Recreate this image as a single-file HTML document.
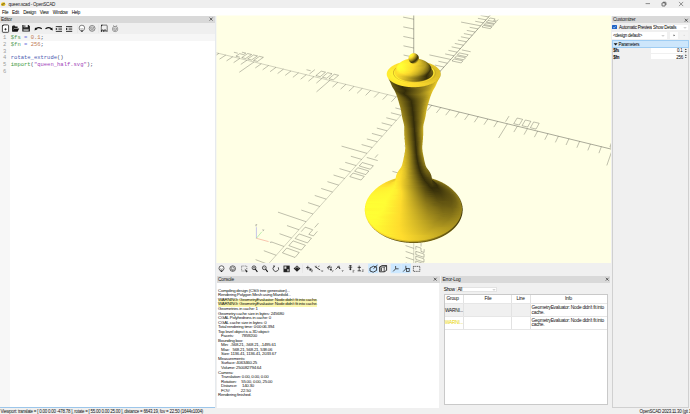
<!DOCTYPE html>
<html><head><meta charset="utf-8">
<style>
*{margin:0;padding:0;box-sizing:border-box}
html,body{width:690px;height:414px;overflow:hidden;background:#f0f0f0;font-family:"Liberation Sans",sans-serif;color:#000}
.a{position:absolute}
.t{position:absolute;white-space:nowrap}
.hdr{position:absolute;background:#d9d9d9}
</style></head><body>
<div class="a" style="left:0;top:0;width:690px;height:8px;background:#efefef"></div>
<div class="a" style="left:0;top:8px;width:690px;height:7.5px;background:#fff"></div>
<div class="t" style="left:8.5px;top:2.03px;font-size:4.59px;letter-spacing:-0.246px;line-height:5.74px;color:#222;">queen.scad - OpenSCAD</div>
<div class="t" style="left:2px;top:9.83px;font-size:4.59px;letter-spacing:-0.246px;line-height:5.74px;color:#000;">File</div><div class="t" style="left:12px;top:9.83px;font-size:4.59px;letter-spacing:-0.246px;line-height:5.74px;color:#000;">Edit</div><div class="t" style="left:23.2px;top:9.83px;font-size:4.59px;letter-spacing:-0.246px;line-height:5.74px;color:#000;">Design</div><div class="t" style="left:39.8px;top:9.83px;font-size:4.59px;letter-spacing:-0.246px;line-height:5.74px;color:#000;">View</div><div class="t" style="left:52.8px;top:9.83px;font-size:4.59px;letter-spacing:-0.246px;line-height:5.74px;color:#000;">Window</div><div class="t" style="left:71.7px;top:9.83px;font-size:4.59px;letter-spacing:-0.246px;line-height:5.74px;color:#000;">Help</div>

<div class="hdr" style="left:0;top:15.5px;width:215px;height:7px"></div>
<div class="t" style="left:1px;top:16.86px;font-size:4.70px;letter-spacing:-0.252px;line-height:5.88px;color:#222;">Editor</div>
<div class="a" style="left:0;top:22.5px;width:215px;height:11.6px;background:#efefef"></div>
<div class="a" style="left:0;top:34.1px;width:215px;height:373.4px;background:#fff"></div>
<div class="a" style="left:0;top:34.1px;width:10.4px;height:373.4px;background:#f7f7f7"></div>
<div class="a" style="left:0;top:34.1px;width:215px;height:6.8px;background:#f6f6f6"></div>
<div class="a" style="left:215px;top:15.5px;width:1.4px;height:392px;background:#e6eaee"></div>
<div class="t" style="left:3.0px;top:35.16px;font-size:5.5px;line-height:6.88px;color:#9a9a9a;font-family:'Liberation Mono'">1</div><div class="t" style="left:10.8px;top:35.16px;font-size:5.5px;line-height:6.88px;color:#000;font-family:'Liberation Mono'"><span style="color:#4e9a4e">$fs</span> <span style="color:#7070dd">=</span> <span style="color:#c07a55">0.1</span><span style="color:#333355">;</span></div><div class="t" style="left:3.0px;top:41.88px;font-size:5.5px;line-height:6.88px;color:#9a9a9a;font-family:'Liberation Mono'">2</div><div class="t" style="left:10.8px;top:41.88px;font-size:5.5px;line-height:6.88px;color:#000;font-family:'Liberation Mono'"><span style="color:#4e9a4e">$fn</span> <span style="color:#7070dd">=</span> <span style="color:#c07a55">256</span><span style="color:#333355">;</span></div><div class="t" style="left:3.0px;top:48.60px;font-size:5.5px;line-height:6.88px;color:#9a9a9a;font-family:'Liberation Mono'">3</div><div class="t" style="left:3.0px;top:55.32px;font-size:5.5px;line-height:6.88px;color:#9a9a9a;font-family:'Liberation Mono'">4</div><div class="t" style="left:10.8px;top:55.32px;font-size:5.5px;line-height:6.88px;color:#000;font-family:'Liberation Mono'"><span style="color:#4a58b0">rotate_extrude</span><span style="color:#404060">()</span></div><div class="t" style="left:3.0px;top:62.04px;font-size:5.5px;line-height:6.88px;color:#9a9a9a;font-family:'Liberation Mono'">5</div><div class="t" style="left:10.8px;top:62.04px;font-size:5.5px;line-height:6.88px;color:#000;font-family:'Liberation Mono'"><span style="color:#3d9a3d">import</span><span style="color:#404060">(</span><span style="color:#a040b8">"queen_half.svg"</span><span style="color:#404060">);</span></div><div class="t" style="left:3.0px;top:68.76px;font-size:5.5px;line-height:6.88px;color:#9a9a9a;font-family:'Liberation Mono'">6</div>

<svg class="a" style="left:0;top:0" width="690" height="414">
 <defs><clipPath id="vc"><rect x="216.5" y="15.5" width="394.5" height="247.5"/></clipPath></defs>
 <rect x="216.5" y="15.5" width="394.5" height="247.5" fill="#ffffe5"/>
 <g clip-path="url(#vc)" fill="none">
  <path d="M413.75 100.94L-18.36 -4.47M413.75 100.94L-802.04 1464.88M413.75 100.94L413.75 447.88" stroke="#000" stroke-width="0.4" stroke-opacity="0.45"/>
  <path d="M413.75 100.94L1334.35 325.51M413.75 100.94L568.31 -72.46M413.75 100.94L413.75 -1279.53" stroke="#000" stroke-width="0.42" stroke-opacity="0.8"/>
  <path d="M422.65 103.11L418.11 108.36M417.83 96.36L408.17 94.04M413.75 92.51L403.92 90.17M404.94 98.79L400.22 103.93M409.57 105.62L399.74 103.19M413.75 109.21L404.09 106.81M431.65 105.30L427.21 110.62M421.82 91.89L412.25 89.62M413.75 83.94L403.83 81.62M396.23 96.66L391.43 101.75M405.30 110.42L395.37 107.93M413.75 117.34L404.18 114.90M440.75 107.52L436.40 112.89M425.72 87.51L416.23 85.29M413.75 75.20L403.74 72.92M387.62 94.56L382.72 99.59M400.92 115.34L390.90 112.78M413.75 125.32L404.26 122.86M449.95 109.77L445.70 115.20M429.53 83.24L420.13 81.07M413.75 66.30L403.64 64.05M379.09 92.48L374.12 97.46M396.43 120.37L386.32 117.76M413.75 133.17L404.34 130.68M459.25 112.04L455.10 117.53M433.26 79.06L423.93 76.93M413.75 57.23L403.55 55.02M370.65 90.42L365.60 95.35M391.83 125.53L381.63 122.85M413.75 140.87L404.42 138.37M468.66 114.33L464.62 119.89M436.90 74.96L427.66 72.89M413.75 47.99L403.45 45.82M362.31 88.39L357.17 93.26M387.12 130.82L376.82 128.07M413.75 148.45L404.50 145.93M478.18 116.65L474.24 122.27M440.47 70.96L431.31 68.93M413.75 38.58L403.35 36.44M354.05 86.37L348.84 91.19M382.28 136.24L371.88 133.42M413.75 155.90L404.58 153.36M487.80 119.00L483.97 124.68M443.96 67.05L434.88 65.06M413.75 28.97L403.25 26.88M345.87 84.38L340.59 89.15M377.33 141.80L366.83 138.91M413.75 163.23L404.66 160.66M497.53 121.37L493.81 127.12M447.38 63.21L438.37 61.26M413.75 19.19L403.15 17.13M337.78 82.41L332.43 87.13M372.24 147.51L361.64 144.54M413.75 170.43L404.73 167.84M507.37 123.78L498.55 138.01M450.72 59.46L429.45 54.91M413.75 9.20L388.30 4.43M329.78 80.45L316.52 91.86M367.02 153.36L341.57 146.13M413.75 177.51L392.45 171.32M517.33 126.21L513.84 132.09M454.00 55.78L445.15 53.91M413.75 -0.98L402.94 -2.94M321.86 78.52L316.36 83.14M361.66 159.38L350.85 156.25M413.75 184.48L404.88 181.86M527.41 128.66L524.04 134.61M457.21 52.18L448.43 50.35M413.75 -11.37L402.83 -13.28M314.01 76.61L308.45 81.18M356.15 165.56L345.23 162.35M413.75 191.33L404.95 188.70M537.60 131.15L534.35 137.17M460.36 48.65L451.65 46.86M413.75 -21.97L402.72 -23.82M306.25 74.71L300.62 79.24M350.49 171.90L339.47 168.60M413.75 198.08L405.02 195.43M547.91 133.66L544.79 139.76M463.44 45.19L454.80 43.43M413.75 -32.78L402.61 -34.59M298.57 72.84L292.87 77.32M344.68 178.43L333.54 175.03M413.75 204.71L405.09 202.05M558.34 136.21L555.36 142.38M466.46 41.80L457.89 40.08M413.75 -43.83L402.49 -45.57M290.96 70.98L285.20 75.42M338.70 185.13L327.45 181.65M413.75 211.24L405.16 208.57M568.90 138.78L566.05 145.02M469.42 38.48L460.92 36.79M413.75 -55.10L402.38 -56.79M283.43 69.15L277.61 73.54M332.55 192.03L321.18 188.45M413.75 217.67L405.23 214.98M579.59 141.39L576.87 147.71M472.33 35.22L463.89 33.57M413.75 -66.62L402.26 -68.24M275.97 67.33L270.09 71.68M326.22 199.13L314.74 195.44M413.75 224.00L405.29 221.30M590.40 144.03L587.82 150.42M475.17 32.03L466.81 30.40M413.75 -78.38L402.13 -79.94M268.59 65.53L262.65 69.83M319.70 206.44L308.10 202.64M413.75 230.23L405.36 227.51M601.34 146.70L598.91 153.17M477.97 28.89L469.67 27.30M413.75 -90.40L402.01 -91.89M261.28 63.74L255.28 68.01M312.99 213.97L301.27 210.06M413.75 236.36L405.42 233.64M612.42 149.40L606.82 165.45M480.71 25.82L461.08 22.09M413.75 -102.68L385.55 -106.04M254.04 61.98L239.27 72.28M306.08 221.73L277.96 212.15M413.75 242.40L394.06 235.89M623.63 152.14L621.50 158.77M483.40 22.80L475.23 21.27M413.75 -115.24L401.75 -116.57M246.88 60.23L240.77 64.41M298.95 229.73L286.98 225.57M413.75 248.35L405.55 245.60M634.99 154.91L633.01 161.62M486.04 19.84L477.93 18.33M413.75 -128.08L401.62 -129.33M239.78 58.50L233.62 62.64M291.60 237.98L279.50 233.69M413.75 254.21L405.61 251.45M646.48 157.71L644.66 164.51M488.63 16.93L480.58 15.45M413.75 -141.21L401.48 -142.38M232.75 56.78L226.54 60.88M284.01 246.49L271.78 242.06M413.75 259.98L405.67 257.22M658.12 160.55L656.46 167.43M491.17 14.08L483.19 12.63M413.75 -154.64L401.34 -155.72M225.79 55.09L219.53 59.14M276.18 255.27L263.82 250.70M413.75 265.66L405.73 262.90M669.90 163.42L668.41 170.39M493.67 11.28L485.74 9.85M413.75 -168.38L401.20 -169.37M218.89 53.40L212.58 57.42M268.09 264.35L255.60 259.63M413.75 271.27L405.79 268.49M681.83 166.33L680.52 173.39M496.12 8.53L488.26 7.12M413.75 -182.45L401.05 -183.34M212.06 51.74L205.71 55.72M259.73 273.73L247.10 268.85M413.75 276.79L405.85 274.01M693.92 169.28L692.78 176.43M498.53 5.82L490.73 4.45M413.75 -196.85L400.90 -197.64M205.30 50.09L198.89 54.03M251.08 283.43L238.32 278.38M413.75 282.23L405.90 279.44M706.15 172.27L705.20 179.51M500.90 3.17L493.15 1.81M413.75 -211.60L400.75 -212.28M198.60 48.45L192.15 52.36M242.14 293.46L229.23 288.24M413.75 287.59L405.96 284.80M718.55 175.29L717.78 182.63M503.23 0.56L495.53 -0.77M413.75 -226.71L400.59 -227.27M191.96 46.83L185.47 50.70M232.88 303.85L219.83 298.44M413.75 292.87L406.01 290.08M731.11 178.35L729.70 196.60M505.51 -2.01L487.30 -5.12M413.75 -242.19L382.14 -243.24M185.38 45.23L169.45 54.58M223.29 314.61L192.03 301.33M413.75 298.09L395.44 291.40M743.83 181.46L743.45 188.99M507.76 -4.53L500.18 -5.81M413.75 -258.06L400.26 -258.37M178.87 43.64L172.29 47.44M213.35 325.76L200.01 319.95M413.75 303.22L406.12 300.41M756.72 184.60L756.55 192.24M509.97 -7.01L502.44 -8.27M413.75 -274.32L400.09 -274.51M172.42 42.07L165.80 45.83M203.04 337.33L189.55 331.30M413.75 308.29L406.18 305.48M769.78 187.79L769.81 195.52M512.14 -9.44L504.67 -10.68M413.75 -291.01L399.92 -291.06M166.02 40.51L159.36 44.23M192.33 349.34L178.70 343.08M413.75 313.28L406.23 310.47M783.02 191.02L783.26 198.86M514.28 -11.84L506.85 -13.06M413.75 -308.13L399.74 -308.03M159.69 38.96L152.99 42.65M181.22 361.80L167.44 355.31M413.75 318.21L406.28 315.39M796.43 194.29L796.89 202.24M516.38 -14.19L509.01 -15.39M413.75 -325.70L399.56 -325.44M153.41 37.43L146.67 41.09M169.67 374.77L155.73 368.01M413.75 323.07L406.33 320.25M810.03 197.60L810.71 205.66M518.44 -16.51L511.12 -17.69M413.75 -343.74L399.37 -343.32M147.19 35.91L140.41 39.54M157.65 388.25L143.56 381.22M413.75 327.86L406.38 325.04M823.80 200.97L824.72 209.13M520.47 -18.79L513.21 -19.95M413.75 -362.26L399.18 -361.67M141.02 34.41L134.21 38.00M145.14 402.28L130.90 394.96M413.75 332.59L406.43 329.76M837.77 204.37L838.93 212.65M522.47 -21.03L515.25 -22.18M413.75 -381.30L398.98 -380.53M134.91 32.92L128.07 36.48M132.11 416.90L117.71 409.28M413.75 337.25L406.48 334.42M851.93 207.83L853.33 216.22M524.44 -23.24L517.27 -24.36M413.75 -400.86L398.78 -399.90M128.86 31.44L121.98 34.97M118.52 432.15L103.96 424.20M413.75 341.86L406.53 339.03M866.29 211.33L870.34 232.25M526.37 -25.41L509.39 -28.05M413.75 -420.97L377.79 -418.22M122.86 29.98L106.02 38.50M104.33 448.06L69.57 428.44M413.75 346.40L396.64 339.64M880.85 214.88L882.76 223.52M528.28 -27.55L521.21 -28.64M413.75 -441.66L398.36 -440.28M116.91 28.53L109.97 31.99M89.51 464.68L74.65 456.01M413.75 350.88L406.62 348.05M895.61 218.48L897.78 227.24M530.15 -29.65L523.13 -30.72M413.75 -462.94L398.13 -461.34M111.02 27.09L104.04 30.52M74.02 482.07L59.00 472.99M413.75 355.30L406.67 352.47M910.58 222.13L913.03 231.02M532.00 -31.72L525.02 -32.78M413.75 -484.85L397.91 -483.02M105.18 25.66L98.17 29.07M57.80 500.26L42.63 490.76M413.75 359.67L406.71 356.83M925.77 225.84L928.49 234.85M533.82 -33.76L526.89 -34.80M413.75 -507.42L397.67 -505.33M99.38 24.25L92.35 27.63M40.81 519.33L25.48 509.37M413.75 363.98L406.76 361.14M941.18 229.60L944.19 238.74M535.61 -35.77L528.72 -36.79M413.75 -530.67L397.43 -528.32M93.64 22.85L86.58 26.20M22.98 539.33L7.50 528.88M413.75 368.23L406.80 365.40M956.80 233.41L960.11 242.69M537.37 -37.75L530.53 -38.76M413.75 -554.63L397.18 -552.00M87.95 21.46L80.86 24.78M4.25 560.33L-11.37 549.36M413.75 372.43L406.85 369.60M972.66 237.28L976.27 246.69M539.11 -39.69L532.31 -40.69M413.75 -579.34L396.93 -576.42M82.31 20.09L75.19 23.37M-15.44 582.42L-31.20 570.88M413.75 376.58L406.89 373.74M988.75 241.20L992.68 250.76M540.82 -41.61L534.07 -42.59M413.75 -604.84L396.66 -601.60M76.72 18.72L69.57 21.98M-36.17 605.68L-52.06 593.52M413.75 380.67L406.93 377.84M1005.08 245.19L1009.33 254.88M542.50 -43.50L535.79 -44.47M413.75 -631.16L396.39 -627.59M71.17 17.37L64.00 20.60M-58.03 630.21L-74.04 617.38M413.75 384.72L406.98 381.88M1021.65 249.23L1032.92 273.47M544.16 -45.37L528.25 -47.64M413.75 -658.34L372.05 -649.07M65.68 16.03L48.15 23.83M-81.11 656.10L-119.06 624.22M413.75 388.71L397.69 381.95M1038.47 253.33L1043.39 263.33M545.80 -47.20L539.18 -48.14M413.75 -686.42L395.82 -682.13M60.23 14.70L53.00 17.87M-105.52 683.48L-121.75 669.15M413.75 392.65L407.06 389.82M1055.55 257.50L1060.82 267.65M547.41 -49.01L540.83 -49.93M413.75 -715.46L395.52 -710.77M54.82 13.38L47.57 16.53M-131.37 712.49L-147.68 697.30M413.75 396.55L407.10 393.72M1072.89 261.73L1078.52 272.03M549.00 -50.79L542.46 -51.70M413.75 -745.50L395.21 -740.39M49.46 12.07L42.19 15.20M-158.80 743.26L-175.18 727.14M413.75 400.40L407.14 397.57M1090.49 266.02L1096.49 276.49M550.56 -52.55L544.07 -53.45M413.75 -776.59L394.89 -771.03M44.15 10.78L36.86 13.87M-187.96 775.97L-204.38 758.83M413.75 404.20L407.18 401.37M1108.37 270.38L1114.75 281.01M552.11 -54.28L545.65 -55.16M413.75 -808.79L394.55 -802.75M38.88 9.49L31.56 12.56M-219.01 810.81L-235.44 792.54M413.75 407.95L407.22 405.13M1126.52 274.81L1133.30 285.61M553.63 -55.99L547.21 -56.86M413.75 -842.16L394.21 -835.62M33.66 8.22L26.32 11.26M-252.15 847.98L-268.56 828.48M413.75 411.66L407.26 408.84M1144.97 279.31L1152.15 290.28M555.13 -57.67L548.75 -58.53M413.75 -876.77L393.85 -869.68M28.47 6.95L21.12 9.97M-287.59 887.74L-303.93 866.87M413.75 415.33L407.30 412.51M1163.70 283.88L1171.31 295.03M556.61 -59.33L550.27 -60.18M413.75 -912.68L393.48 -905.01M23.34 5.70L15.96 8.69M-325.58 930.36L-341.81 907.98M413.75 418.95L407.34 416.14M1182.74 288.52L1190.77 299.85M558.07 -60.97L551.77 -61.81M413.75 -949.98L393.10 -941.69M18.24 4.46L10.84 7.43M-366.41 976.16L-382.46 952.10M413.75 422.53L407.37 419.72M1202.08 293.24L1223.00 321.65M559.51 -62.58L544.55 -64.55M413.75 -988.73L364.12 -967.63M13.18 3.22L-4.87 10.39M-410.40 1025.52L-447.29 964.90M413.75 426.07L398.62 419.36M1221.74 298.04L1230.67 309.74M560.93 -64.18L554.70 -64.99M413.75 -1029.03L392.28 -1019.38M8.17 2.00L0.73 4.92M-457.95 1078.86L-473.39 1050.79M413.75 429.57L407.45 426.76M1241.71 302.91L1251.12 314.81M562.33 -65.75L556.14 -66.55M413.75 -1070.98L391.85 -1060.57M3.20 0.79L-4.26 3.68M-509.49 1136.68L-524.48 1106.23M413.75 433.03L407.48 430.22M1262.02 307.87L1271.92 319.96M563.71 -67.30L557.56 -68.09M413.75 -1114.67L391.40 -1103.45M-1.74 -0.42L-9.21 2.46M-565.56 1199.58L-579.95 1166.43M413.75 436.44L407.52 433.64M1282.67 312.90L1293.07 325.20M565.07 -68.83L558.96 -69.61M413.75 -1160.23L390.93 -1148.12M-6.63 -1.61L-14.12 1.24M-626.77 1268.25L-640.39 1232.03M413.75 439.82L407.56 437.02M1303.67 318.02L1314.58 330.54M566.42 -70.34L560.34 -71.11M413.75 -1207.76L390.44 -1194.72M-11.48 -2.79L-18.99 0.03M-693.88 1343.54L-706.51 1303.79M413.75 443.16L407.59 440.37M1325.02 323.23L1336.46 335.96M567.75 -71.83L561.70 -72.59M413.75 -1257.40L389.93 -1243.35M-16.30 -3.97L-23.82 -1.16M-767.77 1426.43L-779.14 1382.61M413.75 446.46L407.63 443.67" stroke="#000" stroke-width="0.36" stroke-opacity="0.7"/>
  <path d="M509.05 116.08L505.53 121.68M517.16 118.02L522.62 119.33L519.26 125.02L513.74 123.68ZM525.36 119.99L530.86 121.30L527.60 127.05L522.03 125.69ZM533.63 121.96L539.19 123.29L536.03 129.09L530.40 127.73ZM462.91 60.83L461.13 62.92L452.06 60.97L453.88 58.91ZM465.54 57.75L463.79 59.80L454.78 57.89L456.58 55.86ZM468.13 54.72L466.41 56.73L457.46 54.86L459.22 52.86ZM470.67 51.74L461.83 49.92M427.37 8.94L427.29 14.55L416.44 12.50L416.46 6.91ZM427.48 0.40L427.40 6.11L416.46 4.09L416.48 -1.59ZM427.60 -8.28L427.52 -2.48L416.49 -4.45L416.50 -10.23ZM427.71 -17.11L416.52 -19.02M334.20 74.25L338.57 75.30L333.32 79.84L328.92 78.77ZM327.71 72.70L332.03 73.73L326.73 78.24L322.37 77.18ZM321.27 71.16L325.56 72.18L320.20 76.65L315.87 75.60ZM314.88 69.63L309.43 74.03M306.50 69.74L310.73 70.76M377.94 154.41L375.06 157.73M377.73 160.59L366.78 157.45M373.34 165.74L370.35 169.23L359.25 165.97L362.30 162.53ZM368.84 171.00L365.79 174.58L354.59 171.24L357.71 167.72ZM364.25 176.38L361.12 180.04L349.83 176.63L353.02 173.02ZM421.68 177.86L421.64 181.76M425.02 184.69L415.99 182.04M424.94 190.45L424.89 194.24L415.97 191.57L415.98 187.79ZM424.86 196.13L424.81 199.87L415.95 197.19L415.96 193.45ZM424.79 201.73L424.74 205.42L415.94 202.73L415.95 199.04ZM612.15 140.75L618.22 142.20L617.42 144.56L611.32 143.09L609.91 147.05L616.06 148.54M621.27 142.93L627.40 144.40L625.36 150.80L619.15 149.29ZM630.48 145.14L636.68 146.62L634.76 153.09L628.48 151.56ZM639.79 147.36L646.04 148.86L644.25 155.39L637.91 153.85ZM491.84 26.95L490.39 28.65L482.03 27.06L483.52 25.37ZM494.00 24.42L492.57 26.10L484.27 24.53L485.74 22.87ZM496.13 21.93L494.71 23.59L486.47 22.04L487.91 20.40ZM498.22 19.48L496.83 21.11L493.74 20.54L495.15 18.92L490.06 17.98L488.63 19.59M428.88 -104.36L428.79 -97.44L416.74 -98.90L416.75 -105.78ZM429.02 -114.92L428.93 -107.86L416.76 -109.26L416.78 -116.27ZM429.16 -125.67L429.07 -118.48L416.79 -119.81L416.81 -126.95ZM429.31 -136.62L429.21 -129.30L424.54 -129.77L424.61 -137.08L416.84 -137.83L416.82 -130.56M259.44 56.37L263.39 57.31L257.53 61.42L253.55 60.46ZM253.56 54.96L257.47 55.90L251.56 59.97L247.62 59.01ZM247.72 53.56L251.60 54.49L245.65 58.54L241.74 57.59ZM241.92 52.18L245.78 53.10L243.55 54.59L239.68 53.66L235.90 56.17L239.79 57.11M233.92 52.28L237.76 53.20M318.50 223.11L314.67 227.53M317.32 231.35L313.42 235.91L308.81 234.31L312.74 229.77L305.17 227.16L301.20 231.65M311.45 238.22L307.45 242.91L295.11 238.54L299.19 233.93ZM305.42 245.28L301.32 250.09L288.87 245.60L293.05 240.87ZM299.24 252.52L295.02 257.46L282.46 252.85L286.75 248.00ZM421.07 243.15L421.04 246.47M424.16 249.17L424.11 252.45L420.99 251.40L421.02 248.12L415.82 246.39L415.81 249.67M424.09 254.08L424.05 257.32L415.80 254.54L415.81 251.30ZM424.02 258.93L423.98 262.13L415.79 259.34L415.79 256.14ZM423.96 263.72L423.92 266.89L415.77 264.09L415.78 260.93ZM728.38 168.56L735.25 170.20L734.74 177.38L727.77 175.69M728.15 171.20L735.06 172.87M738.70 171.02L745.64 172.69L745.29 179.94L738.25 178.23ZM749.13 173.52L756.14 175.20L755.96 182.53L748.84 180.80ZM759.67 176.04L766.76 177.74L766.74 185.15L759.54 183.40ZM515.76 -1.07L514.55 0.36L506.81 -0.97L508.05 -2.38ZM517.56 -3.18L516.37 -1.77L508.67 -3.08L509.90 -4.47ZM519.34 -5.26L518.16 -3.87L510.51 -5.16L511.72 -6.53ZM521.09 -7.31L519.93 -5.94L512.33 -7.22L513.52 -8.57M518.24 -7.78L517.07 -6.42M430.77 -246.02L430.66 -237.26L417.10 -237.74L417.13 -246.44ZM430.95 -259.39L430.83 -250.45L417.14 -250.83L417.16 -259.70ZM431.13 -273.05L431.01 -263.91L417.17 -264.19L417.20 -273.25ZM431.32 -287.00L431.20 -277.67L417.21 -277.83L417.23 -287.08M426.01 -287.03L425.92 -277.73M191.56 40.13L195.15 40.99L188.81 44.72L185.19 43.85ZM186.20 38.85L189.77 39.70L183.39 43.41L179.80 42.54ZM180.89 37.57L184.43 38.42L178.01 42.10L174.45 41.24ZM175.61 36.31L179.12 37.15L172.67 40.80L169.14 39.95M173.20 37.67L176.72 38.51M167.95 36.40L171.45 37.24M237.68 316.53L232.35 322.69M234.77 328.03L229.31 334.43L215.64 328.46L221.18 322.18M229.64 325.82L224.15 332.18M226.53 337.68L220.90 344.27L207.10 338.12L212.82 331.64ZM218.04 347.62L212.23 354.43L198.29 348.08L204.19 341.40ZM209.27 357.89L203.27 364.92L189.21 358.36L195.30 351.47ZM420.54 299.12L420.52 301.99M423.42 304.48L423.38 307.32L415.67 304.48L415.67 301.64M420.50 303.42L420.48 306.25M423.36 308.73L423.32 311.53L415.66 308.68L415.66 305.88ZM423.30 312.92L423.27 315.69L415.64 312.84L415.65 310.07ZM423.25 317.06L423.21 319.80L415.63 316.95L415.64 314.21ZM860.39 200.14L860.96 203.16L868.84 205.06M868.23 202.01L869.88 210.22M872.17 202.96L880.09 204.85L881.95 213.15L873.89 211.19ZM884.07 205.80L892.09 207.72L894.16 216.11L886.00 214.13ZM896.12 208.69L904.23 210.63L906.51 219.12L898.26 217.11ZM535.87 -24.61L534.84 -23.41L527.63 -24.53L528.69 -25.73ZM537.39 -26.40L536.38 -25.21L529.21 -26.32L530.26 -27.50ZM538.90 -28.17L537.90 -26.99L530.77 -28.09L531.80 -29.25ZM540.39 -29.91L537.73 -30.31L536.73 -29.15M539.40 -28.75L532.31 -29.83M433.21 -428.19L433.06 -416.76L417.57 -415.63L417.60 -426.95ZM433.44 -445.69L433.29 -433.98L417.62 -432.67L417.65 -444.26ZM433.68 -463.62L433.52 -451.62L417.67 -450.13L417.70 -462.00ZM433.93 -481.98L427.82 -481.30L427.71 -469.05M433.76 -469.69L417.71 -468.00M129.65 25.32L132.94 26.10L126.22 29.52L122.91 28.71ZM124.76 24.15L128.02 24.93L121.27 28.31L117.99 27.52ZM119.90 22.98L123.13 23.76L116.36 27.12L113.10 26.33ZM115.07 21.83L112.53 23.07L115.75 23.84M118.29 22.60L111.48 25.94M107.73 21.91L110.93 22.68M121.43 450.92L113.48 460.10M115.19 468.08L109.44 464.77L101.20 474.30M106.98 477.69L91.66 468.72M102.80 482.59L94.28 492.57L78.82 483.25L87.43 473.50ZM89.93 497.66L81.08 508.03L65.47 498.35L74.43 488.22ZM76.56 513.32L67.35 524.11L51.60 514.04L60.91 503.51ZM420.09 347.64L420.07 350.14M422.77 352.46L420.06 351.38L420.03 353.85M422.74 354.93L415.54 352.07M422.73 356.16L422.69 358.60L415.53 355.74L415.54 353.30ZM422.68 359.82L422.64 362.24L415.52 359.37L415.53 356.95ZM422.63 363.44L422.60 365.83L415.51 362.97L415.52 360.57ZM1020.67 238.48L1011.65 236.33L1013.24 239.81L1022.33 241.99L1025.14 247.94L1015.94 245.71M1025.21 239.57L1034.34 241.75L1039.08 251.33L1029.77 249.07ZM1038.93 242.85L1048.18 245.06L1053.19 254.76L1043.76 252.47ZM1052.83 246.18L1062.18 248.42L1067.48 258.23L1057.94 255.91ZM553.00 -44.68L552.12 -43.65L545.38 -44.61L546.29 -45.64ZM554.31 -46.22L553.44 -45.20L546.74 -46.15L547.63 -47.16ZM555.61 -47.73L554.75 -46.72L548.08 -47.66L548.96 -48.66ZM556.03 -48.23L556.88 -49.23L554.40 -49.58L553.54 -48.58L549.40 -49.16L550.28 -50.15M436.46 -671.17L436.25 -655.62L418.20 -651.69L418.24 -667.04ZM436.77 -695.05L436.56 -679.06L418.26 -674.82L418.30 -690.59ZM437.10 -719.60L436.88 -703.15L418.32 -698.58L418.37 -714.80ZM437.21 -727.94L437.44 -744.87L430.26 -742.92L430.10 -726.09L418.39 -723.03L418.43 -739.71M72.97 11.76L75.98 12.48L68.97 15.61L65.94 14.87ZM68.48 10.68L71.47 11.40L64.43 14.50L61.43 13.77ZM64.01 9.61L66.99 10.32L59.93 13.41L56.95 12.68ZM62.53 9.26L59.58 8.55L56.94 9.69L59.90 10.40L55.46 12.32L52.50 11.60M52.54 8.63L55.47 9.34M-60.13 660.78L-73.20 675.90M-87.23 705.15L-73.54 689.12L-79.90 683.64L-93.61 699.49L-104.08 690.19L-90.33 674.63M-94.24 713.37L-108.62 730.20L-125.56 714.48L-111.13 698.15ZM-115.99 738.83L-131.11 756.54L-148.12 740.01L-132.96 722.85ZM-138.86 765.62L-154.78 784.26L-171.85 766.86L-155.90 748.81ZM419.70 390.11L419.68 392.30M422.18 396.64L422.21 394.47L419.67 393.39L419.64 395.57L415.43 393.78L415.44 391.61M422.17 397.72L422.14 399.87L415.42 397.02L415.43 394.86ZM422.13 400.94L422.10 403.07L415.41 400.22L415.42 398.09ZM422.08 404.13L422.06 406.24L415.40 403.39L415.41 401.28ZM1197.19 280.71L1186.69 278.20L1194.65 289.13L1205.39 291.74L1200.23 284.80L1189.64 282.25M1202.47 281.98L1213.11 284.52L1221.67 295.70L1210.79 293.05ZM1218.46 285.80L1229.24 288.38L1238.17 299.70L1227.14 297.03ZM1234.66 289.68L1245.58 292.29L1254.90 303.77L1243.72 301.05ZM567.78 -61.99L567.02 -61.10L560.69 -61.93L561.47 -62.82ZM568.92 -63.32L568.16 -62.44L561.86 -63.26L562.64 -64.14ZM570.04 -64.64L569.29 -63.76L563.03 -64.58L563.80 -65.45ZM570.41 -65.07L571.15 -65.94L564.94 -66.74L564.18 -65.88L568.07 -65.38L568.82 -66.24M441.00 -1011.50L440.70 -989.13L419.07 -980.08L419.13 -1002.05ZM441.46 -1045.99L441.16 -1022.87L419.16 -1013.22L419.22 -1035.92ZM441.94 -1081.67L441.62 -1057.75L419.25 -1047.47L419.31 -1070.95ZM442.10 -1093.84L442.44 -1118.61L419.41 -1107.18L419.34 -1082.89L433.49 -1089.70L433.72 -1114.28M20.87 -0.71L23.64 -0.05L16.41 2.83L13.62 2.16ZM16.73 -1.70L19.49 -1.04L12.24 1.82L9.47 1.15ZM12.62 -2.68L15.36 -2.03L8.09 0.81L5.35 0.15ZM11.26 -3.01L8.54 -3.66L1.25 -0.85L3.98 -0.19L8.54 -1.96L5.82 -2.61M1.76 -3.59L4.47 -2.94M-383.47 1034.55L-408.91 1063.96M-443.08 1121.92L-415.81 1089.99L-432.25 1061.47L-459.32 1092.09L-449.25 1110.59L-422.06 1079.15M-457.20 1138.45L-486.43 1172.69L-502.29 1140.71L-473.32 1107.93ZM-501.57 1190.43L-532.99 1227.22L-548.38 1192.85L-517.29 1157.68ZM-549.29 1246.31L-583.14 1285.96L-597.93 1248.92L-564.49 1211.08ZM419.35 427.58L419.33 429.52M421.69 433.48L421.72 431.56L415.34 428.72L415.33 430.65L419.30 432.42L419.32 430.49M421.68 434.44L421.65 436.35L415.32 433.52L415.33 431.61ZM421.64 437.30L421.62 439.19L415.32 436.36L415.32 434.47ZM421.60 440.13L421.58 442.00L415.31 439.17L415.31 437.30Z" stroke="#000" stroke-width="0.36" stroke-opacity="0.7"/>
 </g>
 <g clip-path="url(#vc)"><defs><linearGradient id="g0" gradientUnits="userSpaceOnUse" x1="411" x2="417" y1="0" y2="0"><stop offset="0.0833" stop-color="#fff232" stop-opacity="0.25"/><stop offset="0.2500" stop-color="#ffe930" stop-opacity="0.69"/><stop offset="0.4167" stop-color="#fada2d" stop-opacity="0.75"/><stop offset="0.5833" stop-color="#ddbf27" stop-opacity="0.75"/><stop offset="0.7500" stop-color="#b9a021" stop-opacity="0.50"/><stop offset="0.9167" stop-color="#96811a" stop-opacity="0.06"/></linearGradient><linearGradient id="g1" gradientUnits="userSpaceOnUse" x1="410" x2="418" y1="0" y2="0"><stop offset="0.0625" stop-color="#fffc34" stop-opacity="0.62"/><stop offset="0.1875" stop-color="#fffd34"/><stop offset="0.4375" stop-color="#fddf2e"/><stop offset="0.5625" stop-color="#e5c628"/><stop offset="0.6875" stop-color="#c0a622"/><stop offset="0.8125" stop-color="#907c19" stop-opacity="0.94"/><stop offset="0.9375" stop-color="#655712" stop-opacity="0.19"/></linearGradient><linearGradient id="g2" gradientUnits="userSpaceOnUse" x1="409" x2="419" y1="0" y2="0"><stop offset="0.0500" stop-color="#fff632" stop-opacity="0.56"/><stop offset="0.1500" stop-color="#fffe34"/><stop offset="0.2500" stop-color="#fff933"/><stop offset="0.4500" stop-color="#f7d62c"/><stop offset="0.6500" stop-color="#b9a021"/><stop offset="0.7500" stop-color="#8f7b19"/><stop offset="0.8500" stop-color="#574b0f" stop-opacity="0.94"/><stop offset="0.9500" stop-color="#443b0c" stop-opacity="0.12"/></linearGradient><linearGradient id="g3" gradientUnits="userSpaceOnUse" x1="408" x2="419" y1="0" y2="0"><stop offset="0.0455" stop-color="#fcda2d" stop-opacity="0.12"/><stop offset="0.1364" stop-color="#fff031"/><stop offset="0.2273" stop-color="#fff432"/><stop offset="0.4091" stop-color="#fbdb2d"/><stop offset="0.5000" stop-color="#e6c729"/><stop offset="0.6818" stop-color="#a8911e"/><stop offset="0.8636" stop-color="#4f440e"/><stop offset="0.9545" stop-color="#53480f" stop-opacity="0.62"/></linearGradient><linearGradient id="g4" gradientUnits="userSpaceOnUse" x1="408" x2="419" y1="0" y2="0"><stop offset="0.0455" stop-color="#f2d12b" stop-opacity="0.38"/><stop offset="0.1364" stop-color="#ffe22e"/><stop offset="0.3182" stop-color="#f8d72c"/><stop offset="0.4091" stop-color="#e6c729"/><stop offset="0.5909" stop-color="#b2991f"/><stop offset="0.8636" stop-color="#433a0c"/><stop offset="0.9545" stop-color="#6a5b13" stop-opacity="0.88"/></linearGradient><linearGradient id="g5" gradientUnits="userSpaceOnUse" x1="408" x2="419" y1="0" y2="0"><stop offset="0.0455" stop-color="#dabc26" stop-opacity="0.50"/><stop offset="0.1364" stop-color="#ebcb2a"/><stop offset="0.2273" stop-color="#e9c929"/><stop offset="0.4091" stop-color="#caae24"/><stop offset="0.5909" stop-color="#95811a"/><stop offset="0.7727" stop-color="#4d430e"/><stop offset="0.8636" stop-color="#493f0d"/><stop offset="0.9545" stop-color="#877518"/></linearGradient><linearGradient id="g6" gradientUnits="userSpaceOnUse" x1="405" x2="423" y1="0" y2="0"><stop offset="0.0278" stop-color="#ffe02e" stop-opacity="0.31"/><stop offset="0.1389" stop-color="#fedf2e" stop-opacity="0.88"/><stop offset="0.1944" stop-color="#e9cb2a"/><stop offset="0.2500" stop-color="#c8ac23"/><stop offset="0.3056" stop-color="#c7ac23"/><stop offset="0.4167" stop-color="#a8911e"/><stop offset="0.5833" stop-color="#53480f"/><stop offset="0.6389" stop-color="#41380c"/><stop offset="0.6944" stop-color="#685a12"/><stop offset="0.7500" stop-color="#ac941e"/><stop offset="0.8056" stop-color="#c7ac23"/><stop offset="0.8611" stop-color="#bea422" stop-opacity="0.75"/><stop offset="0.9722" stop-color="#a7901d" stop-opacity="0.12"/></linearGradient><linearGradient id="g7" gradientUnits="userSpaceOnUse" x1="402" x2="425" y1="0" y2="0"><stop offset="0.0217" stop-color="#ffe52f" stop-opacity="0.06"/><stop offset="0.1087" stop-color="#ffe930" stop-opacity="0.88"/><stop offset="0.1522" stop-color="#ffea30"/><stop offset="0.2826" stop-color="#f8de2d"/><stop offset="0.3261" stop-color="#a18c1d"/><stop offset="0.4130" stop-color="#94801a"/><stop offset="0.4565" stop-color="#827117"/><stop offset="0.5435" stop-color="#4f440e"/><stop offset="0.5870" stop-color="#41380b"/><stop offset="0.6304" stop-color="#605311"/><stop offset="0.6739" stop-color="#927e1a"/><stop offset="0.7174" stop-color="#d2b525"/><stop offset="0.7609" stop-color="#d7b926"/><stop offset="0.8913" stop-color="#b59c20"/><stop offset="0.9348" stop-color="#a8911e" stop-opacity="0.69"/><stop offset="0.9783" stop-color="#95811a" stop-opacity="0.25"/></linearGradient><linearGradient id="g8" gradientUnits="userSpaceOnUse" x1="401" x2="427" y1="0" y2="0"><stop offset="0.0192" stop-color="#ffed31" stop-opacity="0.38"/><stop offset="0.0577" stop-color="#ffef31" stop-opacity="0.94"/><stop offset="0.0962" stop-color="#fff131"/><stop offset="0.2885" stop-color="#ffe72f"/><stop offset="0.3269" stop-color="#bda923"/><stop offset="0.3654" stop-color="#6c5d13"/><stop offset="0.4038" stop-color="#665812"/><stop offset="0.4808" stop-color="#443a0c"/><stop offset="0.5192" stop-color="#453c0c"/><stop offset="0.5577" stop-color="#655712"/><stop offset="0.5962" stop-color="#907c19"/><stop offset="0.6346" stop-color="#c9ae24"/><stop offset="0.6731" stop-color="#e2c428"/><stop offset="0.7500" stop-color="#d5b826"/><stop offset="0.9038" stop-color="#a7901e"/><stop offset="0.9423" stop-color="#927e1a" stop-opacity="0.69"/><stop offset="0.9808" stop-color="#776715" stop-opacity="0.12"/></linearGradient><linearGradient id="g9" gradientUnits="userSpaceOnUse" x1="399" x2="428" y1="0" y2="0"><stop offset="0.0172" stop-color="#ffe52f" stop-opacity="0.12"/><stop offset="0.0517" stop-color="#fff332" stop-opacity="0.69"/><stop offset="0.0862" stop-color="#fff632"/><stop offset="0.3621" stop-color="#ffe82f"/><stop offset="0.4310" stop-color="#463c0c"/><stop offset="0.4655" stop-color="#483f0d"/><stop offset="0.5000" stop-color="#5a4e10"/><stop offset="0.5690" stop-color="#9e881c"/><stop offset="0.6034" stop-color="#cfb325"/><stop offset="0.6379" stop-color="#e9c929"/><stop offset="0.7414" stop-color="#d9bc26"/><stop offset="0.9138" stop-color="#a48d1d"/><stop offset="0.9483" stop-color="#8b7819" stop-opacity="0.94"/><stop offset="0.9828" stop-color="#827017" stop-opacity="0.38"/></linearGradient><linearGradient id="g10" gradientUnits="userSpaceOnUse" x1="396" x2="431" y1="0" y2="0"><stop offset="0.0143" stop-color="#ffe12e" stop-opacity="0.12"/><stop offset="0.0714" stop-color="#ffdf2e" stop-opacity="0.81"/><stop offset="0.1000" stop-color="#fff231"/><stop offset="0.1286" stop-color="#fffb33"/><stop offset="0.1857" stop-color="#fffa33"/><stop offset="0.4143" stop-color="#ffe62f"/><stop offset="0.4429" stop-color="#edd32b"/><stop offset="0.4714" stop-color="#c6ad23"/><stop offset="0.5000" stop-color="#c6ab23"/><stop offset="0.5571" stop-color="#e9c929"/><stop offset="0.5857" stop-color="#efce2a"/><stop offset="0.6429" stop-color="#e7c729"/><stop offset="0.8429" stop-color="#ab941e"/><stop offset="0.8714" stop-color="#9a851b"/><stop offset="0.9000" stop-color="#7f6e16"/><stop offset="0.9286" stop-color="#b2991f" stop-opacity="0.94"/><stop offset="0.9571" stop-color="#e3c428" stop-opacity="0.62"/><stop offset="0.9857" stop-color="#d7ba26" stop-opacity="0.31"/></linearGradient><linearGradient id="g11" gradientUnits="userSpaceOnUse" x1="394" x2="434" y1="0" y2="0"><stop offset="0.0125" stop-color="#ffe22e" stop-opacity="0.19"/><stop offset="0.0625" stop-color="#ffe02e"/><stop offset="0.0875" stop-color="#ffe12e"/><stop offset="0.1375" stop-color="#fffd34"/><stop offset="0.1625" stop-color="#fffe34"/><stop offset="0.2875" stop-color="#fff632"/><stop offset="0.4625" stop-color="#ffdf2e"/><stop offset="0.5625" stop-color="#f1d02b"/><stop offset="0.6375" stop-color="#e0c228"/><stop offset="0.7875" stop-color="#ae961f"/><stop offset="0.8375" stop-color="#8b7819"/><stop offset="0.8625" stop-color="#6f6014"/><stop offset="0.9125" stop-color="#e3c428"/><stop offset="0.9375" stop-color="#e1c228" stop-opacity="0.88"/><stop offset="0.9625" stop-color="#dfc127" stop-opacity="0.38"/><stop offset="0.9875" stop-color="#9c871c" stop-opacity="0.06"/></linearGradient><linearGradient id="g12" gradientUnits="userSpaceOnUse" x1="392" x2="435" y1="0" y2="0"><stop offset="0.0116" stop-color="#ffe72f" stop-opacity="0.12"/><stop offset="0.0349" stop-color="#ffe32e" stop-opacity="0.62"/><stop offset="0.0581" stop-color="#ffe22e"/><stop offset="0.1047" stop-color="#ffe22e"/><stop offset="0.1512" stop-color="#fffd34"/><stop offset="0.2209" stop-color="#ffff34"/><stop offset="0.4767" stop-color="#ffdf2e"/><stop offset="0.5465" stop-color="#f5d42b"/><stop offset="0.7791" stop-color="#ae971f"/><stop offset="0.8256" stop-color="#8e7b19"/><stop offset="0.8488" stop-color="#786715"/><stop offset="0.8721" stop-color="#574b0f"/><stop offset="0.8953" stop-color="#c2a722"/><stop offset="0.9186" stop-color="#e1c228"/><stop offset="0.9419" stop-color="#e2c328"/><stop offset="0.9651" stop-color="#e0c228" stop-opacity="0.88"/><stop offset="0.9884" stop-color="#d6b926" stop-opacity="0.38"/></linearGradient><linearGradient id="g13" gradientUnits="userSpaceOnUse" x1="391" x2="437" y1="0" y2="0"><stop offset="0.0109" stop-color="#ffe72f" stop-opacity="0.44"/><stop offset="0.0326" stop-color="#ffe42f" stop-opacity="0.94"/><stop offset="0.0543" stop-color="#ffe42f"/><stop offset="0.1196" stop-color="#ffe82f"/><stop offset="0.1413" stop-color="#fffa33"/><stop offset="0.1630" stop-color="#ffff34"/><stop offset="0.2283" stop-color="#ffff34"/><stop offset="0.4891" stop-color="#fddb2d"/><stop offset="0.7283" stop-color="#b89f20"/><stop offset="0.7935" stop-color="#8d7a19"/><stop offset="0.8370" stop-color="#605311"/><stop offset="0.8587" stop-color="#675912"/><stop offset="0.8804" stop-color="#d8ba26"/><stop offset="0.9457" stop-color="#e1c228"/><stop offset="0.9674" stop-color="#dcbe27" stop-opacity="0.75"/><stop offset="0.9891" stop-color="#c6ab23" stop-opacity="0.12"/></linearGradient><linearGradient id="g14" gradientUnits="userSpaceOnUse" x1="390" x2="438" y1="0" y2="0"><stop offset="0.0104" stop-color="#ffe72f" stop-opacity="0.62"/><stop offset="0.0312" stop-color="#ffe52f"/><stop offset="0.1146" stop-color="#fde52f"/><stop offset="0.1354" stop-color="#fde930"/><stop offset="0.1562" stop-color="#fffd34"/><stop offset="0.2396" stop-color="#ffff34"/><stop offset="0.4896" stop-color="#fcd92c"/><stop offset="0.6354" stop-color="#d5b826"/><stop offset="0.7188" stop-color="#b49c20"/><stop offset="0.8021" stop-color="#776715"/><stop offset="0.8438" stop-color="#433a0c"/><stop offset="0.8646" stop-color="#c1a922"/><stop offset="0.9062" stop-color="#dcbe27"/><stop offset="0.9479" stop-color="#e0c128"/><stop offset="0.9688" stop-color="#ddbf27" stop-opacity="0.94"/><stop offset="0.9896" stop-color="#d6b926" stop-opacity="0.19"/></linearGradient><linearGradient id="g15" gradientUnits="userSpaceOnUse" x1="389" x2="439" y1="0" y2="0"><stop offset="0.0100" stop-color="#ffe830" stop-opacity="0.62"/><stop offset="0.0300" stop-color="#ffe62f"/><stop offset="0.1100" stop-color="#fce62f"/><stop offset="0.1300" stop-color="#ddbf27"/><stop offset="0.1500" stop-color="#ffed30"/><stop offset="0.1700" stop-color="#fffc34"/><stop offset="0.1900" stop-color="#ffff34"/><stop offset="0.2900" stop-color="#fffa33"/><stop offset="0.4900" stop-color="#fad82c"/><stop offset="0.6100" stop-color="#d9bb26"/><stop offset="0.6900" stop-color="#b9a021"/><stop offset="0.7700" stop-color="#857317"/><stop offset="0.8300" stop-color="#42390c"/><stop offset="0.8500" stop-color="#9c8f1d"/><stop offset="0.8700" stop-color="#edd62c"/><stop offset="0.8900" stop-color="#d0b325"/><stop offset="0.9100" stop-color="#dbbd27"/><stop offset="0.9500" stop-color="#dfc027"/><stop offset="0.9700" stop-color="#dfc027" stop-opacity="0.94"/><stop offset="0.9900" stop-color="#d6b826" stop-opacity="0.19"/></linearGradient><linearGradient id="g16" gradientUnits="userSpaceOnUse" x1="388" x2="440" y1="0" y2="0"><stop offset="0.0096" stop-color="#ffec30" stop-opacity="0.56"/><stop offset="0.0288" stop-color="#ffe72f"/><stop offset="0.1058" stop-color="#ffed30"/><stop offset="0.1250" stop-color="#dcc027"/><stop offset="0.1442" stop-color="#f7d82c"/><stop offset="0.1827" stop-color="#fff933"/><stop offset="0.2019" stop-color="#fffd34"/><stop offset="0.2981" stop-color="#fff833"/><stop offset="0.4712" stop-color="#fdda2d"/><stop offset="0.6058" stop-color="#d5b826"/><stop offset="0.6827" stop-color="#b29a1f"/><stop offset="0.7596" stop-color="#7e6d16"/><stop offset="0.8173" stop-color="#41380b"/><stop offset="0.8365" stop-color="#675912"/><stop offset="0.8558" stop-color="#eddb2d"/><stop offset="0.8750" stop-color="#e5ca29"/><stop offset="0.8942" stop-color="#d0b425"/><stop offset="0.9135" stop-color="#dcbe27"/><stop offset="0.9519" stop-color="#dfc127"/><stop offset="0.9712" stop-color="#dcbe27" stop-opacity="0.94"/><stop offset="0.9904" stop-color="#c6ab23" stop-opacity="0.12"/></linearGradient><linearGradient id="g17" gradientUnits="userSpaceOnUse" x1="387" x2="440" y1="0" y2="0"><stop offset="0.0094" stop-color="#fff131" stop-opacity="0.25"/><stop offset="0.0283" stop-color="#ffe930"/><stop offset="0.1038" stop-color="#ffef31"/><stop offset="0.1226" stop-color="#f0d72c"/><stop offset="0.1415" stop-color="#e5cd2a"/><stop offset="0.1604" stop-color="#fedf2e"/><stop offset="0.1981" stop-color="#fff232"/><stop offset="0.2358" stop-color="#fffb33"/><stop offset="0.3302" stop-color="#fff332"/><stop offset="0.4623" stop-color="#fedb2d"/><stop offset="0.5755" stop-color="#ddbf27"/><stop offset="0.6698" stop-color="#b49c20"/><stop offset="0.7453" stop-color="#857317"/><stop offset="0.7830" stop-color="#625511"/><stop offset="0.8019" stop-color="#473d0d"/><stop offset="0.8208" stop-color="#453c0c"/><stop offset="0.8396" stop-color="#695b13"/><stop offset="0.8585" stop-color="#99851b"/><stop offset="0.8774" stop-color="#fceb30"/><stop offset="0.8962" stop-color="#d1b425"/><stop offset="0.9717" stop-color="#e0c128"/><stop offset="0.9906" stop-color="#d4b725" stop-opacity="0.75"/></linearGradient><linearGradient id="g18" gradientUnits="userSpaceOnUse" x1="387" x2="441" y1="0" y2="0"><stop offset="0.0093" stop-color="#ffee31" stop-opacity="0.75"/><stop offset="0.0278" stop-color="#ffe830"/><stop offset="0.1019" stop-color="#fff131"/><stop offset="0.1204" stop-color="#dabe27"/><stop offset="0.1389" stop-color="#fce62f"/><stop offset="0.1574" stop-color="#ffde2d"/><stop offset="0.1759" stop-color="#ffe12e"/><stop offset="0.2315" stop-color="#fff532"/><stop offset="0.3241" stop-color="#ffef31"/><stop offset="0.4537" stop-color="#f9d72c"/><stop offset="0.5648" stop-color="#d6b926"/><stop offset="0.6574" stop-color="#ac951e"/><stop offset="0.7315" stop-color="#7b6a16"/><stop offset="0.7870" stop-color="#3d350b"/><stop offset="0.8241" stop-color="#6a5b13"/><stop offset="0.8426" stop-color="#6e5f13"/><stop offset="0.8611" stop-color="#efdd2d"/><stop offset="0.8981" stop-color="#d0b425"/><stop offset="0.9167" stop-color="#dcbe27"/><stop offset="0.9722" stop-color="#dec027"/><stop offset="0.9907" stop-color="#b89f20" stop-opacity="0.25"/></linearGradient><linearGradient id="g19" gradientUnits="userSpaceOnUse" x1="386" x2="441" y1="0" y2="0"><stop offset="0.0091" stop-color="#fffc34" stop-opacity="0.06"/><stop offset="0.0273" stop-color="#ffec30"/><stop offset="0.1182" stop-color="#fff031"/><stop offset="0.1364" stop-color="#d9bc26"/><stop offset="0.1545" stop-color="#feec30"/><stop offset="0.1727" stop-color="#fede2d"/><stop offset="0.1909" stop-color="#ffdd2d"/><stop offset="0.2636" stop-color="#ffef31"/><stop offset="0.3000" stop-color="#ffef31"/><stop offset="0.4091" stop-color="#ffde2d"/><stop offset="0.4455" stop-color="#f8d62c"/><stop offset="0.5727" stop-color="#ceb224"/><stop offset="0.6636" stop-color="#a28c1d"/><stop offset="0.7182" stop-color="#7d6c16"/><stop offset="0.7727" stop-color="#3e350b"/><stop offset="0.7909" stop-color="#453b0c"/><stop offset="0.8091" stop-color="#5b4f10"/><stop offset="0.8273" stop-color="#665812"/><stop offset="0.8455" stop-color="#685a12"/><stop offset="0.8636" stop-color="#d9c428"/><stop offset="0.8818" stop-color="#ebd12b"/><stop offset="0.9000" stop-color="#cdb124"/><stop offset="0.9182" stop-color="#dbbd27"/><stop offset="0.9727" stop-color="#e1c228"/><stop offset="0.9909" stop-color="#ccb024" stop-opacity="0.56"/></linearGradient><linearGradient id="g20" gradientUnits="userSpaceOnUse" x1="386" x2="441" y1="0" y2="0"><stop offset="0.0091" stop-color="#fff733" stop-opacity="0.25"/><stop offset="0.0273" stop-color="#ffeb30"/><stop offset="0.1182" stop-color="#fff231"/><stop offset="0.1364" stop-color="#dbbd27"/><stop offset="0.1545" stop-color="#fff131"/><stop offset="0.1727" stop-color="#fedc2d"/><stop offset="0.3182" stop-color="#ffe62f"/><stop offset="0.4273" stop-color="#f5d42b"/><stop offset="0.5364" stop-color="#d4b725"/><stop offset="0.6273" stop-color="#ac941e"/><stop offset="0.7000" stop-color="#7c6b16"/><stop offset="0.7545" stop-color="#3f360b"/><stop offset="0.7727" stop-color="#3d350b"/><stop offset="0.8091" stop-color="#5c4f10"/><stop offset="0.8455" stop-color="#625511"/><stop offset="0.8636" stop-color="#e0ca29"/><stop offset="0.8818" stop-color="#e9ce2a"/><stop offset="0.9000" stop-color="#ceb224"/><stop offset="0.9182" stop-color="#dcbe27"/><stop offset="0.9727" stop-color="#e1c228"/><stop offset="0.9909" stop-color="#d1b525" stop-opacity="0.75"/></linearGradient><linearGradient id="g21" gradientUnits="userSpaceOnUse" x1="386" x2="441" y1="0" y2="0"><stop offset="0.0091" stop-color="#fff833" stop-opacity="0.25"/><stop offset="0.0273" stop-color="#ffeb30"/><stop offset="0.1182" stop-color="#fff432"/><stop offset="0.1364" stop-color="#e1c729"/><stop offset="0.1545" stop-color="#f9ea30"/><stop offset="0.1909" stop-color="#fedd2d"/><stop offset="0.2273" stop-color="#f9d72c"/><stop offset="0.3545" stop-color="#fad82c"/><stop offset="0.4455" stop-color="#e7c829"/><stop offset="0.5545" stop-color="#c2a822"/><stop offset="0.6273" stop-color="#9e891c"/><stop offset="0.6818" stop-color="#756515"/><stop offset="0.7364" stop-color="#3f360b"/><stop offset="0.7545" stop-color="#38310a"/><stop offset="0.8455" stop-color="#6b5d13"/><stop offset="0.8636" stop-color="#f6e02e"/><stop offset="0.8818" stop-color="#ddbf27"/><stop offset="0.9000" stop-color="#d2b525"/><stop offset="0.9182" stop-color="#ddbf27"/><stop offset="0.9727" stop-color="#e2c328"/><stop offset="0.9909" stop-color="#d2b525" stop-opacity="0.75"/></linearGradient><linearGradient id="g22" gradientUnits="userSpaceOnUse" x1="386" x2="441" y1="0" y2="0"><stop offset="0.0091" stop-color="#f2e12e" stop-opacity="0.12"/><stop offset="0.0273" stop-color="#ffee31"/><stop offset="0.0818" stop-color="#ffeb30"/><stop offset="0.1182" stop-color="#fff332"/><stop offset="0.1364" stop-color="#fbe830"/><stop offset="0.1545" stop-color="#e1c829"/><stop offset="0.1727" stop-color="#fff232"/><stop offset="0.1909" stop-color="#fbd92c"/><stop offset="0.3909" stop-color="#e5c528"/><stop offset="0.4636" stop-color="#d5b826"/><stop offset="0.5909" stop-color="#9f8a1c"/><stop offset="0.7364" stop-color="#362e09"/><stop offset="0.7909" stop-color="#4a400d"/><stop offset="0.8091" stop-color="#5a4d10"/><stop offset="0.8273" stop-color="#564b0f"/><stop offset="0.8455" stop-color="#b69f21"/><stop offset="0.8636" stop-color="#f6dd2d"/><stop offset="0.8818" stop-color="#d1b425"/><stop offset="0.9182" stop-color="#dfc127"/><stop offset="0.9727" stop-color="#e2c328"/><stop offset="0.9909" stop-color="#c9ad23" stop-opacity="0.62"/></linearGradient><linearGradient id="g23" gradientUnits="userSpaceOnUse" x1="387" x2="441" y1="0" y2="0"><stop offset="0.0093" stop-color="#fff031" stop-opacity="0.81"/><stop offset="0.0278" stop-color="#ffea30"/><stop offset="0.1204" stop-color="#fff332"/><stop offset="0.1389" stop-color="#eed62c"/><stop offset="0.1574" stop-color="#f0dc2d"/><stop offset="0.1759" stop-color="#feec30"/><stop offset="0.1944" stop-color="#f7d62c"/><stop offset="0.4352" stop-color="#c5aa23"/><stop offset="0.5463" stop-color="#9b861b"/><stop offset="0.6944" stop-color="#433a0c"/><stop offset="0.7315" stop-color="#352e09"/><stop offset="0.7685" stop-color="#41380b"/><stop offset="0.7870" stop-color="#50450e"/><stop offset="0.8056" stop-color="#50450e"/><stop offset="0.8241" stop-color="#917d1a"/><stop offset="0.8426" stop-color="#f7de2e"/><stop offset="0.8611" stop-color="#dbbd27"/><stop offset="0.8796" stop-color="#d5b826"/><stop offset="0.8981" stop-color="#dfc127"/><stop offset="0.9722" stop-color="#e0c128"/><stop offset="0.9907" stop-color="#b79e20" stop-opacity="0.31"/></linearGradient><linearGradient id="g24" gradientUnits="userSpaceOnUse" x1="387" x2="440" y1="0" y2="0"><stop offset="0.0094" stop-color="#fff232" stop-opacity="0.31"/><stop offset="0.0283" stop-color="#ffec30"/><stop offset="0.1415" stop-color="#fff232"/><stop offset="0.1604" stop-color="#eed52c"/><stop offset="0.1792" stop-color="#f1dd2d"/><stop offset="0.1981" stop-color="#feed30"/><stop offset="0.2170" stop-color="#f5d52b"/><stop offset="0.2736" stop-color="#e9ca29"/><stop offset="0.5000" stop-color="#a18b1d"/><stop offset="0.7453" stop-color="#372f0a"/><stop offset="0.8019" stop-color="#4a400d"/><stop offset="0.8208" stop-color="#9b871c"/><stop offset="0.8396" stop-color="#f5da2d"/><stop offset="0.8585" stop-color="#dfc228"/><stop offset="0.8774" stop-color="#d6b926"/><stop offset="0.9151" stop-color="#e2c328"/><stop offset="0.9717" stop-color="#e4c528"/><stop offset="0.9906" stop-color="#d1b425" stop-opacity="0.81"/></linearGradient><linearGradient id="g25" gradientUnits="userSpaceOnUse" x1="388" x2="440" y1="0" y2="0"><stop offset="0.0096" stop-color="#f3e42f" stop-opacity="0.75"/><stop offset="0.0288" stop-color="#ffea30"/><stop offset="0.1442" stop-color="#fff231"/><stop offset="0.1827" stop-color="#ecd32b"/><stop offset="0.2019" stop-color="#feed31"/><stop offset="0.2404" stop-color="#e9c929"/><stop offset="0.3365" stop-color="#d1b525"/><stop offset="0.7404" stop-color="#362f0a"/><stop offset="0.7596" stop-color="#40370b"/><stop offset="0.7788" stop-color="#685a12"/><stop offset="0.7981" stop-color="#c9af24"/><stop offset="0.8173" stop-color="#f4d72c"/><stop offset="0.8365" stop-color="#dec027"/><stop offset="0.8558" stop-color="#d9bc26"/><stop offset="0.8942" stop-color="#e4c528"/><stop offset="0.9519" stop-color="#e5c628"/><stop offset="0.9712" stop-color="#d9bc26"/><stop offset="0.9904" stop-color="#ccb024" stop-opacity="0.25"/></linearGradient><linearGradient id="g26" gradientUnits="userSpaceOnUse" x1="388" x2="439" y1="0" y2="0"><stop offset="0.0098" stop-color="#9b911e" stop-opacity="0.19"/><stop offset="0.0294" stop-color="#e3d52c"/><stop offset="0.0490" stop-color="#ffe930"/><stop offset="0.1667" stop-color="#fff031"/><stop offset="0.1863" stop-color="#feec30"/><stop offset="0.2059" stop-color="#efd52c"/><stop offset="0.2451" stop-color="#fee72f"/><stop offset="0.2843" stop-color="#e2c328"/><stop offset="0.3039" stop-color="#d6b926"/><stop offset="0.4412" stop-color="#b1981f"/><stop offset="0.7157" stop-color="#443a0c"/><stop offset="0.7353" stop-color="#4c420d"/><stop offset="0.7549" stop-color="#736314"/><stop offset="0.7745" stop-color="#baa221"/><stop offset="0.7941" stop-color="#f0d12b"/><stop offset="0.8333" stop-color="#dcbe27"/><stop offset="0.8922" stop-color="#e6c629"/><stop offset="0.9706" stop-color="#e0c228"/><stop offset="0.9902" stop-color="#d8ba26" stop-opacity="0.69"/></linearGradient><linearGradient id="g27" gradientUnits="userSpaceOnUse" x1="389" x2="439" y1="0" y2="0"><stop offset="0.0100" stop-color="#756815" stop-opacity="0.62"/><stop offset="0.0300" stop-color="#d7ca29"/><stop offset="0.0500" stop-color="#ffe930"/><stop offset="0.1900" stop-color="#ffee31"/><stop offset="0.2100" stop-color="#feea30"/><stop offset="0.2300" stop-color="#f2d82c"/><stop offset="0.2700" stop-color="#f8de2e"/><stop offset="0.2900" stop-color="#f5d92c"/><stop offset="0.3300" stop-color="#d4b725"/><stop offset="0.3700" stop-color="#bda321"/><stop offset="0.6100" stop-color="#685a12"/><stop offset="0.6500" stop-color="#625411"/><stop offset="0.6700" stop-color="#685a12"/><stop offset="0.6900" stop-color="#7e6d16"/><stop offset="0.7300" stop-color="#d7ba26"/><stop offset="0.7500" stop-color="#f2d12b"/><stop offset="0.7900" stop-color="#e1c228"/><stop offset="0.9300" stop-color="#e8c829"/><stop offset="0.9700" stop-color="#dabc27"/><stop offset="0.9900" stop-color="#f1d02b" stop-opacity="0.12"/></linearGradient><linearGradient id="g28" gradientUnits="userSpaceOnUse" x1="389" x2="438" y1="0" y2="0"><stop offset="0.0102" stop-color="#685a12" stop-opacity="0.12"/><stop offset="0.0306" stop-color="#635612"/><stop offset="0.0714" stop-color="#ffeb30"/><stop offset="0.2551" stop-color="#ffea30"/><stop offset="0.2959" stop-color="#f5d92c"/><stop offset="0.3571" stop-color="#f4d52c"/><stop offset="0.4796" stop-color="#ad951f"/><stop offset="0.5612" stop-color="#98831b"/><stop offset="0.6020" stop-color="#9e891c"/><stop offset="0.6224" stop-color="#aa931e"/><stop offset="0.6837" stop-color="#e6c629"/><stop offset="0.7041" stop-color="#f3d12b"/><stop offset="0.7653" stop-color="#e5c628"/><stop offset="0.9286" stop-color="#e9c929"/><stop offset="0.9694" stop-color="#dbbd27"/><stop offset="0.9898" stop-color="#eece2a" stop-opacity="0.62"/></linearGradient><linearGradient id="g29" gradientUnits="userSpaceOnUse" x1="390" x2="438" y1="0" y2="0"><stop offset="0.0104" stop-color="#695a12" stop-opacity="0.62"/><stop offset="0.0312" stop-color="#5e5111"/><stop offset="0.0521" stop-color="#7c7017"/><stop offset="0.0729" stop-color="#d5c528"/><stop offset="0.0938" stop-color="#ffe830"/><stop offset="0.3021" stop-color="#ffe62f"/><stop offset="0.3646" stop-color="#f7d92c"/><stop offset="0.4271" stop-color="#fcda2d"/><stop offset="0.5104" stop-color="#eecd2a"/><stop offset="0.5729" stop-color="#f6d42b"/><stop offset="0.6979" stop-color="#eccb2a"/><stop offset="0.8854" stop-color="#ebcb2a"/><stop offset="0.9062" stop-color="#e5c628"/><stop offset="0.9271" stop-color="#d1b525"/><stop offset="0.9688" stop-color="#e9c929"/><stop offset="0.9896" stop-color="#f0cf2a" stop-opacity="0.12"/></linearGradient><linearGradient id="g30" gradientUnits="userSpaceOnUse" x1="390" x2="437" y1="0" y2="0"><stop offset="0.0106" stop-color="#6b5c13" stop-opacity="0.19"/><stop offset="0.0319" stop-color="#685a12"/><stop offset="0.0745" stop-color="#594d10"/><stop offset="0.0957" stop-color="#837618"/><stop offset="0.1170" stop-color="#d3c228"/><stop offset="0.1383" stop-color="#ffe72f"/><stop offset="0.4574" stop-color="#ffdd2d"/><stop offset="0.8617" stop-color="#edcd2a"/><stop offset="0.9255" stop-color="#cdb124"/><stop offset="0.9681" stop-color="#e1c228"/><stop offset="0.9894" stop-color="#eccc2a" stop-opacity="0.69"/></linearGradient><linearGradient id="g31" gradientUnits="userSpaceOnUse" x1="391" x2="437" y1="0" y2="0"><stop offset="0.0109" stop-color="#6a5b13" stop-opacity="0.75"/><stop offset="0.0326" stop-color="#665812"/><stop offset="0.0761" stop-color="#52470f"/><stop offset="0.0978" stop-color="#51460e"/><stop offset="0.1196" stop-color="#706314"/><stop offset="0.1413" stop-color="#b6a522"/><stop offset="0.1630" stop-color="#f0d92c"/><stop offset="0.1848" stop-color="#ffe52f"/><stop offset="0.4457" stop-color="#ffdd2d"/><stop offset="0.7935" stop-color="#f0d02a"/><stop offset="0.8152" stop-color="#eccc2a"/><stop offset="0.8370" stop-color="#d0b325"/><stop offset="0.8804" stop-color="#baa021"/><stop offset="0.9674" stop-color="#e5c629"/><stop offset="0.9891" stop-color="#f2d12b" stop-opacity="0.25"/></linearGradient><linearGradient id="g32" gradientUnits="userSpaceOnUse" x1="391" x2="436" y1="0" y2="0"><stop offset="0.0111" stop-color="#665812" stop-opacity="0.31"/><stop offset="0.0333" stop-color="#675912"/><stop offset="0.1222" stop-color="#4a400d"/><stop offset="0.1667" stop-color="#473e0d"/><stop offset="0.1889" stop-color="#736615"/><stop offset="0.2333" stop-color="#d9c228"/><stop offset="0.2556" stop-color="#ffe42f"/><stop offset="0.4556" stop-color="#ffdc2d"/><stop offset="0.7444" stop-color="#f2d12b"/><stop offset="0.8333" stop-color="#a8911e"/><stop offset="0.9667" stop-color="#ddbf27"/><stop offset="0.9889" stop-color="#edcd2a" stop-opacity="0.81"/></linearGradient><linearGradient id="g33" gradientUnits="userSpaceOnUse" x1="392" x2="436" y1="0" y2="0"><stop offset="0.0114" stop-color="#645612" stop-opacity="0.88"/><stop offset="0.0341" stop-color="#645612"/><stop offset="0.1705" stop-color="#3e360b"/><stop offset="0.2386" stop-color="#3c340b"/><stop offset="0.2841" stop-color="#91811a"/><stop offset="0.3295" stop-color="#ceb625"/><stop offset="0.3750" stop-color="#ffdf2e"/><stop offset="0.6023" stop-color="#f7d62c"/><stop offset="0.7386" stop-color="#a18b1c"/><stop offset="0.7614" stop-color="#9b861b"/><stop offset="0.9205" stop-color="#cdb124"/><stop offset="0.9659" stop-color="#e5c629"/><stop offset="0.9886" stop-color="#f4d32b" stop-opacity="0.38"/></linearGradient><linearGradient id="g34" gradientUnits="userSpaceOnUse" x1="392" x2="435" y1="0" y2="0"><stop offset="0.0116" stop-color="#615411" stop-opacity="0.31"/><stop offset="0.0349" stop-color="#615411"/><stop offset="0.1047" stop-color="#584c10"/><stop offset="0.2442" stop-color="#342d09"/><stop offset="0.3605" stop-color="#42390c"/><stop offset="0.4070" stop-color="#53470f"/><stop offset="0.4535" stop-color="#7b6a16"/><stop offset="0.5465" stop-color="#897618"/><stop offset="0.5930" stop-color="#7a6a16"/><stop offset="0.6395" stop-color="#7b6a16"/><stop offset="0.8721" stop-color="#b89f20"/><stop offset="0.9651" stop-color="#dec027"/><stop offset="0.9884" stop-color="#eecd2a" stop-opacity="0.81"/></linearGradient><linearGradient id="g35" gradientUnits="userSpaceOnUse" x1="393" x2="435" y1="0" y2="0"><stop offset="0.0119" stop-color="#5f5211" stop-opacity="0.69"/><stop offset="0.0357" stop-color="#5d5010"/><stop offset="0.2262" stop-color="#39310a"/><stop offset="0.2738" stop-color="#38310a"/><stop offset="0.7976" stop-color="#a58f1d"/><stop offset="0.8929" stop-color="#c3a822"/><stop offset="0.9643" stop-color="#e6c729"/><stop offset="0.9881" stop-color="#f1d02b" stop-opacity="0.19"/></linearGradient><linearGradient id="g36" gradientUnits="userSpaceOnUse" x1="393" x2="434" y1="0" y2="0"><stop offset="0.0122" stop-color="#675912" stop-opacity="0.12"/><stop offset="0.0366" stop-color="#5e5111" stop-opacity="0.94"/><stop offset="0.0610" stop-color="#584c10"/><stop offset="0.2805" stop-color="#342d09"/><stop offset="0.3049" stop-color="#362f0a"/><stop offset="0.7683" stop-color="#9a851b"/><stop offset="0.8902" stop-color="#bfa522"/><stop offset="0.9634" stop-color="#dfc127"/><stop offset="0.9878" stop-color="#eaca29" stop-opacity="0.56"/></linearGradient><linearGradient id="g37" gradientUnits="userSpaceOnUse" x1="394" x2="434" y1="0" y2="0"><stop offset="0.0125" stop-color="#695b13" stop-opacity="0.50"/><stop offset="0.0375" stop-color="#5c4f10"/><stop offset="0.2875" stop-color="#342d09"/><stop offset="0.7125" stop-color="#8f7b19"/><stop offset="0.8375" stop-color="#b39a20"/><stop offset="0.9375" stop-color="#d9bb26"/><stop offset="0.9625" stop-color="#e4c528" stop-opacity="0.94"/><stop offset="0.9875" stop-color="#eccc2a" stop-opacity="0.06"/></linearGradient><linearGradient id="g38" gradientUnits="userSpaceOnUse" x1="394" x2="433" y1="0" y2="0"><stop offset="0.0128" stop-color="#786815" stop-opacity="0.06"/><stop offset="0.0385" stop-color="#6c5e13" stop-opacity="0.94"/><stop offset="0.0641" stop-color="#5b4f10"/><stop offset="0.1154" stop-color="#4b410d"/><stop offset="0.2949" stop-color="#352e09"/><stop offset="0.7051" stop-color="#8b7819"/><stop offset="0.9615" stop-color="#dcbe27"/><stop offset="0.9872" stop-color="#e4c528" stop-opacity="0.50"/></linearGradient><linearGradient id="g39" gradientUnits="userSpaceOnUse" x1="395" x2="433" y1="0" y2="0"><stop offset="0.0132" stop-color="#7c6b16" stop-opacity="0.56"/><stop offset="0.0395" stop-color="#6b5d13"/><stop offset="0.1184" stop-color="#483e0d"/><stop offset="0.2500" stop-color="#342d09"/><stop offset="0.6447" stop-color="#827017"/><stop offset="0.9605" stop-color="#ddbf27"/><stop offset="0.9868" stop-color="#e5c628" stop-opacity="0.06"/></linearGradient><linearGradient id="g40" gradientUnits="userSpaceOnUse" x1="395" x2="432" y1="0" y2="0"><stop offset="0.0135" stop-color="#857318" stop-opacity="0.12"/><stop offset="0.0405" stop-color="#7c6b16"/><stop offset="0.1486" stop-color="#483e0d"/><stop offset="0.2297" stop-color="#342d09"/><stop offset="0.2568" stop-color="#362e09"/><stop offset="0.6081" stop-color="#7a6915"/><stop offset="0.9595" stop-color="#d3b625"/><stop offset="0.9865" stop-color="#ddbf27" stop-opacity="0.62"/></linearGradient><linearGradient id="g41" gradientUnits="userSpaceOnUse" x1="396" x2="432" y1="0" y2="0"><stop offset="0.0139" stop-color="#857318" stop-opacity="0.69"/><stop offset="0.0417" stop-color="#796815"/><stop offset="0.1528" stop-color="#4a400d"/><stop offset="0.2361" stop-color="#352e09"/><stop offset="0.7917" stop-color="#a7901e"/><stop offset="0.9583" stop-color="#d5b826"/><stop offset="0.9861" stop-color="#dfc127" stop-opacity="0.19"/></linearGradient><linearGradient id="g42" gradientUnits="userSpaceOnUse" x1="396" x2="431" y1="0" y2="0"><stop offset="0.0143" stop-color="#8c7919" stop-opacity="0.38"/><stop offset="0.0429" stop-color="#837117"/><stop offset="0.2143" stop-color="#433a0c"/><stop offset="0.2714" stop-color="#362e0a"/><stop offset="0.3000" stop-color="#38300a"/><stop offset="0.8429" stop-color="#aa931e"/><stop offset="0.9571" stop-color="#caaf24"/><stop offset="0.9857" stop-color="#d9bb26" stop-opacity="0.88"/></linearGradient><linearGradient id="g43" gradientUnits="userSpaceOnUse" x1="397" x2="431" y1="0" y2="0"><stop offset="0.0147" stop-color="#8a7718" stop-opacity="0.94"/><stop offset="0.0441" stop-color="#7f6e17"/><stop offset="0.2206" stop-color="#463c0c"/><stop offset="0.3088" stop-color="#372f0a"/><stop offset="0.8088" stop-color="#a08a1c"/><stop offset="0.9559" stop-color="#cdb124"/><stop offset="0.9853" stop-color="#dabc27" stop-opacity="0.44"/></linearGradient><linearGradient id="g44" gradientUnits="userSpaceOnUse" x1="397" x2="431" y1="0" y2="0"><stop offset="0.0147" stop-color="#8d7a19" stop-opacity="0.62"/><stop offset="0.0441" stop-color="#867418"/><stop offset="0.2794" stop-color="#3f370b"/><stop offset="0.3382" stop-color="#362f0a"/><stop offset="0.8088" stop-color="#9d881c"/><stop offset="0.8971" stop-color="#b89f20"/><stop offset="0.9559" stop-color="#d2b525"/><stop offset="0.9853" stop-color="#dfc027" stop-opacity="0.12"/></linearGradient><linearGradient id="g45" gradientUnits="userSpaceOnUse" x1="397" x2="430" y1="0" y2="0"><stop offset="0.0152" stop-color="#8f7c19" stop-opacity="0.31"/><stop offset="0.0455" stop-color="#8a7718"/><stop offset="0.3182" stop-color="#40370b"/><stop offset="0.3788" stop-color="#352e09"/><stop offset="0.7727" stop-color="#8c7919"/><stop offset="0.9545" stop-color="#c6ab23"/><stop offset="0.9848" stop-color="#d7b926" stop-opacity="0.81"/></linearGradient><linearGradient id="g46" gradientUnits="userSpaceOnUse" x1="397" x2="430" y1="0" y2="0"><stop offset="0.0152" stop-color="#917d1a" stop-opacity="0.06"/><stop offset="0.0455" stop-color="#8d7a19"/><stop offset="0.3788" stop-color="#37300a"/><stop offset="0.4091" stop-color="#352e09"/><stop offset="0.7727" stop-color="#8b7819"/><stop offset="0.8939" stop-color="#b0981f"/><stop offset="0.9545" stop-color="#cbaf24"/><stop offset="0.9848" stop-color="#dabc27" stop-opacity="0.50"/></linearGradient><linearGradient id="g47" gradientUnits="userSpaceOnUse" x1="398" x2="430" y1="0" y2="0"><stop offset="0.0156" stop-color="#8f7c19" stop-opacity="0.69"/><stop offset="0.0469" stop-color="#897618"/><stop offset="0.3594" stop-color="#3c330b"/><stop offset="0.4219" stop-color="#37300a"/><stop offset="0.7969" stop-color="#947f1a"/><stop offset="0.9531" stop-color="#d0b325"/><stop offset="0.9844" stop-color="#ddbf27" stop-opacity="0.19"/></linearGradient><linearGradient id="g48" gradientUnits="userSpaceOnUse" x1="398" x2="429" y1="0" y2="0"><stop offset="0.0161" stop-color="#917d1a" stop-opacity="0.38"/><stop offset="0.0484" stop-color="#8c7919"/><stop offset="0.4355" stop-color="#352e09"/><stop offset="0.7903" stop-color="#8b7819"/><stop offset="0.9516" stop-color="#c4a923"/><stop offset="0.9839" stop-color="#d4b725" stop-opacity="0.88"/></linearGradient><linearGradient id="g49" gradientUnits="userSpaceOnUse" x1="398" x2="429" y1="0" y2="0"><stop offset="0.0161" stop-color="#937f1a" stop-opacity="0.12"/><stop offset="0.0484" stop-color="#8f7c19"/><stop offset="0.4355" stop-color="#342d09"/><stop offset="0.7581" stop-color="#837117"/><stop offset="0.9516" stop-color="#c7ac23"/><stop offset="0.9839" stop-color="#d7ba26" stop-opacity="0.62"/></linearGradient><linearGradient id="g50" gradientUnits="userSpaceOnUse" x1="399" x2="429" y1="0" y2="0"><stop offset="0.0167" stop-color="#917e1a" stop-opacity="0.81"/><stop offset="0.0500" stop-color="#8a7718"/><stop offset="0.4167" stop-color="#342d09"/><stop offset="0.7500" stop-color="#847217"/><stop offset="0.9500" stop-color="#ccb024"/><stop offset="0.9833" stop-color="#dabc27" stop-opacity="0.31"/></linearGradient><linearGradient id="g51" gradientUnits="userSpaceOnUse" x1="399" x2="429" y1="0" y2="0"><stop offset="0.0167" stop-color="#947f1a" stop-opacity="0.56"/><stop offset="0.0500" stop-color="#8d7a19"/><stop offset="0.4167" stop-color="#352e09"/><stop offset="0.4500" stop-color="#37300a"/><stop offset="0.7833" stop-color="#8f7c19"/><stop offset="0.8833" stop-color="#b1991f"/><stop offset="0.9500" stop-color="#d1b425"/><stop offset="0.9833" stop-color="#e0c228" stop-opacity="0.06"/></linearGradient><linearGradient id="g52" gradientUnits="userSpaceOnUse" x1="399" x2="428" y1="0" y2="0"><stop offset="0.0172" stop-color="#96811a" stop-opacity="0.25"/><stop offset="0.0517" stop-color="#907d1a"/><stop offset="0.4310" stop-color="#362f0a"/><stop offset="0.4655" stop-color="#362f0a"/><stop offset="0.7759" stop-color="#867418"/><stop offset="0.9483" stop-color="#c3a822"/><stop offset="0.9828" stop-color="#d4b725" stop-opacity="0.75"/></linearGradient><linearGradient id="g53" gradientUnits="userSpaceOnUse" x1="400" x2="428" y1="0" y2="0"><stop offset="0.0179" stop-color="#937f1a" stop-opacity="0.94"/><stop offset="0.0536" stop-color="#8b7819"/><stop offset="0.4107" stop-color="#37300a"/><stop offset="0.4464" stop-color="#362e09"/><stop offset="0.7679" stop-color="#877518"/><stop offset="0.9464" stop-color="#c7ab23"/><stop offset="0.9821" stop-color="#d6b926" stop-opacity="0.44"/></linearGradient><linearGradient id="g54" gradientUnits="userSpaceOnUse" x1="400" x2="428" y1="0" y2="0"><stop offset="0.0179" stop-color="#96811a" stop-opacity="0.69"/><stop offset="0.0536" stop-color="#8e7b19"/><stop offset="0.4464" stop-color="#352e09"/><stop offset="0.7679" stop-color="#887618"/><stop offset="0.9464" stop-color="#cbaf24"/><stop offset="0.9821" stop-color="#dabc26" stop-opacity="0.19"/></linearGradient><linearGradient id="g55" gradientUnits="userSpaceOnUse" x1="400" x2="427" y1="0" y2="0"><stop offset="0.0185" stop-color="#98831b" stop-opacity="0.44"/><stop offset="0.0556" stop-color="#927e1a"/><stop offset="0.4630" stop-color="#342d09"/><stop offset="0.7963" stop-color="#897718"/><stop offset="0.9444" stop-color="#bda321"/><stop offset="0.9815" stop-color="#d0b325" stop-opacity="0.94"/></linearGradient><linearGradient id="g56" gradientUnits="userSpaceOnUse" x1="400" x2="427" y1="0" y2="0"><stop offset="0.0185" stop-color="#9a851b" stop-opacity="0.25"/><stop offset="0.0556" stop-color="#95801a"/><stop offset="0.4630" stop-color="#342d09"/><stop offset="0.7593" stop-color="#7f6e17"/><stop offset="0.9444" stop-color="#c0a622"/><stop offset="0.9815" stop-color="#d3b625" stop-opacity="0.75"/></linearGradient><linearGradient id="g57" gradientUnits="userSpaceOnUse" x1="401" x2="427" y1="0" y2="0"><stop offset="0.0192" stop-color="#98831b"/><stop offset="0.4423" stop-color="#352e09"/><stop offset="0.7500" stop-color="#806f17"/><stop offset="0.9423" stop-color="#c4a923"/><stop offset="0.9808" stop-color="#d4b726" stop-opacity="0.50"/></linearGradient><linearGradient id="g58" gradientUnits="userSpaceOnUse" x1="401" x2="427" y1="0" y2="0"><stop offset="0.0192" stop-color="#9a851b" stop-opacity="0.81"/><stop offset="0.0577" stop-color="#927e1a"/><stop offset="0.4423" stop-color="#362e09"/><stop offset="0.4808" stop-color="#39310a"/><stop offset="0.7115" stop-color="#766615"/><stop offset="0.8654" stop-color="#a7901d"/><stop offset="0.9423" stop-color="#c7ac23"/><stop offset="0.9808" stop-color="#d7ba26" stop-opacity="0.31"/></linearGradient><linearGradient id="g59" gradientUnits="userSpaceOnUse" x1="401" x2="427" y1="0" y2="0"><stop offset="0.0192" stop-color="#9c861b" stop-opacity="0.69"/><stop offset="0.0577" stop-color="#95801a"/><stop offset="0.4423" stop-color="#362f0a"/><stop offset="0.4808" stop-color="#38300a"/><stop offset="0.7885" stop-color="#8e7b19"/><stop offset="0.9423" stop-color="#cbaf24"/><stop offset="0.9808" stop-color="#dcbe27" stop-opacity="0.19"/></linearGradient><linearGradient id="g60" gradientUnits="userSpaceOnUse" x1="401" x2="426" y1="0" y2="0"><stop offset="0.0200" stop-color="#9d881c" stop-opacity="0.50"/><stop offset="0.0600" stop-color="#97831b"/><stop offset="0.4600" stop-color="#37300a"/><stop offset="0.5000" stop-color="#372f0a"/><stop offset="0.8200" stop-color="#8f7c19"/><stop offset="0.9800" stop-color="#ceb224"/></linearGradient><linearGradient id="g61" gradientUnits="userSpaceOnUse" x1="401" x2="426" y1="0" y2="0"><stop offset="0.0200" stop-color="#9f891c" stop-opacity="0.31"/><stop offset="0.0600" stop-color="#9a851b"/><stop offset="0.4600" stop-color="#38310a"/><stop offset="0.5000" stop-color="#362f0a"/><stop offset="0.7800" stop-color="#847217"/><stop offset="0.9400" stop-color="#bda321"/><stop offset="0.9800" stop-color="#cfb325" stop-opacity="0.81"/></linearGradient><linearGradient id="g62" gradientUnits="userSpaceOnUse" x1="401" x2="426" y1="0" y2="0"><stop offset="0.0200" stop-color="#a08a1c" stop-opacity="0.19"/><stop offset="0.0600" stop-color="#9c871c"/><stop offset="0.4600" stop-color="#39310a"/><stop offset="0.5000" stop-color="#362e09"/><stop offset="0.7800" stop-color="#847217"/><stop offset="0.9400" stop-color="#bfa522"/><stop offset="0.9800" stop-color="#d1b525" stop-opacity="0.69"/></linearGradient><linearGradient id="g63" gradientUnits="userSpaceOnUse" x1="402" x2="426" y1="0" y2="0"><stop offset="0.0208" stop-color="#9f891c"/><stop offset="0.4792" stop-color="#352e09"/><stop offset="0.7708" stop-color="#857317"/><stop offset="0.9375" stop-color="#c1a622"/><stop offset="0.9792" stop-color="#d2b525" stop-opacity="0.50"/></linearGradient><linearGradient id="g64" gradientUnits="userSpaceOnUse" x1="402" x2="426" y1="0" y2="0"><stop offset="0.0208" stop-color="#a08a1c" stop-opacity="0.75"/><stop offset="0.0625" stop-color="#98831b"/><stop offset="0.4792" stop-color="#352e09"/><stop offset="0.7708" stop-color="#857318"/><stop offset="0.9375" stop-color="#c3a822"/><stop offset="0.9792" stop-color="#d2b625" stop-opacity="0.25"/></linearGradient><linearGradient id="g65" gradientUnits="userSpaceOnUse" x1="402" x2="426" y1="0" y2="0"><stop offset="0.0208" stop-color="#a28c1d" stop-opacity="0.56"/><stop offset="0.0625" stop-color="#9b861b"/><stop offset="0.4792" stop-color="#352e09"/><stop offset="0.7708" stop-color="#867318"/><stop offset="0.9375" stop-color="#c6ab23"/><stop offset="0.9792" stop-color="#d8bb26" stop-opacity="0.06"/></linearGradient><linearGradient id="g66" gradientUnits="userSpaceOnUse" x1="402" x2="425" y1="0" y2="0"><stop offset="0.0217" stop-color="#a48d1d" stop-opacity="0.31"/><stop offset="0.0652" stop-color="#9e881c"/><stop offset="0.5000" stop-color="#352e09"/><stop offset="0.7174" stop-color="#6c5d13"/><stop offset="0.9348" stop-color="#b49c20"/><stop offset="0.9783" stop-color="#c8ac23" stop-opacity="0.81"/></linearGradient><linearGradient id="g67" gradientUnits="userSpaceOnUse" x1="402" x2="425" y1="0" y2="0"><stop offset="0.0217" stop-color="#a68f1d" stop-opacity="0.06"/><stop offset="0.0652" stop-color="#a18b1c"/><stop offset="0.5000" stop-color="#352e09"/><stop offset="0.7174" stop-color="#6c5d13"/><stop offset="0.9348" stop-color="#b79e20"/><stop offset="0.9783" stop-color="#c9ae24" stop-opacity="0.56"/></linearGradient><linearGradient id="g68" gradientUnits="userSpaceOnUse" x1="403" x2="425" y1="0" y2="0"><stop offset="0.0227" stop-color="#a38d1d" stop-opacity="0.81"/><stop offset="0.0682" stop-color="#9a851b"/><stop offset="0.4773" stop-color="#362f0a"/><stop offset="0.5227" stop-color="#3a320a"/><stop offset="0.7045" stop-color="#6c5d13"/><stop offset="0.9318" stop-color="#baa121"/><stop offset="0.9773" stop-color="#cdb124" stop-opacity="0.31"/></linearGradient><linearGradient id="g69" gradientUnits="userSpaceOnUse" x1="403" x2="425" y1="0" y2="0"><stop offset="0.0227" stop-color="#a68f1d" stop-opacity="0.56"/><stop offset="0.0682" stop-color="#9d881c"/><stop offset="0.4773" stop-color="#372f0a"/><stop offset="0.5227" stop-color="#39320a"/><stop offset="0.7045" stop-color="#6c5d13"/><stop offset="0.8409" stop-color="#98831b"/><stop offset="0.9318" stop-color="#bfa522"/><stop offset="0.9773" stop-color="#d4b725" stop-opacity="0.06"/></linearGradient><linearGradient id="g70" gradientUnits="userSpaceOnUse" x1="403" x2="424" y1="0" y2="0"><stop offset="0.0238" stop-color="#a9921e" stop-opacity="0.31"/><stop offset="0.0714" stop-color="#a18b1d"/><stop offset="0.5000" stop-color="#38300a"/><stop offset="0.5476" stop-color="#38310a"/><stop offset="0.7857" stop-color="#7a6a16"/><stop offset="0.9286" stop-color="#ad951e"/><stop offset="0.9762" stop-color="#c3a822" stop-opacity="0.81"/></linearGradient><linearGradient id="g71" gradientUnits="userSpaceOnUse" x1="403" x2="424" y1="0" y2="0"><stop offset="0.0238" stop-color="#aa931e" stop-opacity="0.06"/><stop offset="0.0714" stop-color="#a58f1d"/><stop offset="0.5000" stop-color="#39310a"/><stop offset="0.5476" stop-color="#38300a"/><stop offset="0.7857" stop-color="#7b6b16"/><stop offset="0.9286" stop-color="#b0981f"/><stop offset="0.9762" stop-color="#c5aa23" stop-opacity="0.56"/></linearGradient><linearGradient id="g72" gradientUnits="userSpaceOnUse" x1="404" x2="424" y1="0" y2="0"><stop offset="0.0250" stop-color="#a9921e" stop-opacity="0.94"/><stop offset="0.0750" stop-color="#9d881c"/><stop offset="0.4750" stop-color="#3a320a"/><stop offset="0.5250" stop-color="#372f0a"/><stop offset="0.7750" stop-color="#7d6c16"/><stop offset="0.9250" stop-color="#b49c20"/><stop offset="0.9750" stop-color="#caae24" stop-opacity="0.44"/></linearGradient><linearGradient id="g73" gradientUnits="userSpaceOnUse" x1="404" x2="424" y1="0" y2="0"><stop offset="0.0250" stop-color="#ab941e" stop-opacity="0.75"/><stop offset="0.0750" stop-color="#a18b1c"/><stop offset="0.4750" stop-color="#3b330a"/><stop offset="0.5250" stop-color="#362f0a"/><stop offset="0.7750" stop-color="#7e6d16"/><stop offset="0.9250" stop-color="#b89f21"/><stop offset="0.9750" stop-color="#caaf24" stop-opacity="0.25"/></linearGradient><linearGradient id="g74" gradientUnits="userSpaceOnUse" x1="404" x2="424" y1="0" y2="0"><stop offset="0.0250" stop-color="#ad961f" stop-opacity="0.75"/><stop offset="0.0750" stop-color="#a48e1d"/><stop offset="0.4750" stop-color="#3d340b"/><stop offset="0.5250" stop-color="#362f0a"/><stop offset="0.7750" stop-color="#7f6e17"/><stop offset="0.9250" stop-color="#bba121"/><stop offset="0.9750" stop-color="#ceb224" stop-opacity="0.25"/></linearGradient><linearGradient id="g75" gradientUnits="userSpaceOnUse" x1="404" x2="424" y1="0" y2="0"><stop offset="0.0250" stop-color="#af971f" stop-opacity="0.75"/><stop offset="0.0750" stop-color="#a7901e"/><stop offset="0.5250" stop-color="#362f0a"/><stop offset="0.7750" stop-color="#806f17"/><stop offset="0.9250" stop-color="#bda321"/><stop offset="0.9750" stop-color="#d0b325" stop-opacity="0.25"/></linearGradient><linearGradient id="g76" gradientUnits="userSpaceOnUse" x1="404" x2="424" y1="0" y2="0"><stop offset="0.0250" stop-color="#b0981f" stop-opacity="0.75"/><stop offset="0.0750" stop-color="#a9921e"/><stop offset="0.5250" stop-color="#362e09"/><stop offset="0.7250" stop-color="#706114"/><stop offset="0.9250" stop-color="#bda321"/><stop offset="0.9750" stop-color="#d0b425" stop-opacity="0.25"/></linearGradient><linearGradient id="g77" gradientUnits="userSpaceOnUse" x1="404" x2="424" y1="0" y2="0"><stop offset="0.0250" stop-color="#b2991f" stop-opacity="0.75"/><stop offset="0.0750" stop-color="#ab941e"/><stop offset="0.5250" stop-color="#362e0a"/><stop offset="0.7250" stop-color="#706114"/><stop offset="0.9250" stop-color="#bda321"/><stop offset="0.9750" stop-color="#cfb325" stop-opacity="0.25"/></linearGradient><linearGradient id="g78" gradientUnits="userSpaceOnUse" x1="404" x2="424" y1="0" y2="0"><stop offset="0.0250" stop-color="#b39b20" stop-opacity="0.75"/><stop offset="0.0750" stop-color="#ad951e"/><stop offset="0.5250" stop-color="#362f0a"/><stop offset="0.7250" stop-color="#706014"/><stop offset="0.9250" stop-color="#bca221"/><stop offset="0.9750" stop-color="#cdb124" stop-opacity="0.25"/></linearGradient><linearGradient id="g79" gradientUnits="userSpaceOnUse" x1="404" x2="424" y1="0" y2="0"><stop offset="0.0250" stop-color="#b59c20" stop-opacity="0.75"/><stop offset="0.0750" stop-color="#ae961f"/><stop offset="0.5250" stop-color="#372f0a"/><stop offset="0.5750" stop-color="#3f360b"/><stop offset="0.6750" stop-color="#5e5111"/><stop offset="0.9250" stop-color="#baa121"/><stop offset="0.9750" stop-color="#ccb024" stop-opacity="0.25"/></linearGradient><linearGradient id="g80" gradientUnits="userSpaceOnUse" x1="404" x2="424" y1="0" y2="0"><stop offset="0.0250" stop-color="#b69d20" stop-opacity="0.75"/><stop offset="0.0750" stop-color="#af971f"/><stop offset="0.5250" stop-color="#372f0a"/><stop offset="0.5750" stop-color="#3d350b"/><stop offset="0.6750" stop-color="#5d5110"/><stop offset="0.9250" stop-color="#b9a021"/><stop offset="0.9750" stop-color="#caae24" stop-opacity="0.25"/></linearGradient><linearGradient id="g81" gradientUnits="userSpaceOnUse" x1="404" x2="424" y1="0" y2="0"><stop offset="0.0250" stop-color="#b79e20" stop-opacity="0.75"/><stop offset="0.0750" stop-color="#b0981f"/><stop offset="0.5250" stop-color="#37300a"/><stop offset="0.5750" stop-color="#3c340b"/><stop offset="0.6250" stop-color="#4c420d"/><stop offset="0.9250" stop-color="#b89f20"/><stop offset="0.9750" stop-color="#c9ae24" stop-opacity="0.25"/></linearGradient><linearGradient id="g82" gradientUnits="userSpaceOnUse" x1="404" x2="424" y1="0" y2="0"><stop offset="0.0250" stop-color="#b89f21" stop-opacity="0.69"/><stop offset="0.0750" stop-color="#b29a1f"/><stop offset="0.5250" stop-color="#38310a"/><stop offset="0.5750" stop-color="#3b330a"/><stop offset="0.6250" stop-color="#4b410d"/><stop offset="0.9250" stop-color="#b69e20"/><stop offset="0.9750" stop-color="#c9ae24" stop-opacity="0.19"/></linearGradient><linearGradient id="g83" gradientUnits="userSpaceOnUse" x1="404" x2="423" y1="0" y2="0"><stop offset="0.0263" stop-color="#baa121" stop-opacity="0.50"/><stop offset="0.0789" stop-color="#b39b20"/><stop offset="0.5526" stop-color="#3a320a"/><stop offset="0.6053" stop-color="#3a320a"/><stop offset="0.6579" stop-color="#493f0d"/><stop offset="0.9737" stop-color="#b69d20"/></linearGradient><linearGradient id="g84" gradientUnits="userSpaceOnUse" x1="404" x2="423" y1="0" y2="0"><stop offset="0.0263" stop-color="#bca221" stop-opacity="0.50"/><stop offset="0.0789" stop-color="#b59c20"/><stop offset="0.5526" stop-color="#3b330a"/><stop offset="0.6053" stop-color="#39310a"/><stop offset="0.8158" stop-color="#7a6916"/><stop offset="0.9737" stop-color="#b59c20"/></linearGradient><linearGradient id="g85" gradientUnits="userSpaceOnUse" x1="404" x2="423" y1="0" y2="0"><stop offset="0.0263" stop-color="#bda321" stop-opacity="0.50"/><stop offset="0.0789" stop-color="#b79e20"/><stop offset="0.5526" stop-color="#3c340b"/><stop offset="0.6053" stop-color="#38300a"/><stop offset="0.8158" stop-color="#796815"/><stop offset="0.9737" stop-color="#b59c20"/></linearGradient><linearGradient id="g86" gradientUnits="userSpaceOnUse" x1="404" x2="423" y1="0" y2="0"><stop offset="0.0263" stop-color="#bfa522" stop-opacity="0.44"/><stop offset="0.0789" stop-color="#b99f21"/><stop offset="0.5526" stop-color="#3d350b"/><stop offset="0.6053" stop-color="#372f0a"/><stop offset="0.8158" stop-color="#786715"/><stop offset="0.9211" stop-color="#9d881c"/><stop offset="0.9737" stop-color="#b49c20" stop-opacity="0.94"/></linearGradient><linearGradient id="g87" gradientUnits="userSpaceOnUse" x1="404" x2="423" y1="0" y2="0"><stop offset="0.0263" stop-color="#c0a622" stop-opacity="0.25"/><stop offset="0.0789" stop-color="#bba121"/><stop offset="0.5526" stop-color="#3f360b"/><stop offset="0.6053" stop-color="#372f0a"/><stop offset="0.9211" stop-color="#9d881c"/><stop offset="0.9737" stop-color="#b2991f" stop-opacity="0.75"/></linearGradient><linearGradient id="g88" gradientUnits="userSpaceOnUse" x1="404" x2="423" y1="0" y2="0"><stop offset="0.0263" stop-color="#c2a822" stop-opacity="0.25"/><stop offset="0.0789" stop-color="#bda321"/><stop offset="0.6053" stop-color="#362f0a"/><stop offset="0.7632" stop-color="#645712"/><stop offset="0.9211" stop-color="#9d871c"/><stop offset="0.9737" stop-color="#b39a20" stop-opacity="0.75"/></linearGradient><linearGradient id="g89" gradientUnits="userSpaceOnUse" x1="404" x2="423" y1="0" y2="0"><stop offset="0.0263" stop-color="#c3a923" stop-opacity="0.12"/><stop offset="0.0789" stop-color="#bfa522"/><stop offset="0.6053" stop-color="#362f0a"/><stop offset="0.7632" stop-color="#645612"/><stop offset="0.9211" stop-color="#9d881c"/><stop offset="0.9737" stop-color="#b29a1f" stop-opacity="0.62"/></linearGradient><linearGradient id="g90" gradientUnits="userSpaceOnUse" x1="405" x2="423" y1="0" y2="0"><stop offset="0.0278" stop-color="#c1a722"/><stop offset="0.5833" stop-color="#362f0a"/><stop offset="0.6944" stop-color="#51460e"/><stop offset="0.9167" stop-color="#9d881c"/><stop offset="0.9722" stop-color="#b1991f" stop-opacity="0.50"/></linearGradient><linearGradient id="g91" gradientUnits="userSpaceOnUse" x1="405" x2="423" y1="0" y2="0"><stop offset="0.0278" stop-color="#c4a923"/><stop offset="0.5833" stop-color="#372f0a"/><stop offset="0.6944" stop-color="#51460e"/><stop offset="0.9167" stop-color="#9e881c"/><stop offset="0.9722" stop-color="#b39a20" stop-opacity="0.50"/></linearGradient><linearGradient id="g92" gradientUnits="userSpaceOnUse" x1="405" x2="423" y1="0" y2="0"><stop offset="0.0278" stop-color="#c5aa23" stop-opacity="0.81"/><stop offset="0.0833" stop-color="#bba121"/><stop offset="0.5833" stop-color="#37300a"/><stop offset="0.6944" stop-color="#50450e"/><stop offset="0.9167" stop-color="#9e891c"/><stop offset="0.9722" stop-color="#b1991f" stop-opacity="0.31"/></linearGradient><linearGradient id="g93" gradientUnits="userSpaceOnUse" x1="405" x2="423" y1="0" y2="0"><stop offset="0.0278" stop-color="#c8ac23" stop-opacity="0.75"/><stop offset="0.0833" stop-color="#bda421"/><stop offset="0.5833" stop-color="#38300a"/><stop offset="0.6389" stop-color="#3e350b"/><stop offset="0.9167" stop-color="#9f891c"/><stop offset="0.9722" stop-color="#b0981f" stop-opacity="0.25"/></linearGradient><linearGradient id="g94" gradientUnits="userSpaceOnUse" x1="405" x2="423" y1="0" y2="0"><stop offset="0.0278" stop-color="#caae24" stop-opacity="0.75"/><stop offset="0.0833" stop-color="#c0a622"/><stop offset="0.5833" stop-color="#38310a"/><stop offset="0.6389" stop-color="#3d340b"/><stop offset="0.9167" stop-color="#9f891c"/><stop offset="0.9722" stop-color="#b1981f" stop-opacity="0.25"/></linearGradient><linearGradient id="g95" gradientUnits="userSpaceOnUse" x1="405" x2="423" y1="0" y2="0"><stop offset="0.0278" stop-color="#cbb024" stop-opacity="0.75"/><stop offset="0.0833" stop-color="#c2a822"/><stop offset="0.5833" stop-color="#3a320a"/><stop offset="0.6389" stop-color="#3c330b"/><stop offset="0.9167" stop-color="#9e891c"/><stop offset="0.9722" stop-color="#b0981f" stop-opacity="0.25"/></linearGradient><linearGradient id="g96" gradientUnits="userSpaceOnUse" x1="405" x2="423" y1="0" y2="0"><stop offset="0.0278" stop-color="#cdb124" stop-opacity="0.88"/><stop offset="0.0833" stop-color="#c4a923"/><stop offset="0.5833" stop-color="#3b330a"/><stop offset="0.6389" stop-color="#3a320a"/><stop offset="0.9167" stop-color="#9d881c"/><stop offset="0.9722" stop-color="#b0981f" stop-opacity="0.38"/></linearGradient><linearGradient id="g97" gradientUnits="userSpaceOnUse" x1="405" x2="423" y1="0" y2="0"><stop offset="0.0278" stop-color="#cfb325"/><stop offset="0.1944" stop-color="#ab941e"/><stop offset="0.5833" stop-color="#3c340b"/><stop offset="0.6389" stop-color="#39320a"/><stop offset="0.9167" stop-color="#9b861b"/><stop offset="0.9722" stop-color="#ae961f" stop-opacity="0.50"/></linearGradient><linearGradient id="g98" gradientUnits="userSpaceOnUse" x1="404" x2="423" y1="0" y2="0"><stop offset="0.0263" stop-color="#d0b425" stop-opacity="0.06"/><stop offset="0.0789" stop-color="#d0b425"/><stop offset="0.2895" stop-color="#9e891c"/><stop offset="0.6053" stop-color="#3d350b"/><stop offset="0.6579" stop-color="#39310a"/><stop offset="0.9211" stop-color="#99841b"/><stop offset="0.9737" stop-color="#ab931e" stop-opacity="0.56"/></linearGradient><linearGradient id="g99" gradientUnits="userSpaceOnUse" x1="404" x2="423" y1="0" y2="0"><stop offset="0.0263" stop-color="#d3b625" stop-opacity="0.25"/><stop offset="0.0789" stop-color="#d1b525"/><stop offset="0.2895" stop-color="#a08a1c"/><stop offset="0.6053" stop-color="#3f360b"/><stop offset="0.6579" stop-color="#38300a"/><stop offset="0.9211" stop-color="#95811a"/><stop offset="0.9737" stop-color="#a8911e" stop-opacity="0.75"/></linearGradient><linearGradient id="g100" gradientUnits="userSpaceOnUse" x1="404" x2="423" y1="0" y2="0"><stop offset="0.0263" stop-color="#d5b826" stop-opacity="0.44"/><stop offset="0.0789" stop-color="#d2b625"/><stop offset="0.2368" stop-color="#af971f"/><stop offset="0.6053" stop-color="#41380b"/><stop offset="0.6579" stop-color="#372f0a"/><stop offset="0.9211" stop-color="#927e1a"/><stop offset="0.9737" stop-color="#a58f1d" stop-opacity="0.94"/></linearGradient><linearGradient id="g101" gradientUnits="userSpaceOnUse" x1="404" x2="424" y1="0" y2="0"><stop offset="0.0250" stop-color="#d7b926" stop-opacity="0.62"/><stop offset="0.0750" stop-color="#d3b625"/><stop offset="0.2750" stop-color="#a28c1d"/><stop offset="0.6250" stop-color="#362f0a"/><stop offset="0.9250" stop-color="#a18b1c"/><stop offset="0.9750" stop-color="#ac941e" stop-opacity="0.12"/></linearGradient><linearGradient id="g102" gradientUnits="userSpaceOnUse" x1="404" x2="424" y1="0" y2="0"><stop offset="0.0250" stop-color="#d9bb26" stop-opacity="0.81"/><stop offset="0.0750" stop-color="#d4b725"/><stop offset="0.2750" stop-color="#a38d1d"/><stop offset="0.6250" stop-color="#372f0a"/><stop offset="0.6750" stop-color="#42390c"/><stop offset="0.9250" stop-color="#9c861b"/><stop offset="0.9750" stop-color="#a8911e" stop-opacity="0.31"/></linearGradient><linearGradient id="g103" gradientUnits="userSpaceOnUse" x1="404" x2="424" y1="0" y2="0"><stop offset="0.0250" stop-color="#dabc27"/><stop offset="0.2250" stop-color="#b2991f"/><stop offset="0.6250" stop-color="#37300a"/><stop offset="0.6750" stop-color="#3f360b"/><stop offset="0.9250" stop-color="#96821b"/><stop offset="0.9750" stop-color="#a48d1d" stop-opacity="0.50"/></linearGradient><linearGradient id="g104" gradientUnits="userSpaceOnUse" x1="403" x2="424" y1="0" y2="0"><stop offset="0.0238" stop-color="#dbbd27" stop-opacity="0.25"/><stop offset="0.0714" stop-color="#dcbe27"/><stop offset="0.3095" stop-color="#a58e1d"/><stop offset="0.6429" stop-color="#38310a"/><stop offset="0.6905" stop-color="#3c340b"/><stop offset="0.9286" stop-color="#917d1a"/><stop offset="0.9762" stop-color="#a08a1c" stop-opacity="0.75"/></linearGradient><linearGradient id="g105" gradientUnits="userSpaceOnUse" x1="403" x2="424" y1="0" y2="0"><stop offset="0.0238" stop-color="#dec027" stop-opacity="0.44"/><stop offset="0.0714" stop-color="#ddbf27"/><stop offset="0.3095" stop-color="#a58f1d"/><stop offset="0.6429" stop-color="#3b330a"/><stop offset="0.6905" stop-color="#3a320a"/><stop offset="0.9286" stop-color="#8c7919"/><stop offset="0.9762" stop-color="#9c871c" stop-opacity="0.94"/></linearGradient><linearGradient id="g106" gradientUnits="userSpaceOnUse" x1="403" x2="425" y1="0" y2="0"><stop offset="0.0227" stop-color="#e1c228" stop-opacity="0.62"/><stop offset="0.0682" stop-color="#dec027"/><stop offset="0.2500" stop-color="#b39b20"/><stop offset="0.6136" stop-color="#3d350b"/><stop offset="0.6591" stop-color="#38300a"/><stop offset="0.9318" stop-color="#97831b"/><stop offset="0.9773" stop-color="#a08a1c" stop-opacity="0.12"/></linearGradient><linearGradient id="g107" gradientUnits="userSpaceOnUse" x1="403" x2="425" y1="0" y2="0"><stop offset="0.0227" stop-color="#e3c428" stop-opacity="0.81"/><stop offset="0.0682" stop-color="#dfc027"/><stop offset="0.2500" stop-color="#b49b20"/><stop offset="0.6591" stop-color="#362f0a"/><stop offset="0.9318" stop-color="#927e1a"/><stop offset="0.9773" stop-color="#9b861b" stop-opacity="0.31"/></linearGradient><linearGradient id="g108" gradientUnits="userSpaceOnUse" x1="402" x2="425" y1="0" y2="0"><stop offset="0.0217" stop-color="#e3c428" stop-opacity="0.06"/><stop offset="0.0652" stop-color="#e5c528"/><stop offset="0.1522" stop-color="#d7b926"/><stop offset="0.2826" stop-color="#b59c20"/><stop offset="0.6739" stop-color="#362f0a"/><stop offset="0.9348" stop-color="#8c7919"/><stop offset="0.9783" stop-color="#97831b" stop-opacity="0.56"/></linearGradient><linearGradient id="g109" gradientUnits="userSpaceOnUse" x1="402" x2="425" y1="0" y2="0"><stop offset="0.0217" stop-color="#e6c729" stop-opacity="0.31"/><stop offset="0.0652" stop-color="#e6c729"/><stop offset="0.2826" stop-color="#b59c20"/><stop offset="0.6739" stop-color="#37300a"/><stop offset="0.7174" stop-color="#3c340b"/><stop offset="0.9348" stop-color="#877518"/><stop offset="0.9783" stop-color="#937f1a" stop-opacity="0.81"/></linearGradient><linearGradient id="g110" gradientUnits="userSpaceOnUse" x1="402" x2="426" y1="0" y2="0"><stop offset="0.0208" stop-color="#e9c929" stop-opacity="0.56"/><stop offset="0.0625" stop-color="#e8c829"/><stop offset="0.2708" stop-color="#b69d20"/><stop offset="0.6458" stop-color="#39320a"/><stop offset="0.6875" stop-color="#39320a"/><stop offset="0.9375" stop-color="#8f7b19"/><stop offset="0.9792" stop-color="#937f1a" stop-opacity="0.06"/></linearGradient><linearGradient id="g111" gradientUnits="userSpaceOnUse" x1="402" x2="426" y1="0" y2="0"><stop offset="0.0208" stop-color="#eccb2a" stop-opacity="0.81"/><stop offset="0.0625" stop-color="#e9c929"/><stop offset="0.2708" stop-color="#b79e20"/><stop offset="0.6458" stop-color="#3d340b"/><stop offset="0.6875" stop-color="#372f0a"/><stop offset="0.9375" stop-color="#897718"/><stop offset="0.9792" stop-color="#907d19" stop-opacity="0.31"/></linearGradient><linearGradient id="g112" gradientUnits="userSpaceOnUse" x1="401" x2="426" y1="0" y2="0"><stop offset="0.0200" stop-color="#edcc2a" stop-opacity="0.12"/><stop offset="0.0600" stop-color="#eecd2a"/><stop offset="0.2600" stop-color="#c3a923"/><stop offset="0.7000" stop-color="#362e09"/><stop offset="0.9400" stop-color="#847217"/><stop offset="0.9800" stop-color="#8c7919" stop-opacity="0.62"/></linearGradient><linearGradient id="g113" gradientUnits="userSpaceOnUse" x1="401" x2="427" y1="0" y2="0"><stop offset="0.0192" stop-color="#efce2a" stop-opacity="0.56"/><stop offset="0.0577" stop-color="#f0cf2a"/><stop offset="0.1346" stop-color="#e2c428"/><stop offset="0.2885" stop-color="#b99f21"/><stop offset="0.6731" stop-color="#372f0a"/><stop offset="0.7115" stop-color="#3c340b"/><stop offset="0.9423" stop-color="#887518"/><stop offset="0.9808" stop-color="#897618" stop-opacity="0.06"/></linearGradient><linearGradient id="g114" gradientUnits="userSpaceOnUse" x1="400" x2="427" y1="0" y2="0"><stop offset="0.0185" stop-color="#eccc2a" stop-opacity="0.12"/><stop offset="0.0556" stop-color="#f2d12b" stop-opacity="0.94"/><stop offset="0.0926" stop-color="#f1d02b"/><stop offset="0.3148" stop-color="#baa021"/><stop offset="0.6852" stop-color="#39310a"/><stop offset="0.7222" stop-color="#39310a"/><stop offset="0.9444" stop-color="#837117"/><stop offset="0.9815" stop-color="#867418" stop-opacity="0.56"/></linearGradient><linearGradient id="g115" gradientUnits="userSpaceOnUse" x1="400" x2="428" y1="0" y2="0"><stop offset="0.0179" stop-color="#f1d02b" stop-opacity="0.75"/><stop offset="0.0536" stop-color="#f5d32b"/><stop offset="0.1250" stop-color="#ebcb2a"/><stop offset="0.2321" stop-color="#d0b425"/><stop offset="0.6607" stop-color="#3c340b"/><stop offset="0.6964" stop-color="#362f0a"/><stop offset="0.8750" stop-color="#736314"/><stop offset="0.9464" stop-color="#827117"/><stop offset="0.9821" stop-color="#7f6e16" stop-opacity="0.25"/></linearGradient><linearGradient id="g116" gradientUnits="userSpaceOnUse" x1="399" x2="429" y1="0" y2="0"><stop offset="0.0167" stop-color="#f0cf2a" stop-opacity="0.50"/><stop offset="0.0500" stop-color="#f6d42b"/><stop offset="0.1167" stop-color="#f2d12b"/><stop offset="0.2500" stop-color="#d1b425"/><stop offset="0.6833" stop-color="#362e09"/><stop offset="0.9167" stop-color="#7e6d16"/><stop offset="0.9500" stop-color="#7e6c16" stop-opacity="0.94"/><stop offset="0.9833" stop-color="#796815" stop-opacity="0.06"/></linearGradient><linearGradient id="g117" gradientUnits="userSpaceOnUse" x1="398" x2="429" y1="0" y2="0"><stop offset="0.0161" stop-color="#f1d02b" stop-opacity="0.25"/><stop offset="0.0484" stop-color="#f6d52c"/><stop offset="0.1129" stop-color="#f8d62c"/><stop offset="0.2419" stop-color="#dbbd27"/><stop offset="0.4032" stop-color="#a68f1d"/><stop offset="0.6935" stop-color="#37300a"/><stop offset="0.7258" stop-color="#39320a"/><stop offset="0.8548" stop-color="#675912"/><stop offset="0.9516" stop-color="#7b6b16"/><stop offset="0.9839" stop-color="#786715" stop-opacity="0.75"/></linearGradient><linearGradient id="g118" gradientUnits="userSpaceOnUse" x1="398" x2="430" y1="0" y2="0"><stop offset="0.0156" stop-color="#f7d62c" stop-opacity="0.88"/><stop offset="0.0469" stop-color="#fbd92c"/><stop offset="0.1094" stop-color="#f8d62c"/><stop offset="0.2031" stop-color="#e4c528"/><stop offset="0.3906" stop-color="#a7901e"/><stop offset="0.6719" stop-color="#3b330a"/><stop offset="0.7031" stop-color="#362f0a"/><stop offset="0.8594" stop-color="#6b5c13"/><stop offset="0.9531" stop-color="#776715"/><stop offset="0.9844" stop-color="#736314" stop-opacity="0.38"/></linearGradient><linearGradient id="g119" gradientUnits="userSpaceOnUse" x1="397" x2="431" y1="0" y2="0"><stop offset="0.0147" stop-color="#f9d72c" stop-opacity="0.50"/><stop offset="0.0441" stop-color="#fdda2d"/><stop offset="0.1324" stop-color="#f8d72c"/><stop offset="0.2500" stop-color="#dcbe27"/><stop offset="0.6912" stop-color="#362e09"/><stop offset="0.8382" stop-color="#645712"/><stop offset="0.9265" stop-color="#746414"/><stop offset="0.9559" stop-color="#726214" stop-opacity="0.94"/><stop offset="0.9853" stop-color="#6d5e13" stop-opacity="0.06"/></linearGradient><linearGradient id="g120" gradientUnits="userSpaceOnUse" x1="396" x2="431" y1="0" y2="0"><stop offset="0.0143" stop-color="#fcda2d" stop-opacity="0.06"/><stop offset="0.0429" stop-color="#fedc2d" stop-opacity="0.94"/><stop offset="0.0714" stop-color="#ffdd2d"/><stop offset="0.1571" stop-color="#f8d72c"/><stop offset="0.2714" stop-color="#dcbe27"/><stop offset="0.7000" stop-color="#38300a"/><stop offset="0.7286" stop-color="#38300a"/><stop offset="0.8714" stop-color="#665812"/><stop offset="0.9571" stop-color="#706114"/><stop offset="0.9857" stop-color="#6d5e13" stop-opacity="0.50"/></linearGradient><linearGradient id="g121" gradientUnits="userSpaceOnUse" x1="396" x2="431" y1="0" y2="0"><stop offset="0.0143" stop-color="#ffdd2d" stop-opacity="0.44"/><stop offset="0.0429" stop-color="#ffdf2e"/><stop offset="0.1286" stop-color="#fdda2d"/><stop offset="0.2714" stop-color="#dcbe27"/><stop offset="0.7286" stop-color="#352e09"/><stop offset="0.8714" stop-color="#5f5211"/><stop offset="0.9571" stop-color="#6c5d13"/><stop offset="0.9857" stop-color="#6b5c13" stop-opacity="0.94"/></linearGradient><linearGradient id="g122" gradientUnits="userSpaceOnUse" x1="396" x2="432" y1="0" y2="0"><stop offset="0.0139" stop-color="#ffe02e" stop-opacity="0.81"/><stop offset="0.0417" stop-color="#ffe12e"/><stop offset="0.1250" stop-color="#fdda2d"/><stop offset="0.2361" stop-color="#e4c528"/><stop offset="0.4028" stop-color="#ad951f"/><stop offset="0.7083" stop-color="#372f0a"/><stop offset="0.7361" stop-color="#38300a"/><stop offset="0.8750" stop-color="#5f5211"/><stop offset="0.9583" stop-color="#685a12"/><stop offset="0.9861" stop-color="#665812" stop-opacity="0.31"/></linearGradient><linearGradient id="g123" gradientUnits="userSpaceOnUse" x1="395" x2="432" y1="0" y2="0"><stop offset="0.0135" stop-color="#ffe22e" stop-opacity="0.06"/><stop offset="0.0405" stop-color="#ffe32e"/><stop offset="0.1486" stop-color="#fcda2d"/><stop offset="0.2568" stop-color="#e4c528"/><stop offset="0.7432" stop-color="#352e09"/><stop offset="0.8784" stop-color="#594d10"/><stop offset="0.9595" stop-color="#645712"/><stop offset="0.9865" stop-color="#645612" stop-opacity="0.56"/></linearGradient><linearGradient id="g124" gradientUnits="userSpaceOnUse" x1="395" x2="432" y1="0" y2="0"><stop offset="0.0135" stop-color="#ffe42f" stop-opacity="0.25"/><stop offset="0.0405" stop-color="#ffe42f"/><stop offset="0.1486" stop-color="#fcda2d"/><stop offset="0.2838" stop-color="#dcbe27"/><stop offset="0.7432" stop-color="#372f0a"/><stop offset="0.7703" stop-color="#372f0a"/><stop offset="0.9595" stop-color="#605311"/><stop offset="0.9865" stop-color="#605311" stop-opacity="0.75"/></linearGradient><linearGradient id="g125" gradientUnits="userSpaceOnUse" x1="394" x2="434" y1="0" y2="0"><stop offset="0.0125" stop-color="#e7c729" stop-opacity="0.19"/><stop offset="0.0375" stop-color="#f5da2d" stop-opacity="0.69"/><stop offset="0.0625" stop-color="#ffe62f"/><stop offset="0.1625" stop-color="#fbd92c"/><stop offset="0.2625" stop-color="#e3c428"/><stop offset="0.7375" stop-color="#352e09"/><stop offset="0.9125" stop-color="#5b4e10"/><stop offset="0.9375" stop-color="#5c5010" stop-opacity="0.94"/><stop offset="0.9625" stop-color="#96811a" stop-opacity="0.38"/><stop offset="0.9875" stop-color="#9d871c" stop-opacity="0.06"/></linearGradient><linearGradient id="g126" gradientUnits="userSpaceOnUse" x1="391" x2="437" y1="0" y2="0"><stop offset="0.0109" stop-color="#eece2a" stop-opacity="0.19"/><stop offset="0.0543" stop-color="#e8c829" stop-opacity="0.88"/><stop offset="0.0761" stop-color="#e4c528"/><stop offset="0.1196" stop-color="#ffe62f"/><stop offset="0.1848" stop-color="#ffdd2d"/><stop offset="0.2283" stop-color="#f6d42b"/><stop offset="0.3587" stop-color="#cbb024"/><stop offset="0.6630" stop-color="#493f0d"/><stop offset="0.7283" stop-color="#352e09"/><stop offset="0.8804" stop-color="#584c10"/><stop offset="0.9022" stop-color="#7e6d16"/><stop offset="0.9239" stop-color="#887618"/><stop offset="0.9891" stop-color="#9d871c" stop-opacity="0.06"/></linearGradient><linearGradient id="g127" gradientUnits="userSpaceOnUse" x1="388" x2="439" y1="0" y2="0"><stop offset="0.0098" stop-color="#f6d42b" stop-opacity="0.06"/><stop offset="0.0294" stop-color="#f2d12b" stop-opacity="0.38"/><stop offset="0.0490" stop-color="#f0cf2a" stop-opacity="0.81"/><stop offset="0.0686" stop-color="#edcc2a"/><stop offset="0.1078" stop-color="#e8c929"/><stop offset="0.1275" stop-color="#f0cf2a"/><stop offset="0.1471" stop-color="#fde12e"/><stop offset="0.1667" stop-color="#ffe72f"/><stop offset="0.2255" stop-color="#ffdd2d"/><stop offset="0.2647" stop-color="#f5d42b"/><stop offset="0.4020" stop-color="#c3a922"/><stop offset="0.7157" stop-color="#362f0a"/><stop offset="0.8529" stop-color="#54480f"/><stop offset="0.8725" stop-color="#40380b"/><stop offset="0.8922" stop-color="#685a12"/><stop offset="0.9118" stop-color="#796815"/><stop offset="0.9314" stop-color="#7f6d16"/><stop offset="0.9510" stop-color="#867418" stop-opacity="0.94"/><stop offset="0.9706" stop-color="#8c7919" stop-opacity="0.62"/><stop offset="0.9902" stop-color="#937f1a" stop-opacity="0.19"/></linearGradient><linearGradient id="g128" gradientUnits="userSpaceOnUse" x1="386" x2="441" y1="0" y2="0"><stop offset="0.0091" stop-color="#fad82c" stop-opacity="0.12"/><stop offset="0.0455" stop-color="#f5d32b" stop-opacity="0.94"/><stop offset="0.0636" stop-color="#f2d12b"/><stop offset="0.1182" stop-color="#f0cf2a"/><stop offset="0.1727" stop-color="#ffe930"/><stop offset="0.2636" stop-color="#fad82c"/><stop offset="0.3909" stop-color="#ccb024"/><stop offset="0.7182" stop-color="#352e09"/><stop offset="0.8273" stop-color="#4f440e"/><stop offset="0.8636" stop-color="#372f0a"/><stop offset="0.9000" stop-color="#6e5f13"/><stop offset="0.9545" stop-color="#816f17"/><stop offset="0.9727" stop-color="#887618" stop-opacity="0.75"/><stop offset="0.9909" stop-color="#907c19" stop-opacity="0.31"/></linearGradient><linearGradient id="g129" gradientUnits="userSpaceOnUse" x1="384" x2="443" y1="0" y2="0"><stop offset="0.0085" stop-color="#fedb2d" stop-opacity="0.06"/><stop offset="0.0254" stop-color="#fcda2d" stop-opacity="0.62"/><stop offset="0.0424" stop-color="#fad82c"/><stop offset="0.1102" stop-color="#f4d32b"/><stop offset="0.1441" stop-color="#fedf2e"/><stop offset="0.1949" stop-color="#ffec30"/><stop offset="0.2797" stop-color="#fad82c"/><stop offset="0.3983" stop-color="#ccb024"/><stop offset="0.6356" stop-color="#574b0f"/><stop offset="0.7203" stop-color="#352d09"/><stop offset="0.8051" stop-color="#4b410d"/><stop offset="0.8559" stop-color="#362e09"/><stop offset="0.8898" stop-color="#635612"/><stop offset="0.9576" stop-color="#7e6d16"/><stop offset="0.9746" stop-color="#887618" stop-opacity="0.88"/><stop offset="0.9915" stop-color="#907c19" stop-opacity="0.38"/></linearGradient><linearGradient id="g130" gradientUnits="userSpaceOnUse" x1="382" x2="445" y1="0" y2="0"><stop offset="0.0079" stop-color="#ffdf2e" stop-opacity="0.06"/><stop offset="0.0397" stop-color="#ffdc2d" stop-opacity="0.94"/><stop offset="0.0556" stop-color="#fdda2d"/><stop offset="0.1190" stop-color="#fad82c"/><stop offset="0.2143" stop-color="#ffee31"/><stop offset="0.2937" stop-color="#fad82c"/><stop offset="0.4206" stop-color="#c5aa23"/><stop offset="0.6587" stop-color="#4c420d"/><stop offset="0.7222" stop-color="#342d09"/><stop offset="0.7857" stop-color="#473d0c"/><stop offset="0.8492" stop-color="#352e09"/><stop offset="0.8651" stop-color="#433a0c"/><stop offset="0.8810" stop-color="#5b4f10"/><stop offset="0.9603" stop-color="#7e6c16"/><stop offset="0.9762" stop-color="#877418" stop-opacity="0.75"/><stop offset="0.9921" stop-color="#8f7c19" stop-opacity="0.25"/></linearGradient><linearGradient id="g131" gradientUnits="userSpaceOnUse" x1="381" x2="447" y1="0" y2="0"><stop offset="0.0076" stop-color="#ffe22e" stop-opacity="0.31"/><stop offset="0.0227" stop-color="#ffe02e" stop-opacity="0.88"/><stop offset="0.0379" stop-color="#ffdf2e"/><stop offset="0.1136" stop-color="#ffdd2d"/><stop offset="0.2197" stop-color="#ffef31"/><stop offset="0.2955" stop-color="#fad82c"/><stop offset="0.4167" stop-color="#c6ab23"/><stop offset="0.6439" stop-color="#51460e"/><stop offset="0.7197" stop-color="#352e09"/><stop offset="0.7803" stop-color="#433a0c"/><stop offset="0.8409" stop-color="#362e09"/><stop offset="0.8864" stop-color="#5f5211"/><stop offset="0.9621" stop-color="#806f17"/><stop offset="0.9773" stop-color="#897718" stop-opacity="0.62"/><stop offset="0.9924" stop-color="#907c19" stop-opacity="0.06"/></linearGradient><linearGradient id="g132" gradientUnits="userSpaceOnUse" x1="379" x2="448" y1="0" y2="0"><stop offset="0.0072" stop-color="#ffe52f" stop-opacity="0.06"/><stop offset="0.0217" stop-color="#ffe42f" stop-opacity="0.69"/><stop offset="0.0362" stop-color="#ffe32e"/><stop offset="0.1232" stop-color="#ffe22e"/><stop offset="0.2246" stop-color="#fff131"/><stop offset="0.3116" stop-color="#fbd92c"/><stop offset="0.7174" stop-color="#352e09"/><stop offset="0.7754" stop-color="#3f370b"/><stop offset="0.8333" stop-color="#332c09"/><stop offset="0.8478" stop-color="#38300a"/><stop offset="0.8913" stop-color="#5b4f10"/><stop offset="0.9638" stop-color="#796915"/><stop offset="0.9783" stop-color="#857317" stop-opacity="0.94"/><stop offset="0.9928" stop-color="#8c7919" stop-opacity="0.31"/></linearGradient><linearGradient id="g133" gradientUnits="userSpaceOnUse" x1="378" x2="450" y1="0" y2="0"><stop offset="0.0069" stop-color="#ffe72f" stop-opacity="0.31"/><stop offset="0.0208" stop-color="#ffe62f" stop-opacity="0.94"/><stop offset="0.0347" stop-color="#ffe52f"/><stop offset="0.1042" stop-color="#ffe42f"/><stop offset="0.2292" stop-color="#fff332"/><stop offset="0.3125" stop-color="#fcda2d"/><stop offset="0.7153" stop-color="#352d09"/><stop offset="0.7569" stop-color="#3b330a"/><stop offset="0.8264" stop-color="#352e09"/><stop offset="0.8819" stop-color="#594d10"/><stop offset="0.9375" stop-color="#6d5e13"/><stop offset="0.9653" stop-color="#7f6e17"/><stop offset="0.9792" stop-color="#8b7819" stop-opacity="0.69"/><stop offset="0.9931" stop-color="#927e1a" stop-opacity="0.06"/></linearGradient><linearGradient id="g134" gradientUnits="userSpaceOnUse" x1="377" x2="451" y1="0" y2="0"><stop offset="0.0068" stop-color="#ffe930" stop-opacity="0.50"/><stop offset="0.0203" stop-color="#ffe930"/><stop offset="0.2365" stop-color="#fff332"/><stop offset="0.3176" stop-color="#fddb2d"/><stop offset="0.6284" stop-color="#5d5010"/><stop offset="0.7230" stop-color="#342d09"/><stop offset="0.8176" stop-color="#342d09"/><stop offset="0.9662" stop-color="#7b6b16"/><stop offset="0.9797" stop-color="#877418" stop-opacity="0.81"/><stop offset="0.9932" stop-color="#907c19" stop-opacity="0.19"/></linearGradient><linearGradient id="g135" gradientUnits="userSpaceOnUse" x1="375" x2="452" y1="0" y2="0"><stop offset="0.0065" stop-color="#ffec30" stop-opacity="0.06"/><stop offset="0.0195" stop-color="#ffeb30" stop-opacity="0.69"/><stop offset="0.0325" stop-color="#ffeb30"/><stop offset="0.2403" stop-color="#fff532"/><stop offset="0.3312" stop-color="#fedc2d"/><stop offset="0.6429" stop-color="#5a4e10"/><stop offset="0.7338" stop-color="#342d09"/><stop offset="0.8247" stop-color="#38300a"/><stop offset="0.9675" stop-color="#796915"/><stop offset="0.9805" stop-color="#857318" stop-opacity="0.94"/><stop offset="0.9935" stop-color="#8f7b19" stop-opacity="0.31"/></linearGradient><linearGradient id="g136" gradientUnits="userSpaceOnUse" x1="374" x2="453" y1="0" y2="0"><stop offset="0.0063" stop-color="#ffee31" stop-opacity="0.06"/><stop offset="0.0190" stop-color="#ffed31" stop-opacity="0.81"/><stop offset="0.0316" stop-color="#ffed31"/><stop offset="0.2342" stop-color="#fff632"/><stop offset="0.2848" stop-color="#fff031"/><stop offset="0.3354" stop-color="#ffde2d"/><stop offset="0.6519" stop-color="#574b0f"/><stop offset="0.7405" stop-color="#362f0a"/><stop offset="0.8291" stop-color="#3c340b"/><stop offset="0.9430" stop-color="#695b13"/><stop offset="0.9810" stop-color="#847217"/><stop offset="0.9937" stop-color="#8d7a19" stop-opacity="0.38"/></linearGradient><linearGradient id="g137" gradientUnits="userSpaceOnUse" x1="373" x2="454" y1="0" y2="0"><stop offset="0.0062" stop-color="#fff031" stop-opacity="0.06"/><stop offset="0.0185" stop-color="#ffef31" stop-opacity="0.81"/><stop offset="0.0309" stop-color="#ffef31"/><stop offset="0.2407" stop-color="#fff732"/><stop offset="0.2901" stop-color="#fff031"/><stop offset="0.3519" stop-color="#fcda2d"/><stop offset="0.6481" stop-color="#5b4f10"/><stop offset="0.6975" stop-color="#453b0c"/><stop offset="0.7469" stop-color="#39310a"/><stop offset="0.8333" stop-color="#40370b"/><stop offset="0.9444" stop-color="#695b13"/><stop offset="0.9815" stop-color="#847217"/><stop offset="0.9938" stop-color="#8d7a19" stop-opacity="0.38"/></linearGradient><linearGradient id="g138" gradientUnits="userSpaceOnUse" x1="372" x2="455" y1="0" y2="0"><stop offset="0.0060" stop-color="#fff131" stop-opacity="0.06"/><stop offset="0.0181" stop-color="#fff131" stop-opacity="0.81"/><stop offset="0.0301" stop-color="#fff131"/><stop offset="0.2349" stop-color="#fff833"/><stop offset="0.2952" stop-color="#ffef31"/><stop offset="0.3554" stop-color="#fddb2d"/><stop offset="0.6446" stop-color="#5f5211"/><stop offset="0.7410" stop-color="#3d350b"/><stop offset="0.7892" stop-color="#3c330b"/><stop offset="0.8373" stop-color="#443b0c"/><stop offset="0.9337" stop-color="#645712"/><stop offset="0.9819" stop-color="#857318"/><stop offset="0.9940" stop-color="#8e7a19" stop-opacity="0.38"/></linearGradient><linearGradient id="g139" gradientUnits="userSpaceOnUse" x1="371" x2="456" y1="0" y2="0"><stop offset="0.0059" stop-color="#ffdd2d" stop-opacity="0.06"/><stop offset="0.0176" stop-color="#fff332" stop-opacity="0.81"/><stop offset="0.0294" stop-color="#fff332"/><stop offset="0.2412" stop-color="#fff833"/><stop offset="0.3000" stop-color="#ffef31"/><stop offset="0.3588" stop-color="#fedc2d"/><stop offset="0.6412" stop-color="#635511"/><stop offset="0.7000" stop-color="#4a400d"/><stop offset="0.7471" stop-color="#40380b"/><stop offset="0.8176" stop-color="#42390c"/><stop offset="0.9118" stop-color="#5d5010"/><stop offset="0.9588" stop-color="#726314"/><stop offset="0.9824" stop-color="#877518"/><stop offset="0.9941" stop-color="#806e17" stop-opacity="0.38"/></linearGradient><linearGradient id="g140" gradientUnits="userSpaceOnUse" x1="371" x2="457" y1="0" y2="0"><stop offset="0.0058" stop-color="#fef031" stop-opacity="0.75"/><stop offset="0.0174" stop-color="#fff532"/><stop offset="0.2267" stop-color="#fff933"/><stop offset="0.2965" stop-color="#ffef31"/><stop offset="0.3547" stop-color="#fedc2d"/><stop offset="0.6337" stop-color="#675912"/><stop offset="0.7384" stop-color="#453b0c"/><stop offset="0.8081" stop-color="#443b0c"/><stop offset="0.9128" stop-color="#5e5111"/><stop offset="0.9826" stop-color="#857318"/><stop offset="0.9942" stop-color="#7a6916" stop-opacity="0.25"/></linearGradient><linearGradient id="g141" gradientUnits="userSpaceOnUse" x1="370" x2="458" y1="0" y2="0"><stop offset="0.0057" stop-color="#fff031" stop-opacity="0.56"/><stop offset="0.0170" stop-color="#fff632"/><stop offset="0.2216" stop-color="#fffa33"/><stop offset="0.2898" stop-color="#fff031"/><stop offset="0.3580" stop-color="#fedc2d"/><stop offset="0.6307" stop-color="#6b5c13"/><stop offset="0.6875" stop-color="#54490f"/><stop offset="0.7443" stop-color="#483e0d"/><stop offset="0.8125" stop-color="#483e0d"/><stop offset="0.9034" stop-color="#5d5010"/><stop offset="0.9489" stop-color="#706014"/><stop offset="0.9716" stop-color="#817017"/><stop offset="0.9830" stop-color="#877518" stop-opacity="0.94"/><stop offset="0.9943" stop-color="#655712" stop-opacity="0.12"/></linearGradient><linearGradient id="g142" gradientUnits="userSpaceOnUse" x1="369" x2="458" y1="0" y2="0"><stop offset="0.0056" stop-color="#ffee31" stop-opacity="0.31"/><stop offset="0.0169" stop-color="#fff733"/><stop offset="0.2303" stop-color="#fffa33"/><stop offset="0.3652" stop-color="#fedc2d"/><stop offset="0.6348" stop-color="#6f6014"/><stop offset="0.7472" stop-color="#4c420d"/><stop offset="0.8146" stop-color="#4b400d"/><stop offset="0.9157" stop-color="#5f5211"/><stop offset="0.9494" stop-color="#6c5e13"/><stop offset="0.9831" stop-color="#867318"/><stop offset="0.9944" stop-color="#827017" stop-opacity="0.81"/></linearGradient><linearGradient id="g143" gradientUnits="userSpaceOnUse" x1="368" x2="459" y1="0" y2="0"><stop offset="0.0055" stop-color="#ffe02e" stop-opacity="0.06"/><stop offset="0.0165" stop-color="#fff432" stop-opacity="0.94"/><stop offset="0.0275" stop-color="#fff933"/><stop offset="0.2253" stop-color="#fffb33"/><stop offset="0.3022" stop-color="#ffef31"/><stop offset="0.3681" stop-color="#fedc2d"/><stop offset="0.6319" stop-color="#736314"/><stop offset="0.6978" stop-color="#5a4e10"/><stop offset="0.7527" stop-color="#4f440e"/><stop offset="0.8077" stop-color="#4d430e"/><stop offset="0.9066" stop-color="#5e5111"/><stop offset="0.9505" stop-color="#706114"/><stop offset="0.9835" stop-color="#8a7718"/><stop offset="0.9945" stop-color="#675912" stop-opacity="0.50"/></linearGradient><linearGradient id="g144" gradientUnits="userSpaceOnUse" x1="368" x2="460" y1="0" y2="0"><stop offset="0.0054" stop-color="#fff131" stop-opacity="0.62"/><stop offset="0.0163" stop-color="#fff933"/><stop offset="0.2120" stop-color="#fffb33"/><stop offset="0.2880" stop-color="#fff131"/><stop offset="0.3641" stop-color="#fedb2d"/><stop offset="0.6250" stop-color="#776715"/><stop offset="0.7446" stop-color="#53470f"/><stop offset="0.8098" stop-color="#51460e"/><stop offset="0.8967" stop-color="#5e5111"/><stop offset="0.9402" stop-color="#6e5f13"/><stop offset="0.9728" stop-color="#857318"/><stop offset="0.9837" stop-color="#837217"/><stop offset="0.9946" stop-color="#3c340b" stop-opacity="0.12"/></linearGradient><linearGradient id="g145" gradientUnits="userSpaceOnUse" x1="367" x2="460" y1="0" y2="0"><stop offset="0.0054" stop-color="#ffe62f" stop-opacity="0.25"/><stop offset="0.0161" stop-color="#fff833"/><stop offset="0.2097" stop-color="#fffc34"/><stop offset="0.2957" stop-color="#fff031"/><stop offset="0.3710" stop-color="#fedb2d"/><stop offset="0.6290" stop-color="#7b6a16"/><stop offset="0.7473" stop-color="#574b0f"/><stop offset="0.8118" stop-color="#54480f"/><stop offset="0.9086" stop-color="#615311"/><stop offset="0.9516" stop-color="#726214"/><stop offset="0.9839" stop-color="#8b7818"/><stop offset="0.9946" stop-color="#716214" stop-opacity="0.75"/></linearGradient><linearGradient id="g146" gradientUnits="userSpaceOnUse" x1="367" x2="461" y1="0" y2="0"><stop offset="0.0053" stop-color="#fff131" stop-opacity="0.75"/><stop offset="0.0160" stop-color="#fffb33"/><stop offset="0.2074" stop-color="#fffc34"/><stop offset="0.2926" stop-color="#ffef31"/><stop offset="0.3670" stop-color="#fdda2d"/><stop offset="0.6223" stop-color="#7f6d16"/><stop offset="0.7500" stop-color="#594d10"/><stop offset="0.8138" stop-color="#574b0f"/><stop offset="0.8989" stop-color="#615411"/><stop offset="0.9415" stop-color="#716114"/><stop offset="0.9734" stop-color="#877518"/><stop offset="0.9840" stop-color="#857317"/><stop offset="0.9947" stop-color="#443b0c" stop-opacity="0.25"/></linearGradient><linearGradient id="g147" gradientUnits="userSpaceOnUse" x1="366" x2="461" y1="0" y2="0"><stop offset="0.0053" stop-color="#fce32e" stop-opacity="0.19"/><stop offset="0.0158" stop-color="#fff933"/><stop offset="0.2053" stop-color="#fffd34"/><stop offset="0.3632" stop-color="#ffde2d"/><stop offset="0.6263" stop-color="#827117"/><stop offset="0.7421" stop-color="#5f5211"/><stop offset="0.8053" stop-color="#5a4d10"/><stop offset="0.9000" stop-color="#625411"/><stop offset="0.9421" stop-color="#706114"/><stop offset="0.9842" stop-color="#8d7a19"/><stop offset="0.9947" stop-color="#6f6014" stop-opacity="0.69"/></linearGradient><linearGradient id="g148" gradientUnits="userSpaceOnUse" x1="366" x2="462" y1="0" y2="0"><stop offset="0.0052" stop-color="#fff131" stop-opacity="0.62"/><stop offset="0.0156" stop-color="#fffd34"/><stop offset="0.2031" stop-color="#fffd34"/><stop offset="0.3594" stop-color="#ffdd2d"/><stop offset="0.6302" stop-color="#827017"/><stop offset="0.7448" stop-color="#615411"/><stop offset="0.8906" stop-color="#635511"/><stop offset="0.9323" stop-color="#706114"/><stop offset="0.9740" stop-color="#8b7819"/><stop offset="0.9844" stop-color="#766615"/><stop offset="0.9948" stop-color="#453c0c" stop-opacity="0.12"/></linearGradient><linearGradient id="g149" gradientUnits="userSpaceOnUse" x1="366" x2="462" y1="0" y2="0"><stop offset="0.0052" stop-color="#fff632" stop-opacity="0.94"/><stop offset="0.0260" stop-color="#ffff34"/><stop offset="0.1927" stop-color="#fffe34"/><stop offset="0.3594" stop-color="#ffdd2d"/><stop offset="0.6302" stop-color="#857318"/><stop offset="0.7656" stop-color="#625411"/><stop offset="0.8906" stop-color="#645712"/><stop offset="0.9427" stop-color="#756515"/><stop offset="0.9844" stop-color="#8f7c19"/><stop offset="0.9948" stop-color="#4d430e" stop-opacity="0.44"/></linearGradient><linearGradient id="g150" gradientUnits="userSpaceOnUse" x1="365" x2="462" y1="0" y2="0"><stop offset="0.0052" stop-color="#fee82f" stop-opacity="0.31"/><stop offset="0.0155" stop-color="#fffb33"/><stop offset="0.2113" stop-color="#fffd34"/><stop offset="0.3660" stop-color="#ffdc2d"/><stop offset="0.6134" stop-color="#917d1a"/><stop offset="0.7165" stop-color="#6e5f14"/><stop offset="0.7990" stop-color="#635511"/><stop offset="0.8918" stop-color="#665812"/><stop offset="0.9433" stop-color="#766615"/><stop offset="0.9845" stop-color="#8f7c19"/><stop offset="0.9948" stop-color="#635612" stop-opacity="0.81"/></linearGradient><linearGradient id="g151" gradientUnits="userSpaceOnUse" x1="365" x2="463" y1="0" y2="0"><stop offset="0.0051" stop-color="#ffef31" stop-opacity="0.56"/><stop offset="0.0153" stop-color="#fffe34"/><stop offset="0.2092" stop-color="#fffc34"/><stop offset="0.3622" stop-color="#fedc2d"/><stop offset="0.6071" stop-color="#94801a"/><stop offset="0.7092" stop-color="#726314"/><stop offset="0.7908" stop-color="#665812"/><stop offset="0.8827" stop-color="#685a12"/><stop offset="0.9337" stop-color="#776715"/><stop offset="0.9745" stop-color="#8f7b19"/><stop offset="0.9847" stop-color="#6d5e13"/><stop offset="0.9949" stop-color="#7a6a16" stop-opacity="0.06"/></linearGradient><linearGradient id="g152" gradientUnits="userSpaceOnUse" x1="365" x2="463" y1="0" y2="0"><stop offset="0.0051" stop-color="#fff532" stop-opacity="0.75"/><stop offset="0.0153" stop-color="#ffff34"/><stop offset="0.2092" stop-color="#fffc34"/><stop offset="0.3622" stop-color="#fedb2d"/><stop offset="0.6173" stop-color="#937f1a"/><stop offset="0.7194" stop-color="#736414"/><stop offset="0.7908" stop-color="#695b13"/><stop offset="0.8724" stop-color="#695a13"/><stop offset="0.9235" stop-color="#746415"/><stop offset="0.9745" stop-color="#8f7b19"/><stop offset="0.9847" stop-color="#7c6b16"/><stop offset="0.9949" stop-color="#3f370b" stop-opacity="0.25"/></linearGradient><linearGradient id="g153" gradientUnits="userSpaceOnUse" x1="365" x2="463" y1="0" y2="0"><stop offset="0.0051" stop-color="#fff332"/><stop offset="0.0153" stop-color="#ffff34"/><stop offset="0.1786" stop-color="#fffe34"/><stop offset="0.2704" stop-color="#fff232"/><stop offset="0.3622" stop-color="#fedb2d"/><stop offset="0.6378" stop-color="#8e7b19"/><stop offset="0.7704" stop-color="#6e5f14"/><stop offset="0.8724" stop-color="#6b5c13"/><stop offset="0.9235" stop-color="#766615"/><stop offset="0.9745" stop-color="#8f7c19"/><stop offset="0.9847" stop-color="#877418"/><stop offset="0.9949" stop-color="#564a0f" stop-opacity="0.50"/></linearGradient><linearGradient id="g154" gradientUnits="userSpaceOnUse" x1="365" x2="463" y1="0" y2="0"><stop offset="0.0051" stop-color="#fff933"/><stop offset="0.0153" stop-color="#ffff34"/><stop offset="0.1888" stop-color="#fffd34"/><stop offset="0.3622" stop-color="#fedb2d"/><stop offset="0.6378" stop-color="#917e1a"/><stop offset="0.7806" stop-color="#716114"/><stop offset="0.8827" stop-color="#6f6014"/><stop offset="0.9235" stop-color="#786715"/><stop offset="0.9847" stop-color="#927e1a"/><stop offset="0.9949" stop-color="#3b330a" stop-opacity="0.50"/></linearGradient><linearGradient id="g155" gradientUnits="userSpaceOnUse" x1="364" x2="463" y1="0" y2="0"><stop offset="0.0051" stop-color="#f9d82c" stop-opacity="0.19"/><stop offset="0.0152" stop-color="#fffa33"/><stop offset="0.1970" stop-color="#fffc34"/><stop offset="0.3687" stop-color="#fedb2d"/><stop offset="0.6414" stop-color="#94801a"/><stop offset="0.7828" stop-color="#746414"/><stop offset="0.8939" stop-color="#736314"/><stop offset="0.9848" stop-color="#937f1a"/><stop offset="0.9949" stop-color="#4b410d" stop-opacity="0.69"/></linearGradient><linearGradient id="g156" gradientUnits="userSpaceOnUse" x1="364" x2="463" y1="0" y2="0"><stop offset="0.0051" stop-color="#ffe12e" stop-opacity="0.25"/><stop offset="0.0152" stop-color="#fffa33"/><stop offset="0.1970" stop-color="#fffc34"/><stop offset="0.3687" stop-color="#fedb2d"/><stop offset="0.6515" stop-color="#94801a"/><stop offset="0.7929" stop-color="#766615"/><stop offset="0.8939" stop-color="#766615"/><stop offset="0.9848" stop-color="#94801a"/><stop offset="0.9949" stop-color="#4a400d" stop-opacity="0.75"/></linearGradient><linearGradient id="g157" gradientUnits="userSpaceOnUse" x1="364" x2="463" y1="0" y2="0"><stop offset="0.0051" stop-color="#fcdb2d" stop-opacity="0.25"/><stop offset="0.0152" stop-color="#fffa33"/><stop offset="0.1869" stop-color="#fffc34"/><stop offset="0.3687" stop-color="#fedb2d"/><stop offset="0.6515" stop-color="#97821b"/><stop offset="0.7929" stop-color="#796815"/><stop offset="0.8939" stop-color="#786815"/><stop offset="0.9848" stop-color="#95811a"/><stop offset="0.9949" stop-color="#4d430e" stop-opacity="0.75"/></linearGradient><linearGradient id="g158" gradientUnits="userSpaceOnUse" x1="364" x2="463" y1="0" y2="0"><stop offset="0.0051" stop-color="#e3c428" stop-opacity="0.12"/><stop offset="0.0152" stop-color="#fff833"/><stop offset="0.0253" stop-color="#ffff35"/><stop offset="0.1768" stop-color="#fffd34"/><stop offset="0.3687" stop-color="#fddb2d"/><stop offset="0.6414" stop-color="#9d871c"/><stop offset="0.7929" stop-color="#7c6b16"/><stop offset="0.8939" stop-color="#7b6a16"/><stop offset="0.9747" stop-color="#95811a"/><stop offset="0.9848" stop-color="#857317"/><stop offset="0.9949" stop-color="#473d0d" stop-opacity="0.56"/></linearGradient><linearGradient id="g159" gradientUnits="userSpaceOnUse" x1="365" x2="463" y1="0" y2="0"><stop offset="0.0051" stop-color="#fff532"/><stop offset="0.0153" stop-color="#ffff35"/><stop offset="0.1378" stop-color="#fffe34"/><stop offset="0.2500" stop-color="#fff332"/><stop offset="0.3622" stop-color="#fddb2d"/><stop offset="0.6480" stop-color="#9c871c"/><stop offset="0.8010" stop-color="#7d6c16"/><stop offset="0.8929" stop-color="#7e6d16"/><stop offset="0.9745" stop-color="#97821b"/><stop offset="0.9847" stop-color="#7a6916"/><stop offset="0.9949" stop-color="#473d0d" stop-opacity="0.50"/></linearGradient><linearGradient id="g160" gradientUnits="userSpaceOnUse" x1="365" x2="463" y1="0" y2="0"><stop offset="0.0051" stop-color="#fcee31" stop-opacity="0.88"/><stop offset="0.0153" stop-color="#ffff35"/><stop offset="0.1276" stop-color="#ffff34"/><stop offset="0.2398" stop-color="#fff332"/><stop offset="0.3520" stop-color="#ffdd2d"/><stop offset="0.6276" stop-color="#a58e1d"/><stop offset="0.7500" stop-color="#877518"/><stop offset="0.8724" stop-color="#7f6e16"/><stop offset="0.9745" stop-color="#98831b"/><stop offset="0.9847" stop-color="#6a5c13"/><stop offset="0.9949" stop-color="#564a0f" stop-opacity="0.38"/></linearGradient><linearGradient id="g161" gradientUnits="userSpaceOnUse" x1="365" x2="463" y1="0" y2="0"><stop offset="0.0051" stop-color="#fcec30" stop-opacity="0.69"/><stop offset="0.0153" stop-color="#fffd34"/><stop offset="0.1582" stop-color="#fffc34"/><stop offset="0.3520" stop-color="#ffdd2d"/><stop offset="0.6582" stop-color="#9f891c"/><stop offset="0.8112" stop-color="#827017"/><stop offset="0.8929" stop-color="#847217"/><stop offset="0.9745" stop-color="#99841b"/><stop offset="0.9847" stop-color="#53480f"/><stop offset="0.9949" stop-color="#756515" stop-opacity="0.19"/></linearGradient><linearGradient id="g162" gradientUnits="userSpaceOnUse" x1="365" x2="462" y1="0" y2="0"><stop offset="0.0052" stop-color="#fae72f" stop-opacity="0.44"/><stop offset="0.0155" stop-color="#fff933"/><stop offset="0.0258" stop-color="#ffff35"/><stop offset="0.1495" stop-color="#fffc34"/><stop offset="0.3557" stop-color="#ffdd2d"/><stop offset="0.6443" stop-color="#a7901d"/><stop offset="0.7887" stop-color="#887618"/><stop offset="0.8814" stop-color="#857318"/><stop offset="0.9742" stop-color="#9a851b"/><stop offset="0.9845" stop-color="#95801a"/><stop offset="0.9948" stop-color="#473d0d" stop-opacity="0.94"/></linearGradient><linearGradient id="g163" gradientUnits="userSpaceOnUse" x1="365" x2="462" y1="0" y2="0"><stop offset="0.0052" stop-color="#dfc328" stop-opacity="0.19"/><stop offset="0.0155" stop-color="#fff432"/><stop offset="0.0258" stop-color="#ffff35"/><stop offset="0.1186" stop-color="#fffe34"/><stop offset="0.3557" stop-color="#ffdd2d"/><stop offset="0.6546" stop-color="#a6901d"/><stop offset="0.8093" stop-color="#887618"/><stop offset="0.8918" stop-color="#8a7718"/><stop offset="0.9742" stop-color="#9c871c"/><stop offset="0.9845" stop-color="#776715"/><stop offset="0.9948" stop-color="#4b410d" stop-opacity="0.62"/></linearGradient><linearGradient id="g164" gradientUnits="userSpaceOnUse" x1="366" x2="462" y1="0" y2="0"><stop offset="0.0052" stop-color="#fbeb30" stop-opacity="0.81"/><stop offset="0.0156" stop-color="#fffc34"/><stop offset="0.0990" stop-color="#ffff34"/><stop offset="0.3490" stop-color="#ffdd2d"/><stop offset="0.6302" stop-color="#ae961f"/><stop offset="0.7656" stop-color="#917d1a"/><stop offset="0.8698" stop-color="#8b7819"/><stop offset="0.9740" stop-color="#9d881c"/><stop offset="0.9844" stop-color="#50450e"/><stop offset="0.9948" stop-color="#635612" stop-opacity="0.31"/></linearGradient><linearGradient id="g165" gradientUnits="userSpaceOnUse" x1="366" x2="461" y1="0" y2="0"><stop offset="0.0053" stop-color="#f3dd2d" stop-opacity="0.44"/><stop offset="0.0158" stop-color="#fff733"/><stop offset="0.0263" stop-color="#ffff34"/><stop offset="0.1316" stop-color="#fffc34"/><stop offset="0.3526" stop-color="#ffdc2d"/><stop offset="0.6368" stop-color="#b0981f"/><stop offset="0.7737" stop-color="#937f1a"/><stop offset="0.8684" stop-color="#8e7b19"/><stop offset="0.9737" stop-color="#9f891c"/><stop offset="0.9842" stop-color="#877418"/><stop offset="0.9947" stop-color="#4d430e" stop-opacity="0.94"/></linearGradient><linearGradient id="g166" gradientUnits="userSpaceOnUse" x1="366" x2="461" y1="0" y2="0"><stop offset="0.0053" stop-color="#d4b725" stop-opacity="0.06"/><stop offset="0.0158" stop-color="#fdec30" stop-opacity="0.94"/><stop offset="0.0263" stop-color="#fffd34"/><stop offset="0.1632" stop-color="#fff933"/><stop offset="0.3526" stop-color="#ffdc2d"/><stop offset="0.6368" stop-color="#b29a1f"/><stop offset="0.7737" stop-color="#96811a"/><stop offset="0.8684" stop-color="#927e1a"/><stop offset="0.9737" stop-color="#a08a1c"/><stop offset="0.9842" stop-color="#574c0f"/><stop offset="0.9947" stop-color="#5d5010" stop-opacity="0.50"/></linearGradient><linearGradient id="g167" gradientUnits="userSpaceOnUse" x1="367" x2="461" y1="0" y2="0"><stop offset="0.0053" stop-color="#f6de2e" stop-opacity="0.50"/><stop offset="0.0160" stop-color="#fff532"/><stop offset="0.0266" stop-color="#ffff34"/><stop offset="0.1117" stop-color="#fffc34"/><stop offset="0.3457" stop-color="#fedc2d"/><stop offset="0.7500" stop-color="#9c861c"/><stop offset="0.8564" stop-color="#95811a"/><stop offset="0.9628" stop-color="#a28c1d"/><stop offset="0.9734" stop-color="#847217"/><stop offset="0.9840" stop-color="#493f0d" stop-opacity="0.94"/><stop offset="0.9947" stop-color="#907c19" stop-opacity="0.06"/></linearGradient><linearGradient id="g168" gradientUnits="userSpaceOnUse" x1="367" x2="460" y1="0" y2="0"><stop offset="0.0054" stop-color="#cbaf24" stop-opacity="0.06"/><stop offset="0.0161" stop-color="#f8e62f" stop-opacity="0.94"/><stop offset="0.0269" stop-color="#fffa33"/><stop offset="0.0376" stop-color="#ffff34"/><stop offset="0.1452" stop-color="#fff933"/><stop offset="0.3495" stop-color="#fedc2d"/><stop offset="0.7366" stop-color="#a28c1d"/><stop offset="0.8441" stop-color="#98841b"/><stop offset="0.9624" stop-color="#a48e1d"/><stop offset="0.9731" stop-color="#9e881c"/><stop offset="0.9839" stop-color="#4e430e"/><stop offset="0.9946" stop-color="#685a12" stop-opacity="0.50"/></linearGradient><linearGradient id="g169" gradientUnits="userSpaceOnUse" x1="368" x2="460" y1="0" y2="0"><stop offset="0.0054" stop-color="#dbc228" stop-opacity="0.44"/><stop offset="0.0163" stop-color="#fff131"/><stop offset="0.0272" stop-color="#fffd34"/><stop offset="0.0924" stop-color="#fffc34"/><stop offset="0.3424" stop-color="#fedb2d"/><stop offset="0.7228" stop-color="#a6901d"/><stop offset="0.8315" stop-color="#9c871c"/><stop offset="0.9620" stop-color="#a58f1d"/><stop offset="0.9728" stop-color="#6a5b13"/><stop offset="0.9837" stop-color="#574b0f" stop-opacity="0.88"/><stop offset="0.9946" stop-color="#c6ab23" stop-opacity="0.06"/></linearGradient><linearGradient id="g170" gradientUnits="userSpaceOnUse" x1="369" x2="459" y1="0" y2="0"><stop offset="0.0056" stop-color="#edd62c" stop-opacity="0.75"/><stop offset="0.0167" stop-color="#fff332"/><stop offset="0.0278" stop-color="#fffe34"/><stop offset="0.1056" stop-color="#fffa33"/><stop offset="0.3389" stop-color="#fedb2d"/><stop offset="0.7167" stop-color="#ab941e"/><stop offset="0.8278" stop-color="#a08a1c"/><stop offset="0.9611" stop-color="#a7901e"/><stop offset="0.9722" stop-color="#847217"/><stop offset="0.9833" stop-color="#4b410d"/><stop offset="0.9944" stop-color="#7d6c16" stop-opacity="0.25"/></linearGradient><linearGradient id="g171" gradientUnits="userSpaceOnUse" x1="369" x2="458" y1="0" y2="0"><stop offset="0.0056" stop-color="#b89f21" stop-opacity="0.12"/><stop offset="0.0169" stop-color="#f4df2e" stop-opacity="0.94"/><stop offset="0.0281" stop-color="#fff532"/><stop offset="0.0393" stop-color="#fffd34"/><stop offset="0.1180" stop-color="#fff933"/><stop offset="0.3315" stop-color="#ffdd2d"/><stop offset="0.7360" stop-color="#ac951e"/><stop offset="0.8371" stop-color="#a48d1d"/><stop offset="0.9607" stop-color="#a9921e"/><stop offset="0.9719" stop-color="#97831b"/><stop offset="0.9831" stop-color="#4e430e"/><stop offset="0.9944" stop-color="#706114" stop-opacity="0.56"/></linearGradient><linearGradient id="g172" gradientUnits="userSpaceOnUse" x1="370" x2="457" y1="0" y2="0"><stop offset="0.0057" stop-color="#c5ac23" stop-opacity="0.31"/><stop offset="0.0172" stop-color="#f8e42f"/><stop offset="0.0402" stop-color="#fffc34"/><stop offset="0.3276" stop-color="#ffdd2d"/><stop offset="0.7414" stop-color="#af971f"/><stop offset="0.8333" stop-color="#a8911e"/><stop offset="0.9598" stop-color="#ac941e"/><stop offset="0.9713" stop-color="#9b861b"/><stop offset="0.9828" stop-color="#52470e"/><stop offset="0.9943" stop-color="#6a5c13" stop-opacity="0.81"/></linearGradient><linearGradient id="g173" gradientUnits="userSpaceOnUse" x1="371" x2="457" y1="0" y2="0"><stop offset="0.0058" stop-color="#ceb425" stop-opacity="0.44"/><stop offset="0.0174" stop-color="#fce72f"/><stop offset="0.0407" stop-color="#fffb33"/><stop offset="0.3314" stop-color="#fedb2d"/><stop offset="0.7151" stop-color="#b59c20"/><stop offset="0.8198" stop-color="#ac941e"/><stop offset="0.9477" stop-color="#ae961f"/><stop offset="0.9593" stop-color="#9e881c"/><stop offset="0.9709" stop-color="#574b0f"/><stop offset="0.9826" stop-color="#605311" stop-opacity="0.88"/><stop offset="0.9942" stop-color="#9c871c" stop-opacity="0.06"/></linearGradient><linearGradient id="g174" gradientUnits="userSpaceOnUse" x1="372" x2="456" y1="0" y2="0"><stop offset="0.0060" stop-color="#c1a822" stop-opacity="0.62"/><stop offset="0.0179" stop-color="#fce62f"/><stop offset="0.0417" stop-color="#fffa33"/><stop offset="0.3274" stop-color="#fedc2d"/><stop offset="0.7202" stop-color="#b79e20"/><stop offset="0.9464" stop-color="#b0981f"/><stop offset="0.9583" stop-color="#9f8a1c"/><stop offset="0.9702" stop-color="#5a4d10"/><stop offset="0.9821" stop-color="#625411" stop-opacity="0.94"/><stop offset="0.9940" stop-color="#ad961f" stop-opacity="0.19"/></linearGradient><linearGradient id="g175" gradientUnits="userSpaceOnUse" x1="373" x2="455" y1="0" y2="0"><stop offset="0.0061" stop-color="#c0a722" stop-opacity="0.62"/><stop offset="0.0183" stop-color="#fae32e"/><stop offset="0.0427" stop-color="#fff933"/><stop offset="0.3232" stop-color="#ffdc2d"/><stop offset="0.7134" stop-color="#bca221"/><stop offset="0.9451" stop-color="#b29a1f"/><stop offset="0.9573" stop-color="#9c871c"/><stop offset="0.9695" stop-color="#5b4f10"/><stop offset="0.9817" stop-color="#645612" stop-opacity="0.94"/><stop offset="0.9939" stop-color="#a38c1d" stop-opacity="0.19"/></linearGradient><linearGradient id="g176" gradientUnits="userSpaceOnUse" x1="374" x2="454" y1="0" y2="0"><stop offset="0.0063" stop-color="#a8921e" stop-opacity="0.62"/><stop offset="0.0187" stop-color="#f5dc2d"/><stop offset="0.0437" stop-color="#fff732"/><stop offset="0.3187" stop-color="#ffdc2d"/><stop offset="0.6937" stop-color="#c2a722"/><stop offset="0.9437" stop-color="#b49b20"/><stop offset="0.9563" stop-color="#8f7b19"/><stop offset="0.9688" stop-color="#584c10"/><stop offset="0.9812" stop-color="#6f6014" stop-opacity="0.94"/><stop offset="0.9938" stop-color="#af971f" stop-opacity="0.19"/></linearGradient><linearGradient id="g177" gradientUnits="userSpaceOnUse" x1="375" x2="453" y1="0" y2="0"><stop offset="0.0064" stop-color="#b1991f" stop-opacity="0.38"/><stop offset="0.0192" stop-color="#e7cc2a"/><stop offset="0.0321" stop-color="#ffe72f"/><stop offset="0.0577" stop-color="#fff632"/><stop offset="0.3141" stop-color="#ffdd2d"/><stop offset="0.6859" stop-color="#c6ab23"/><stop offset="0.9295" stop-color="#b89f20"/><stop offset="0.9423" stop-color="#b2991f"/><stop offset="0.9551" stop-color="#7c6b16"/><stop offset="0.9679" stop-color="#594d10"/><stop offset="0.9808" stop-color="#726314" stop-opacity="0.81"/><stop offset="0.9936" stop-color="#a18b1c" stop-opacity="0.06"/></linearGradient><linearGradient id="g178" gradientUnits="userSpaceOnUse" x1="376" x2="452" y1="0" y2="0"><stop offset="0.0066" stop-color="#8e7b19" stop-opacity="0.25"/><stop offset="0.0197" stop-color="#d0b625" stop-opacity="0.94"/><stop offset="0.0329" stop-color="#fee22e"/><stop offset="0.0592" stop-color="#fff432"/><stop offset="0.3092" stop-color="#ffdd2d"/><stop offset="0.6776" stop-color="#caaf24"/><stop offset="0.9276" stop-color="#baa021"/><stop offset="0.9408" stop-color="#a58e1d"/><stop offset="0.9539" stop-color="#6a5b13"/><stop offset="0.9671" stop-color="#5d5010"/><stop offset="0.9803" stop-color="#7f6d16" stop-opacity="0.62"/><stop offset="0.9934" stop-color="#d4b725" stop-opacity="0.06"/></linearGradient><linearGradient id="g179" gradientUnits="userSpaceOnUse" x1="377" x2="450" y1="0" y2="0"><stop offset="0.0068" stop-color="#816f17" stop-opacity="0.06"/><stop offset="0.0205" stop-color="#b0981f" stop-opacity="0.75"/><stop offset="0.0342" stop-color="#f2d42b"/><stop offset="0.0479" stop-color="#ffe32e"/><stop offset="0.0753" stop-color="#fff332"/><stop offset="0.3219" stop-color="#ffdc2d"/><stop offset="0.6644" stop-color="#d0b325"/><stop offset="0.9247" stop-color="#bea421"/><stop offset="0.9384" stop-color="#b39b20"/><stop offset="0.9521" stop-color="#847217"/><stop offset="0.9658" stop-color="#625511"/><stop offset="0.9795" stop-color="#645712" stop-opacity="0.94"/><stop offset="0.9932" stop-color="#94801a" stop-opacity="0.38"/></linearGradient><linearGradient id="g180" gradientUnits="userSpaceOnUse" x1="379" x2="449" y1="0" y2="0"><stop offset="0.0071" stop-color="#877418" stop-opacity="0.44"/><stop offset="0.0214" stop-color="#d0b525" stop-opacity="0.94"/><stop offset="0.0357" stop-color="#fbdb2d"/><stop offset="0.0786" stop-color="#fff131"/><stop offset="0.3071" stop-color="#ffdd2d"/><stop offset="0.6500" stop-color="#d4b725"/><stop offset="0.9071" stop-color="#c1a722"/><stop offset="0.9214" stop-color="#bba221"/><stop offset="0.9500" stop-color="#716114"/><stop offset="0.9643" stop-color="#605311"/><stop offset="0.9786" stop-color="#786815" stop-opacity="0.75"/><stop offset="0.9929" stop-color="#b0981f" stop-opacity="0.12"/></linearGradient><linearGradient id="g181" gradientUnits="userSpaceOnUse" x1="380" x2="447" y1="0" y2="0"><stop offset="0.0075" stop-color="#574b0f" stop-opacity="0.12"/><stop offset="0.0224" stop-color="#9b861b" stop-opacity="0.69"/><stop offset="0.0373" stop-color="#dcbf27"/><stop offset="0.0522" stop-color="#fcda2d"/><stop offset="0.0821" stop-color="#ffeb30"/><stop offset="0.3209" stop-color="#ffdc2d"/><stop offset="0.6493" stop-color="#d8bb26"/><stop offset="0.9030" stop-color="#c5aa23"/><stop offset="0.9179" stop-color="#bfa522"/><stop offset="0.9478" stop-color="#786815"/><stop offset="0.9627" stop-color="#655712"/><stop offset="0.9776" stop-color="#6e5f14" stop-opacity="0.94"/><stop offset="0.9925" stop-color="#97831b" stop-opacity="0.38"/></linearGradient><linearGradient id="g182" gradientUnits="userSpaceOnUse" x1="382" x2="446" y1="0" y2="0"><stop offset="0.0078" stop-color="#665812" stop-opacity="0.25"/><stop offset="0.0234" stop-color="#a18b1c" stop-opacity="0.81"/><stop offset="0.0391" stop-color="#dfc127"/><stop offset="0.0547" stop-color="#f9d72c"/><stop offset="0.0859" stop-color="#fee72f"/><stop offset="0.1016" stop-color="#ffed30"/><stop offset="0.3047" stop-color="#ffdd2d"/><stop offset="0.8828" stop-color="#c8ad23"/><stop offset="0.8984" stop-color="#bfa522"/><stop offset="0.9297" stop-color="#7d6c16"/><stop offset="0.9453" stop-color="#6a5b13"/><stop offset="0.9609" stop-color="#6e5f13"/><stop offset="0.9766" stop-color="#816f17" stop-opacity="0.50"/><stop offset="0.9922" stop-color="#bea422" stop-opacity="0.06"/></linearGradient><linearGradient id="g183" gradientUnits="userSpaceOnUse" x1="384" x2="444" y1="0" y2="0"><stop offset="0.0083" stop-color="#605311" stop-opacity="0.38"/><stop offset="0.0250" stop-color="#94801a" stop-opacity="0.88"/><stop offset="0.0417" stop-color="#d5b826"/><stop offset="0.0583" stop-color="#f2d12b"/><stop offset="0.1083" stop-color="#fee82f"/><stop offset="0.3083" stop-color="#fedc2d"/><stop offset="0.8750" stop-color="#cbb024"/><stop offset="0.9250" stop-color="#7d6c16"/><stop offset="0.9417" stop-color="#6c5d13"/><stop offset="0.9583" stop-color="#6f6014"/><stop offset="0.9750" stop-color="#887518" stop-opacity="0.62"/><stop offset="0.9917" stop-color="#bba121" stop-opacity="0.12"/></linearGradient><linearGradient id="g184" gradientUnits="userSpaceOnUse" x1="386" x2="442" y1="0" y2="0"><stop offset="0.0089" stop-color="#574b0f" stop-opacity="0.38"/><stop offset="0.0268" stop-color="#877518" stop-opacity="0.75"/><stop offset="0.0446" stop-color="#b9a021"/><stop offset="0.0625" stop-color="#e5c629"/><stop offset="0.1339" stop-color="#fde42f"/><stop offset="0.2946" stop-color="#ffdc2d"/><stop offset="0.8482" stop-color="#d0b425"/><stop offset="0.9018" stop-color="#8b7819"/><stop offset="0.9375" stop-color="#6a5c13"/><stop offset="0.9554" stop-color="#716214" stop-opacity="0.94"/><stop offset="0.9732" stop-color="#8e7a19" stop-opacity="0.56"/><stop offset="0.9911" stop-color="#bfa522" stop-opacity="0.12"/></linearGradient><linearGradient id="g185" gradientUnits="userSpaceOnUse" x1="388" x2="440" y1="0" y2="0"><stop offset="0.0096" stop-color="#493f0d" stop-opacity="0.19"/><stop offset="0.0288" stop-color="#6a5b13" stop-opacity="0.62"/><stop offset="0.0481" stop-color="#917d1a" stop-opacity="0.94"/><stop offset="0.0673" stop-color="#c5aa23"/><stop offset="0.0865" stop-color="#e2c328"/><stop offset="0.1827" stop-color="#ffe22e"/><stop offset="0.2981" stop-color="#fedb2d"/><stop offset="0.7981" stop-color="#d7ba26"/><stop offset="0.8173" stop-color="#cfb224"/><stop offset="0.9135" stop-color="#726214"/><stop offset="0.9327" stop-color="#6d5e13"/><stop offset="0.9519" stop-color="#7b6a16" stop-opacity="0.81"/><stop offset="0.9712" stop-color="#99841b" stop-opacity="0.38"/><stop offset="0.9904" stop-color="#ccb024" stop-opacity="0.06"/></linearGradient><linearGradient id="g186" gradientUnits="userSpaceOnUse" x1="391" x2="437" y1="0" y2="0"><stop offset="0.0109" stop-color="#52470e" stop-opacity="0.38"/><stop offset="0.0543" stop-color="#897618"/><stop offset="0.0761" stop-color="#b49b20"/><stop offset="0.0978" stop-color="#d4b725"/><stop offset="0.1196" stop-color="#e0c128"/><stop offset="0.2500" stop-color="#ffdc2d"/><stop offset="0.7283" stop-color="#dfc027"/><stop offset="0.7717" stop-color="#ceb224"/><stop offset="0.9022" stop-color="#726314"/><stop offset="0.9239" stop-color="#6c5d13"/><stop offset="0.9457" stop-color="#776715" stop-opacity="0.88"/><stop offset="0.9891" stop-color="#bba121" stop-opacity="0.19"/></linearGradient><linearGradient id="g187" gradientUnits="userSpaceOnUse" x1="394" x2="434" y1="0" y2="0"><stop offset="0.0125" stop-color="#4f450e" stop-opacity="0.31"/><stop offset="0.0625" stop-color="#736314" stop-opacity="0.88"/><stop offset="0.0875" stop-color="#8a7718"/><stop offset="0.1375" stop-color="#c6ab23"/><stop offset="0.1625" stop-color="#d2b525"/><stop offset="0.3625" stop-color="#eccc2a"/><stop offset="0.6125" stop-color="#dcbe27"/><stop offset="0.8125" stop-color="#99841b"/><stop offset="0.8875" stop-color="#6e5f13"/><stop offset="0.9125" stop-color="#746515"/><stop offset="0.9375" stop-color="#796915" stop-opacity="0.75"/><stop offset="0.9875" stop-color="#b1991f" stop-opacity="0.12"/></linearGradient><linearGradient id="g188" gradientUnits="userSpaceOnUse" x1="397" x2="430" y1="0" y2="0"><stop offset="0.0152" stop-color="#706114" stop-opacity="0.12"/><stop offset="0.0455" stop-color="#52470f" stop-opacity="0.31"/><stop offset="0.0758" stop-color="#584c10" stop-opacity="0.56"/><stop offset="0.1364" stop-color="#746415"/><stop offset="0.2576" stop-color="#b29a20"/><stop offset="0.3788" stop-color="#c2a822"/><stop offset="0.6515" stop-color="#ab941e"/><stop offset="0.7121" stop-color="#9c871c"/><stop offset="0.8030" stop-color="#766615"/><stop offset="0.8636" stop-color="#706114"/><stop offset="0.9242" stop-color="#796815" stop-opacity="0.69"/><stop offset="0.9848" stop-color="#ac941e" stop-opacity="0.25"/></linearGradient><linearGradient id="g189" gradientUnits="userSpaceOnUse" x1="402" x2="425" y1="0" y2="0"><stop offset="0.0217" stop-color="#806f17" stop-opacity="0.12"/><stop offset="0.1087" stop-color="#635511" stop-opacity="0.44"/><stop offset="0.1522" stop-color="#54490f" stop-opacity="0.50"/><stop offset="0.1957" stop-color="#615411" stop-opacity="0.69"/><stop offset="0.2826" stop-color="#605311" stop-opacity="0.75"/><stop offset="0.3261" stop-color="#6c5d13" stop-opacity="0.94"/><stop offset="0.3696" stop-color="#6f6014"/><stop offset="0.6739" stop-color="#706014"/><stop offset="0.7174" stop-color="#675912" stop-opacity="0.81"/><stop offset="0.8043" stop-color="#6e5f13" stop-opacity="0.75"/><stop offset="0.8478" stop-color="#716114" stop-opacity="0.56"/><stop offset="0.8913" stop-color="#857318" stop-opacity="0.50"/><stop offset="0.9348" stop-color="#927e1a" stop-opacity="0.31"/><stop offset="0.9783" stop-color="#a9921e" stop-opacity="0.25"/></linearGradient></defs><rect x="411" y="53" width="6" height="1" fill="url(#g0)"/><rect x="410" y="54" width="8" height="1" fill="url(#g1)"/><rect x="409" y="55" width="10" height="1" fill="url(#g2)"/><rect x="408" y="56" width="11" height="1" fill="url(#g3)"/><rect x="408" y="57" width="11" height="1" fill="url(#g4)"/><rect x="408" y="58" width="11" height="1" fill="url(#g5)"/><rect x="405" y="59" width="18" height="1" fill="url(#g6)"/><rect x="402" y="60" width="23" height="1" fill="url(#g7)"/><rect x="401" y="61" width="26" height="1" fill="url(#g8)"/><rect x="399" y="62" width="29" height="1" fill="url(#g9)"/><rect x="396" y="63" width="35" height="1" fill="url(#g10)"/><rect x="394" y="64" width="40" height="1" fill="url(#g11)"/><rect x="392" y="65" width="43" height="1" fill="url(#g12)"/><rect x="391" y="66" width="46" height="1" fill="url(#g13)"/><rect x="390" y="67" width="48" height="1" fill="url(#g14)"/><rect x="389" y="68" width="50" height="1" fill="url(#g15)"/><rect x="388" y="69" width="52" height="1" fill="url(#g16)"/><rect x="387" y="70" width="53" height="1" fill="url(#g17)"/><rect x="387" y="71" width="54" height="1" fill="url(#g18)"/><rect x="386" y="72" width="55" height="1" fill="url(#g19)"/><rect x="386" y="73" width="55" height="1" fill="url(#g20)"/><rect x="386" y="74" width="55" height="1" fill="url(#g21)"/><rect x="386" y="75" width="55" height="1" fill="url(#g22)"/><rect x="387" y="76" width="54" height="1" fill="url(#g23)"/><rect x="387" y="77" width="53" height="1" fill="url(#g24)"/><rect x="388" y="78" width="52" height="1" fill="url(#g25)"/><rect x="388" y="79" width="51" height="1" fill="url(#g26)"/><rect x="389" y="80" width="50" height="1" fill="url(#g27)"/><rect x="389" y="81" width="49" height="1" fill="url(#g28)"/><rect x="390" y="82" width="48" height="1" fill="url(#g29)"/><rect x="390" y="83" width="47" height="1" fill="url(#g30)"/><rect x="391" y="84" width="46" height="1" fill="url(#g31)"/><rect x="391" y="85" width="45" height="1" fill="url(#g32)"/><rect x="392" y="86" width="44" height="1" fill="url(#g33)"/><rect x="392" y="87" width="43" height="1" fill="url(#g34)"/><rect x="393" y="88" width="42" height="1" fill="url(#g35)"/><rect x="393" y="89" width="41" height="1" fill="url(#g36)"/><rect x="394" y="90" width="40" height="1" fill="url(#g37)"/><rect x="394" y="91" width="39" height="1" fill="url(#g38)"/><rect x="395" y="92" width="38" height="1" fill="url(#g39)"/><rect x="395" y="93" width="37" height="1" fill="url(#g40)"/><rect x="396" y="94" width="36" height="1" fill="url(#g41)"/><rect x="396" y="95" width="35" height="1" fill="url(#g42)"/><rect x="397" y="96" width="34" height="1" fill="url(#g43)"/><rect x="397" y="97" width="34" height="1" fill="url(#g44)"/><rect x="397" y="98" width="33" height="1" fill="url(#g45)"/><rect x="397" y="99" width="33" height="1" fill="url(#g46)"/><rect x="398" y="100" width="32" height="1" fill="url(#g47)"/><rect x="398" y="101" width="31" height="1" fill="url(#g48)"/><rect x="398" y="102" width="31" height="1" fill="url(#g49)"/><rect x="399" y="103" width="30" height="1" fill="url(#g50)"/><rect x="399" y="104" width="30" height="1" fill="url(#g51)"/><rect x="399" y="105" width="29" height="1" fill="url(#g52)"/><rect x="400" y="106" width="28" height="1" fill="url(#g53)"/><rect x="400" y="107" width="28" height="1" fill="url(#g54)"/><rect x="400" y="108" width="27" height="1" fill="url(#g55)"/><rect x="400" y="109" width="27" height="1" fill="url(#g56)"/><rect x="401" y="110" width="26" height="1" fill="url(#g57)"/><rect x="401" y="111" width="26" height="1" fill="url(#g58)"/><rect x="401" y="112" width="26" height="1" fill="url(#g59)"/><rect x="401" y="113" width="25" height="1" fill="url(#g60)"/><rect x="401" y="114" width="25" height="1" fill="url(#g61)"/><rect x="401" y="115" width="25" height="1" fill="url(#g62)"/><rect x="402" y="116" width="24" height="1" fill="url(#g63)"/><rect x="402" y="117" width="24" height="1" fill="url(#g64)"/><rect x="402" y="118" width="24" height="1" fill="url(#g65)"/><rect x="402" y="119" width="23" height="1" fill="url(#g66)"/><rect x="402" y="120" width="23" height="1" fill="url(#g67)"/><rect x="403" y="121" width="22" height="1" fill="url(#g68)"/><rect x="403" y="122" width="22" height="1" fill="url(#g69)"/><rect x="403" y="123" width="21" height="1" fill="url(#g70)"/><rect x="403" y="124" width="21" height="1" fill="url(#g71)"/><rect x="404" y="125" width="20" height="1" fill="url(#g72)"/><rect x="404" y="126" width="20" height="1" fill="url(#g73)"/><rect x="404" y="127" width="20" height="1" fill="url(#g74)"/><rect x="404" y="128" width="20" height="1" fill="url(#g75)"/><rect x="404" y="129" width="20" height="1" fill="url(#g76)"/><rect x="404" y="130" width="20" height="1" fill="url(#g77)"/><rect x="404" y="131" width="20" height="1" fill="url(#g78)"/><rect x="404" y="132" width="20" height="1" fill="url(#g79)"/><rect x="404" y="133" width="20" height="1" fill="url(#g80)"/><rect x="404" y="134" width="20" height="1" fill="url(#g81)"/><rect x="404" y="135" width="20" height="1" fill="url(#g82)"/><rect x="404" y="136" width="19" height="1" fill="url(#g83)"/><rect x="404" y="137" width="19" height="1" fill="url(#g84)"/><rect x="404" y="138" width="19" height="1" fill="url(#g85)"/><rect x="404" y="139" width="19" height="1" fill="url(#g86)"/><rect x="404" y="140" width="19" height="1" fill="url(#g87)"/><rect x="404" y="141" width="19" height="1" fill="url(#g88)"/><rect x="404" y="142" width="19" height="1" fill="url(#g89)"/><rect x="405" y="143" width="18" height="1" fill="url(#g90)"/><rect x="405" y="144" width="18" height="1" fill="url(#g91)"/><rect x="405" y="145" width="18" height="1" fill="url(#g92)"/><rect x="405" y="146" width="18" height="1" fill="url(#g93)"/><rect x="405" y="147" width="18" height="1" fill="url(#g94)"/><rect x="405" y="148" width="18" height="1" fill="url(#g95)"/><rect x="405" y="149" width="18" height="1" fill="url(#g96)"/><rect x="405" y="150" width="18" height="1" fill="url(#g97)"/><rect x="404" y="151" width="19" height="1" fill="url(#g98)"/><rect x="404" y="152" width="19" height="1" fill="url(#g99)"/><rect x="404" y="153" width="19" height="1" fill="url(#g100)"/><rect x="404" y="154" width="20" height="1" fill="url(#g101)"/><rect x="404" y="155" width="20" height="1" fill="url(#g102)"/><rect x="404" y="156" width="20" height="1" fill="url(#g103)"/><rect x="403" y="157" width="21" height="1" fill="url(#g104)"/><rect x="403" y="158" width="21" height="1" fill="url(#g105)"/><rect x="403" y="159" width="22" height="1" fill="url(#g106)"/><rect x="403" y="160" width="22" height="1" fill="url(#g107)"/><rect x="402" y="161" width="23" height="1" fill="url(#g108)"/><rect x="402" y="162" width="23" height="1" fill="url(#g109)"/><rect x="402" y="163" width="24" height="1" fill="url(#g110)"/><rect x="402" y="164" width="24" height="1" fill="url(#g111)"/><rect x="401" y="165" width="25" height="1" fill="url(#g112)"/><rect x="401" y="166" width="26" height="1" fill="url(#g113)"/><rect x="400" y="167" width="27" height="1" fill="url(#g114)"/><rect x="400" y="168" width="28" height="1" fill="url(#g115)"/><rect x="399" y="169" width="30" height="1" fill="url(#g116)"/><rect x="398" y="170" width="31" height="1" fill="url(#g117)"/><rect x="398" y="171" width="32" height="1" fill="url(#g118)"/><rect x="397" y="172" width="34" height="1" fill="url(#g119)"/><rect x="396" y="173" width="35" height="1" fill="url(#g120)"/><rect x="396" y="174" width="35" height="1" fill="url(#g121)"/><rect x="396" y="175" width="36" height="1" fill="url(#g122)"/><rect x="395" y="176" width="37" height="1" fill="url(#g123)"/><rect x="395" y="177" width="37" height="1" fill="url(#g124)"/><rect x="394" y="178" width="40" height="1" fill="url(#g125)"/><rect x="391" y="179" width="46" height="1" fill="url(#g126)"/><rect x="388" y="180" width="51" height="1" fill="url(#g127)"/><rect x="386" y="181" width="55" height="1" fill="url(#g128)"/><rect x="384" y="182" width="59" height="1" fill="url(#g129)"/><rect x="382" y="183" width="63" height="1" fill="url(#g130)"/><rect x="381" y="184" width="66" height="1" fill="url(#g131)"/><rect x="379" y="185" width="69" height="1" fill="url(#g132)"/><rect x="378" y="186" width="72" height="1" fill="url(#g133)"/><rect x="377" y="187" width="74" height="1" fill="url(#g134)"/><rect x="375" y="188" width="77" height="1" fill="url(#g135)"/><rect x="374" y="189" width="79" height="1" fill="url(#g136)"/><rect x="373" y="190" width="81" height="1" fill="url(#g137)"/><rect x="372" y="191" width="83" height="1" fill="url(#g138)"/><rect x="371" y="192" width="85" height="1" fill="url(#g139)"/><rect x="371" y="193" width="86" height="1" fill="url(#g140)"/><rect x="370" y="194" width="88" height="1" fill="url(#g141)"/><rect x="369" y="195" width="89" height="1" fill="url(#g142)"/><rect x="368" y="196" width="91" height="1" fill="url(#g143)"/><rect x="368" y="197" width="92" height="1" fill="url(#g144)"/><rect x="367" y="198" width="93" height="1" fill="url(#g145)"/><rect x="367" y="199" width="94" height="1" fill="url(#g146)"/><rect x="366" y="200" width="95" height="1" fill="url(#g147)"/><rect x="366" y="201" width="96" height="1" fill="url(#g148)"/><rect x="366" y="202" width="96" height="1" fill="url(#g149)"/><rect x="365" y="203" width="97" height="1" fill="url(#g150)"/><rect x="365" y="204" width="98" height="1" fill="url(#g151)"/><rect x="365" y="205" width="98" height="1" fill="url(#g152)"/><rect x="365" y="206" width="98" height="1" fill="url(#g153)"/><rect x="365" y="207" width="98" height="1" fill="url(#g154)"/><rect x="364" y="208" width="99" height="1" fill="url(#g155)"/><rect x="364" y="209" width="99" height="1" fill="url(#g156)"/><rect x="364" y="210" width="99" height="1" fill="url(#g157)"/><rect x="364" y="211" width="99" height="1" fill="url(#g158)"/><rect x="365" y="212" width="98" height="1" fill="url(#g159)"/><rect x="365" y="213" width="98" height="1" fill="url(#g160)"/><rect x="365" y="214" width="98" height="1" fill="url(#g161)"/><rect x="365" y="215" width="97" height="1" fill="url(#g162)"/><rect x="365" y="216" width="97" height="1" fill="url(#g163)"/><rect x="366" y="217" width="96" height="1" fill="url(#g164)"/><rect x="366" y="218" width="95" height="1" fill="url(#g165)"/><rect x="366" y="219" width="95" height="1" fill="url(#g166)"/><rect x="367" y="220" width="94" height="1" fill="url(#g167)"/><rect x="367" y="221" width="93" height="1" fill="url(#g168)"/><rect x="368" y="222" width="92" height="1" fill="url(#g169)"/><rect x="369" y="223" width="90" height="1" fill="url(#g170)"/><rect x="369" y="224" width="89" height="1" fill="url(#g171)"/><rect x="370" y="225" width="87" height="1" fill="url(#g172)"/><rect x="371" y="226" width="86" height="1" fill="url(#g173)"/><rect x="372" y="227" width="84" height="1" fill="url(#g174)"/><rect x="373" y="228" width="82" height="1" fill="url(#g175)"/><rect x="374" y="229" width="80" height="1" fill="url(#g176)"/><rect x="375" y="230" width="78" height="1" fill="url(#g177)"/><rect x="376" y="231" width="76" height="1" fill="url(#g178)"/><rect x="377" y="232" width="73" height="1" fill="url(#g179)"/><rect x="379" y="233" width="70" height="1" fill="url(#g180)"/><rect x="380" y="234" width="67" height="1" fill="url(#g181)"/><rect x="382" y="235" width="64" height="1" fill="url(#g182)"/><rect x="384" y="236" width="60" height="1" fill="url(#g183)"/><rect x="386" y="237" width="56" height="1" fill="url(#g184)"/><rect x="388" y="238" width="52" height="1" fill="url(#g185)"/><rect x="391" y="239" width="46" height="1" fill="url(#g186)"/><rect x="394" y="240" width="40" height="1" fill="url(#g187)"/><rect x="397" y="241" width="33" height="1" fill="url(#g188)"/><rect x="402" y="242" width="23" height="1" fill="url(#g189)"/></g>
 <g fill="none" stroke-width="0.45">
  <path d="M256.4 238.3 V227.2" stroke="#7b7bea"/>
  <path d="M256.4 238.3 L261.8 231.8" stroke="#6fdc6f"/>
  <path d="M256.4 238.3 L268.6 241.6" stroke="#f07a6a"/>
  <path d="M255.6 224.5 H256.8 L255.6 225.9 H256.8 M262.6 229.4 L263.5 230.6 M263.9 229.4 L262.8 231.2 M270.3 241.6 L271.5 242.9 M271.5 241.6 L270.3 242.9" stroke="#555" stroke-width="0.35"/>
 </g>
 <!-- title bar controls -->
 <g transform="translate(1,2)"><ellipse cx="2.2" cy="2.2" rx="2.2" ry="1.9" fill="#f2c81a"/><path d="M0.6 2.6 L3.8 1.2" stroke="#222" stroke-width="0.6"/><path d="M0.8 3.6 L3.6 2.6" stroke="#555" stroke-width="0.4"/></g>
 <path d="M645.6 3.6 H650" stroke="#111" stroke-width="0.45"/>
 <rect x="662" y="2.8" width="3.2" height="3.2" fill="none" stroke="#111" stroke-width="0.6" rx="0.6"/><path d="M663 2.2 H665.4 Q666 2.2 666 2.8 V5" fill="none" stroke="#111" stroke-width="0.5"/>
 <path d="M679 1.9 L683.2 6.1 M683.2 1.9 L679 6.1" stroke="#111" stroke-width="0.42"/>
 <path d="M209.6 17.6 L212.6 20.6 M212.6 17.6 L209.6 20.6" stroke="#111" stroke-width="0.6"/>
 <path d="M3.3 24.9 H7.6 Q8.6 24.9 8.6 25.9 V31.6 Q8.6 32.3 7.9 32.3 H3 Q2.4 32.3 2.4 31.6 V26 Z" fill="#fff" stroke="#222" stroke-width="0.83"/><path d="M2.4 26.6 L4.1 24.9 L2.4 24.9Z" fill="#111"/><path d="M5.5 28.2 V30.4 M4.4 29.3 H6.6" stroke="#111" stroke-width="0.75"/><path d="M12 31.6 V26.6 L12.9 25.6 H14.6 L15.4 26.4 H17.6 V28 H14.2 L12.6 31.6Z" fill="#222"/><path d="M12.2 31.7 L14 28.6 H19.2 L17.6 31.7Z" fill="#111"/><path d="M22.3 25 H28.6 L29.9 26.3 V31.6 H22.3Z" fill="#1a1a1a"/><rect x="23.6" y="25" width="4.2" height="2.3" fill="#e8e8e8"/><rect x="24.4" y="25.3" width="0.9" height="1.6" fill="#222"/><rect x="23.3" y="28.8" width="5.6" height="2.3" fill="#777"/><path d="M24.3 29.4 V31 M25.4 29.4 V31 M26.5 29.4 V31 M27.6 29.4 V31" stroke="#ccc" stroke-width="0.52"/><path d="M35.3 29.5 Q37.8 26 41.8 28.8" fill="none" stroke="#111" stroke-width="1.10"/><path d="M34.6 30.4 L35 27.6 L37.4 29.2Z" fill="#111"/><path d="M52 29.5 Q49.5 26 45.5 28.8" fill="none" stroke="#111" stroke-width="1.10"/><path d="M52.7 30.4 L52.3 27.6 L49.9 29.2Z" fill="#111"/><rect x="55.8" y="26.2" width="6.2" height="0.9" fill="#222"/><rect x="55.8" y="30.9" width="6.2" height="0.9" fill="#222"/><rect x="58.4" y="27.8" width="3.6" height="0.7" fill="#333"/><rect x="58.4" y="29.4" width="3.6" height="0.7" fill="#333"/><path d="M55.8 27.8 L57.599999999999994 29 L55.8 30.2Z" fill="#111"/><rect x="66.0" y="26.2" width="6.2" height="0.9" fill="#222"/><rect x="66.0" y="30.9" width="6.2" height="0.9" fill="#222"/><rect x="68.6" y="27.8" width="3.6" height="0.7" fill="#333"/><rect x="68.6" y="29.4" width="3.6" height="0.7" fill="#333"/><path d="M66.0 27.8 L67.8 29 L66.0 30.2Z" fill="#111"/><rect x="77.4" y="24.5" width="0.35" height="8.5" fill="#dcdcdc"/><rect x="98.6" y="24.5" width="0.35" height="8.5" fill="#dcdcdc"/><circle cx="81.9" cy="28" r="2.8" fill="#fff" stroke="#222" stroke-width="0.55"/><path d="M80.5 28.6 Q81.9 29.6 83.3 28.6" fill="none" stroke="#333" stroke-width="0.45"/><path d="M80.9 31.2 H82.9" stroke="#111" stroke-width="0.9"/><circle cx="92.1" cy="28.4" r="2.9" fill="#fff" stroke="#222" stroke-width="0.55"/><path d="M90.6 27.6 L92.1 26.8 L93.6 27.6 L93.6 29.3 L92.1 30.1 L90.6 29.3Z M90.6 27.6 L92.1 28.4 L93.6 27.6 M92.1 28.4 V30.1" fill="none" stroke="#333" stroke-width="0.4"/><path d="M101.3 31.9 V26.4 L102.7 25.1 H106.4 Q107.2 25.1 107.2 25.9 V31.9" fill="none" stroke="#222" stroke-width="0.6"/><path d="M101 26.6 L102.9 24.8 L101 24.8Z" fill="#111"/><path d="M101.6 31.9 V30 H103.3 V31.9 M104.1 31.9 V30 H106 V31.9" fill="none" stroke="#111" stroke-width="0.75"/><circle cx="115.1" cy="29" r="2.7" fill="#fff" stroke="#444" stroke-width="0.5"/><path d="M113.7 28.4 L115.1 27.6 L116.5 28.4 L116.5 29.9 L115.1 30.7 L113.7 29.9Z M113.7 28.4 L115.1 29.2 L116.5 28.4 M115.1 29.2 V30.7" fill="none" stroke="#444" stroke-width="0.4"/><path d="M113.4 25.3 L114.2 26.6 M116.8 25.3 L116 26.6" stroke="#444" stroke-width="0.5"/>
 <circle cx="221.5" cy="268.3" r="2.5" fill="#fff" stroke="#1a1a1a" stroke-width="0.68"/><path d="M220.2 268.8 Q221.5 269.8 222.8 268.8" fill="none" stroke="#1a1a1a" stroke-width="0.52"/><rect x="220.7" y="270.8" width="1.6" height="1.2" fill="#222"/><circle cx="232.7" cy="268.6" r="2.8" fill="#fff" stroke="#1a1a1a" stroke-width="0.68"/><path d="M231.2 267.8 L232.7 266.9 L234.2 267.8 V269.6 L232.7 270.5 L231.2 269.6Z M232.7 268.7 V270.5" fill="none" stroke="#1a1a1a" stroke-width="0.52"/><rect x="241.6" y="266" width="5.2" height="5" fill="none" stroke="#1a1a1a" stroke-width="0.52" stroke-dasharray="1 0.8"/><path d="M244.4 268.6 L247.6 271.6 L246.6 272.6Z" fill="#111"/><circle cx="254" cy="267.8" r="1.9" fill="#fff" stroke="#1a1a1a" stroke-width="0.75"/><path d="M255.2 269 L257.4 271.8" stroke="#111" stroke-width="1.10"/><circle cx="264.3" cy="267.8" r="1.9" fill="#fff" stroke="#1a1a1a" stroke-width="0.75"/><path d="M265.5 269 L267.7 271.8" stroke="#111" stroke-width="1.10"/><path d="M253.1 267.8 H254.9 M254 266.9 V268.7" stroke="#1a1a1a" stroke-width="0.52"/><path d="M263.4 267.8 H265.2" stroke="#1a1a1a" stroke-width="0.52"/><path d="M274 266.5 A2.8 2.8 0 1 0 278.3 267.3" fill="none" stroke="#1a1a1a" stroke-width="0.75"/><path d="M273 265.6 L275.2 265.8 L274.1 267.6Z" fill="#333"/><rect x="283.5" y="265.6" width="6.2" height="6.6" fill="#222"/><rect x="284.4" y="266.4" width="2" height="2.4" fill="#ddd"/><rect x="287" y="269.2" width="2" height="2.2" fill="#999"/><path d="M293.6 268.6 L297 265.6 L300.4 268.6 L297 271.8Z" fill="#222"/><path d="M295 268.4 L297 266.8 L299 268.4" fill="none" stroke="#eee" stroke-width="0.60"/><rect x="302.4" y="264.5" width="0.35" height="8.5" fill="#d8d8d8"/><path d="M306 267.6 H309.6 M307.8 265.8 V269.6" stroke="#111" stroke-width="0.7"/><rect x="309.4" y="268.4" width="2" height="2.2" fill="#333"/><path d="M311.2 270 H312.8 L311.2 271.7 H312.8" fill="none" stroke="#222" stroke-width="0.4"/><path d="M314.8 266.4 L320.2 270" stroke="#111" stroke-width="0.8"/><path d="M316.2 265.6 V267.6 M318 266.6 L319.6 266" stroke="#222" stroke-width="0.5"/><path d="M321.4 270.2 L323.0 271.9 M323.0 270.2 L321.4 271.9" fill="none" stroke="#222" stroke-width="0.4"/><path d="M327.4 267.4 L330.2 265.8 M327.4 267.4 L329 269.6 M328 267.2 H332" stroke="#111" stroke-width="0.7"/><rect x="330" y="268.6" width="1.8" height="1.8" fill="#333"/><path d="M331.8 270.2 L332.6 271.2 M333.40000000000003 270.2 L332.2 272.2" fill="none" stroke="#222" stroke-width="0.4"/><path d="M335.6 269.4 L338.6 266.4 M337.2 266.6 L340.4 268.4 M339 265.6 L339.6 269" stroke="#111" stroke-width="0.65"/><path d="M341.8 270 L342.6 271 M343.40000000000003 270 L342.2 272" fill="none" stroke="#222" stroke-width="0.4"/><path d="M350.4 265.4 V270.2 M348.6 267.2 H352.2 M349.2 265.6 L351.6 265.6" stroke="#111" stroke-width="0.7"/><rect x="349.6" y="268.4" width="1.6" height="1.6" fill="#222"/><path d="M352.6 270.4 H354.20000000000005 L352.6 272.09999999999997 H354.20000000000005" fill="none" stroke="#222" stroke-width="0.4"/><path d="M359.2 265.6 V270.6 M357.6 267.4 H361 M357.6 270.8 H361" stroke="#111" stroke-width="0.7"/><path d="M362 269.8 H363.6 L362 271.5 H363.6" fill="none" stroke="#222" stroke-width="0.4"/><rect x="368.2" y="263.6" width="10.1" height="9.6" fill="#cce8ff"/><path d="M370 268 L373.5 266.2 L376.6 267.2 L376.6 270.4 L373.2 272.2 L370 271Z" fill="none" stroke="#222" stroke-width="0.83"/><path d="M373.5 268.6 L377.4 265.2" stroke="#222" stroke-width="0.90"/><path d="M379.6 267 L382 265.6 H386.6 V270.4 L384.2 271.8 H379.6Z" fill="none" stroke="#222" stroke-width="0.90"/><path d="M379.6 267 H384.2 V271.8 M384.2 267 L386.6 265.6" fill="none" stroke="#222" stroke-width="0.75"/><rect x="380.4" y="267.8" width="1.6" height="3.2" fill="#555"/><rect x="390.7" y="263.6" width="10.1" height="9.6" fill="#cce8ff"/><path d="M393.2 271.4 L395.6 268.8 V266 M395.6 268.8 H398.6" fill="none" stroke="#222" stroke-width="0.75"/><rect x="401.3" y="263.6" width="9.7" height="9.6" fill="#cce8ff"/><path d="M403.2 271.6 L405.8 268.8 V265.8" fill="none" stroke="#222" stroke-width="0.75"/><rect x="406.4" y="268.6" width="2.8" height="2.8" fill="none" stroke="#1a1a1a" stroke-width="0.68"/><rect x="413.4" y="266.4" width="6.4" height="5" fill="none" stroke="#222" stroke-width="0.68" stroke-dasharray="1.2 0.6"/>
</svg>

<div class="hdr" style="left:611.5px;top:15.5px;width:78.5px;height:7.3px"></div>
<div class="t" style="left:613px;top:16.18px;font-size:4.98px;letter-spacing:-0.267px;line-height:6.23px;color:#222;">Customizer</div>
<svg class="a" style="left:683.5px;top:17.5px" width="5" height="5"><path d="M0.8 0.8 L3.7 3.7 M3.7 0.8 L0.8 3.7" stroke="#111" stroke-width="0.6"/></svg>
<div class="a" style="left:612.2px;top:24.7px;width:4.6px;height:4.4px;background:#1f63c6;border-radius:0.5px"></div>
<svg class="a" style="left:612.2px;top:24.7px" width="5" height="5"><path d="M1.2 2.3 L2.1 3.2 L3.6 1.3" stroke="#fff" stroke-width="0.5" fill="none"/></svg>
<div class="t" style="left:619px;top:24.90px;font-size:4.48px;letter-spacing:-0.240px;line-height:5.60px;color:#000;">Automatic Preview</div>
<div class="a" style="left:652px;top:24.6px;width:36.3px;height:5px;background:#fff"></div>
<div class="t" style="left:653px;top:24.90px;font-size:4.48px;letter-spacing:-0.240px;line-height:5.60px;color:#000;">Show Details</div>
<svg class="a" style="left:683px;top:25.5px" width="5" height="4"><path d="M0.8 1 L2 2.3 L3.2 1" stroke="#555" stroke-width="0.35" fill="none"/></svg>
<div class="a" style="left:612.2px;top:31.9px;width:55px;height:6.7px;background:#fff"></div>
<div class="t" style="left:613px;top:33.10px;font-size:4.48px;letter-spacing:-0.240px;line-height:5.60px;color:#000;">&lt;design default&gt;</div>
<svg class="a" style="left:661px;top:33.5px" width="5" height="4"><path d="M0.8 1 L2 2.3 L3.2 1" stroke="#555" stroke-width="0.35" fill="none"/></svg>
<div class="a" style="left:669.6px;top:31.9px;width:8.4px;height:6.7px;background:#fdfdfd"></div>
<svg class="a" style="left:669.6px;top:31.9px" width="9" height="7"><path d="M3.6 2.5 L5 3.35 L3.6 4.2Z" fill="#222"/></svg>
<div class="a" style="left:679.9px;top:31.9px;width:8.4px;height:6.7px;background:#f3f3f3"></div>
<svg class="a" style="left:679.9px;top:31.9px" width="9" height="7"><path d="M3.5 3.4 H5" stroke="#aaa" stroke-width="0.3"/></svg>
<div class="a" style="left:612px;top:40px;width:76.7px;height:368.3px;border:0.4px solid #d0d0d0;background:#f0f0f0"></div>
<div class="a" style="left:612.2px;top:40.2px;width:76.4px;height:7.5px;background:#cde6fb;border:0.35px solid #9fcdf3"></div>
<svg class="a" style="left:613px;top:41.5px" width="6" height="5"><path d="M0.6 1.3 H4.6 L2.6 3.6Z" fill="#111"/></svg>
<div class="t" style="left:618.5px;top:41.70px;font-size:4.48px;letter-spacing:-0.240px;line-height:5.60px;color:#000;">Parameters</div>
<div class="t" style="left:613.2px;top:48.40px;font-size:4.48px;letter-spacing:-0.240px;line-height:5.60px;color:#000;font-weight:bold">$fs</div>
<div class="t" style="left:613.2px;top:54.50px;font-size:4.48px;letter-spacing:-0.240px;line-height:5.60px;color:#000;font-weight:bold">$fn</div>
<div class="a" style="left:650.9px;top:48px;width:32.6px;height:5px;background:#fff"></div>
<div class="a" style="left:650.9px;top:53.7px;width:32.6px;height:5.6px;background:#fff"></div>
<div class="t" style="left:677px;top:48.40px;font-size:4.48px;letter-spacing:-0.240px;line-height:5.60px;color:#000;">0.1</div>
<div class="t" style="left:676.3px;top:54.50px;font-size:4.48px;letter-spacing:-0.240px;line-height:5.60px;color:#000;">256</div>
<svg class="a" style="left:684px;top:48px" width="4" height="12"><path d="M0.8 2 L1.8 0.8 L2.8 2Z M0.8 3.2 L1.8 4.4 L2.8 3.2Z M0.8 7.7 L1.8 6.5 L2.8 7.7Z M0.8 8.9 L1.8 10.1 L2.8 8.9Z" fill="#222"/></svg>

<div class="hdr" style="left:216.5px;top:276.3px;width:223.2px;height:6.7px"></div>
<div class="t" style="left:218px;top:277.29px;font-size:4.82px;letter-spacing:-0.258px;line-height:6.02px;color:#222;">Console</div>
<svg class="a" style="left:433px;top:277.3px" width="5" height="5"><path d="M0.8 0.8 L3.6 3.6 M3.6 0.8 L0.8 3.6" stroke="#111" stroke-width="0.6"/></svg>
<div class="a" style="left:216.5px;top:283px;width:222.8px;height:124.5px;background:#fff"></div>
<div class="a" style="left:217.5px;top:298.6px;width:99.5px;height:8.2px;background:#fbf6ae"></div><div class="t" style="left:218.1px;top:287.87px;font-size:4.37px;letter-spacing:-0.234px;line-height:5.46px;color:#111;">Compiling design (CSG tree generation)...</div><div class="t" style="left:218.1px;top:292.41px;font-size:4.37px;letter-spacing:-0.234px;line-height:5.46px;color:#111;">Rendering Polygon Mesh using Manifold...</div><div class="t" style="left:218.1px;top:296.94px;font-size:4.37px;letter-spacing:-0.234px;line-height:5.46px;color:#111;">WARNING: GeometryEvaluator: Node didn't fit into cache.</div><div class="t" style="left:218.1px;top:301.48px;font-size:4.37px;letter-spacing:-0.234px;line-height:5.46px;color:#111;">WARNING: GeometryEvaluator: Node didn't fit into cache.</div><div class="t" style="left:218.1px;top:306.01px;font-size:4.37px;letter-spacing:-0.234px;line-height:5.46px;color:#111;">Geometries in cache: 1</div><div class="t" style="left:218.1px;top:310.55px;font-size:4.37px;letter-spacing:-0.234px;line-height:5.46px;color:#111;">Geometry cache size in bytes: 245680</div><div class="t" style="left:218.1px;top:315.08px;font-size:4.37px;letter-spacing:-0.234px;line-height:5.46px;color:#111;">CGAL Polyhedrons in cache: 0</div><div class="t" style="left:218.1px;top:319.62px;font-size:4.37px;letter-spacing:-0.234px;line-height:5.46px;color:#111;">CGAL cache size in bytes: 0</div><div class="t" style="left:218.1px;top:324.15px;font-size:4.37px;letter-spacing:-0.234px;line-height:5.46px;color:#111;">Total rendering time: 0:00:06.394</div><div class="t" style="left:218.1px;top:328.69px;font-size:4.37px;letter-spacing:-0.234px;line-height:5.46px;color:#111;">Top level object is a 3D object:</div><div class="t" style="left:218.1px;top:333.22px;font-size:4.37px;letter-spacing:-0.234px;line-height:5.46px;color:#111;">&nbsp;&nbsp;&nbsp;Facets:&nbsp;&nbsp;&nbsp;&nbsp;&nbsp;&nbsp;&nbsp;&nbsp;7859200</div><div class="t" style="left:218.1px;top:337.75px;font-size:4.37px;letter-spacing:-0.234px;line-height:5.46px;color:#111;">Bounding box:</div><div class="t" style="left:218.1px;top:342.29px;font-size:4.37px;letter-spacing:-0.234px;line-height:5.46px;color:#111;">&nbsp;&nbsp;&nbsp;Min:&nbsp;&nbsp;-568.21, -568.21, -1495.61</div><div class="t" style="left:218.1px;top:346.82px;font-size:4.37px;letter-spacing:-0.234px;line-height:5.46px;color:#111;">&nbsp;&nbsp;&nbsp;Max:&nbsp;&nbsp;&nbsp;568.21, 568.21, 538.06</div><div class="t" style="left:218.1px;top:351.36px;font-size:4.37px;letter-spacing:-0.234px;line-height:5.46px;color:#111;">&nbsp;&nbsp;&nbsp;Size: 1136.41, 1136.41, 2033.67</div><div class="t" style="left:218.1px;top:355.89px;font-size:4.37px;letter-spacing:-0.234px;line-height:5.46px;color:#111;">Measurements:</div><div class="t" style="left:218.1px;top:360.43px;font-size:4.37px;letter-spacing:-0.234px;line-height:5.46px;color:#111;">&nbsp;&nbsp;&nbsp;Surface: 4063460.25</div><div class="t" style="left:218.1px;top:364.97px;font-size:4.37px;letter-spacing:-0.234px;line-height:5.46px;color:#111;">&nbsp;&nbsp;&nbsp;Volume: 250082794.64</div><div class="t" style="left:218.1px;top:369.50px;font-size:4.37px;letter-spacing:-0.234px;line-height:5.46px;color:#111;">Camera:</div><div class="t" style="left:218.1px;top:374.04px;font-size:4.37px;letter-spacing:-0.234px;line-height:5.46px;color:#111;">&nbsp;&nbsp;&nbsp;Translation: 0.00, 0.00, 0.00</div><div class="t" style="left:218.1px;top:378.57px;font-size:4.37px;letter-spacing:-0.234px;line-height:5.46px;color:#111;">&nbsp;&nbsp;&nbsp;Rotation:&nbsp;&nbsp;&nbsp;&nbsp;&nbsp;55.00, 0.00, 25.00</div><div class="t" style="left:218.1px;top:383.11px;font-size:4.37px;letter-spacing:-0.234px;line-height:5.46px;color:#111;">&nbsp;&nbsp;&nbsp;Distance:&nbsp;&nbsp;&nbsp;&nbsp;&nbsp;140.30</div><div class="t" style="left:218.1px;top:387.64px;font-size:4.37px;letter-spacing:-0.234px;line-height:5.46px;color:#111;">&nbsp;&nbsp;&nbsp;FOV:&nbsp;&nbsp;&nbsp;&nbsp;&nbsp;&nbsp;&nbsp;&nbsp;&nbsp;&nbsp;&nbsp;22.50</div><div class="t" style="left:218.1px;top:392.18px;font-size:4.37px;letter-spacing:-0.234px;line-height:5.46px;color:#111;">Rendering finished.</div>

<div class="hdr" style="left:441px;top:276.3px;width:169px;height:6.5px"></div>
<div class="t" style="left:442.5px;top:277.29px;font-size:4.82px;letter-spacing:-0.258px;line-height:6.02px;color:#222;">Error-Log</div>
<svg class="a" style="left:605px;top:277.3px" width="5" height="5"><path d="M0.8 0.8 L3.6 3.6 M3.6 0.8 L0.8 3.6" stroke="#111" stroke-width="0.6"/></svg>
<div class="t" style="left:443.7px;top:287.09px;font-size:4.82px;letter-spacing:-0.258px;line-height:6.02px;color:#000;">Show</div>
<div class="a" style="left:456px;top:286.7px;width:41.2px;height:5.6px;background:#fff;border:0.3px solid #e3e3e3"></div>
<div class="t" style="left:457.4px;top:287.09px;font-size:4.82px;letter-spacing:-0.258px;line-height:6.02px;color:#000;">All</div>
<svg class="a" style="left:492px;top:287.6px" width="5" height="4"><path d="M0.8 1 L2 2.3 L3.2 1" stroke="#555" stroke-width="0.35" fill="none"/></svg>
<div class="a" style="left:444.4px;top:294.3px;width:163.3px;height:111px;background:#fff;border:0.4px solid #c9c9c9"></div>
<div class="a" style="left:444.8px;top:303.4px;width:85.6px;height:13px;background:#f0f0f0"></div><div class="a" style="left:463.4px;top:294.7px;width:0.35px;height:34px;background:#e2e2e2"></div><div class="a" style="left:511.4px;top:294.7px;width:0.35px;height:34px;background:#e2e2e2"></div><div class="a" style="left:530.4px;top:294.7px;width:0.35px;height:34px;background:#e2e2e2"></div><div class="a" style="left:444.8px;top:303.3px;width:162.6px;height:0.35px;background:#e6e6e6"></div><div class="a" style="left:444.8px;top:316.4px;width:162.6px;height:0.35px;background:#e6e6e6"></div><div class="a" style="left:444.8px;top:328.7px;width:162.6px;height:0.35px;background:#e6e6e6"></div><div class="t" style="left:446.6px;top:296.49px;font-size:4.82px;letter-spacing:-0.258px;line-height:6.02px;color:#111;">Group</div><div class="t" style="left:484.6px;top:296.49px;font-size:4.82px;letter-spacing:-0.258px;line-height:6.02px;color:#111;">File</div><div class="t" style="left:516.6px;top:296.49px;font-size:4.82px;letter-spacing:-0.258px;line-height:6.02px;color:#111;">Line</div><div class="t" style="left:565px;top:296.49px;font-size:4.82px;letter-spacing:-0.258px;line-height:6.02px;color:#111;">Info</div><div class="t" style="left:445px;top:307.59px;font-size:4.82px;letter-spacing:-0.258px;line-height:6.02px;color:#111;">WARNI...</div><div class="t" style="left:445px;top:319.99px;font-size:4.82px;letter-spacing:-0.258px;line-height:6.02px;color:#e8d400;">WARNI...</div><div class="t" style="left:531.6px;top:305.49px;font-size:4.82px;letter-spacing:-0.258px;line-height:6.02px;color:#111;">GeometryEvaluator: Node didn't fit into</div><div class="t" style="left:531.6px;top:309.79px;font-size:4.82px;letter-spacing:-0.258px;line-height:6.02px;color:#111;">cache.</div><div class="t" style="left:531.6px;top:317.79px;font-size:4.82px;letter-spacing:-0.258px;line-height:6.02px;color:#111;">GeometryEvaluator: Node didn't fit into</div><div class="t" style="left:531.6px;top:322.09px;font-size:4.82px;letter-spacing:-0.258px;line-height:6.02px;color:#111;">cache.</div>

<div class="a" style="left:0;top:407.4px;width:215.2px;height:0.6px;background:#9cc6ea"></div>
<div class="t" style="left:0.5px;top:409.10px;font-size:4.48px;letter-spacing:-0.240px;line-height:5.60px;color:#111;">Viewport: translate = [ 0.00 0.00 -478.78 ], rotate = [ 55.00 0.00 25.00 ], distance = 6643.19, fov = 22.50 (1644x1004)</div>
<div class="t" style="left:639.5px;top:409.10px;font-size:4.48px;letter-spacing:-0.240px;line-height:5.60px;color:#111;">OpenSCAD 2023.11.30 (git 1</div>
</body></html>
